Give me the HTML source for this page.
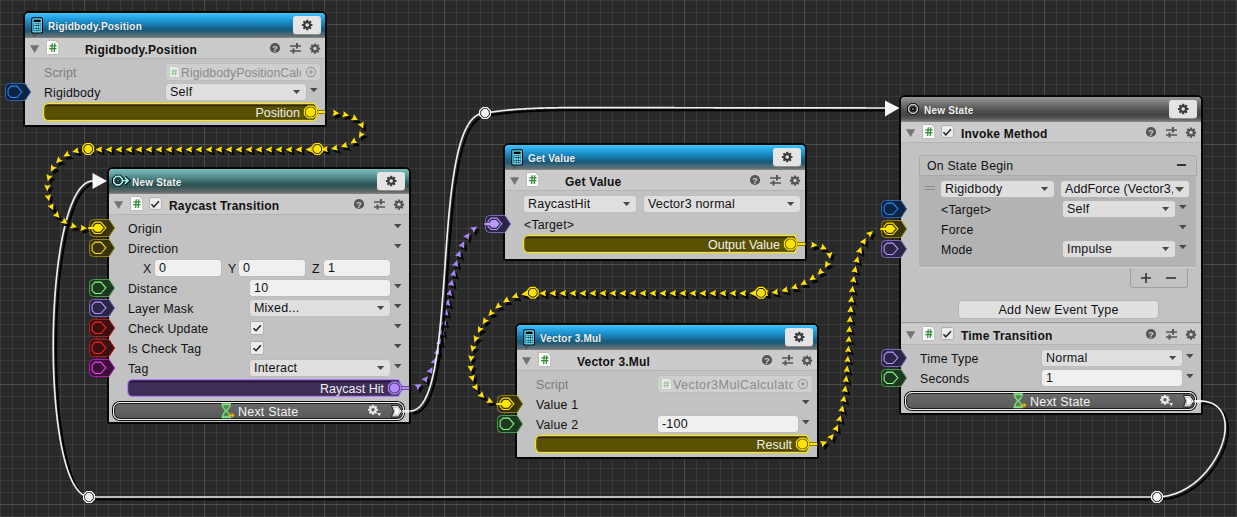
<!DOCTYPE html><html><head><meta charset="utf-8"><style>
html,body{margin:0;padding:0;width:1237px;height:517px;overflow:hidden;background:#292929;font-family:"Liberation Sans", sans-serif;}
.a{position:absolute;}
.t{position:absolute;white-space:nowrap;font-size:12.5px;letter-spacing:0.2px;color:#101010;line-height:14px;}
.b{font-weight:bold;}
</style></head><body>
<svg class="a" style="left:0;top:0" width="1237" height="517"><rect x="0" y="0" width="1" height="517" fill="#fff" fill-opacity="0.08"/><rect x="12" y="0" width="1" height="517" fill="#fff" fill-opacity="0.08"/><rect x="24" y="0" width="1" height="517" fill="#fff" fill-opacity="0.08"/><rect x="36" y="0" width="1" height="517" fill="#fff" fill-opacity="0.08"/><rect x="48" y="0" width="1" height="517" fill="#fff" fill-opacity="0.08"/><rect x="60" y="0" width="1" height="517" fill="#fff" fill-opacity="0.08"/><rect x="72" y="0" width="1" height="517" fill="#fff" fill-opacity="0.08"/><rect x="84" y="0" width="1" height="517" fill="#fff" fill-opacity="0.16"/><rect x="96" y="0" width="1" height="517" fill="#fff" fill-opacity="0.08"/><rect x="108" y="0" width="1" height="517" fill="#fff" fill-opacity="0.08"/><rect x="120" y="0" width="1" height="517" fill="#fff" fill-opacity="0.08"/><rect x="132" y="0" width="1" height="517" fill="#fff" fill-opacity="0.08"/><rect x="144" y="0" width="1" height="517" fill="#fff" fill-opacity="0.08"/><rect x="156" y="0" width="1" height="517" fill="#fff" fill-opacity="0.08"/><rect x="168" y="0" width="1" height="517" fill="#fff" fill-opacity="0.08"/><rect x="180" y="0" width="1" height="517" fill="#fff" fill-opacity="0.08"/><rect x="192" y="0" width="1" height="517" fill="#fff" fill-opacity="0.08"/><rect x="204" y="0" width="1" height="517" fill="#fff" fill-opacity="0.16"/><rect x="216" y="0" width="1" height="517" fill="#fff" fill-opacity="0.08"/><rect x="228" y="0" width="1" height="517" fill="#fff" fill-opacity="0.08"/><rect x="240" y="0" width="1" height="517" fill="#fff" fill-opacity="0.08"/><rect x="252" y="0" width="1" height="517" fill="#fff" fill-opacity="0.08"/><rect x="264" y="0" width="1" height="517" fill="#fff" fill-opacity="0.08"/><rect x="276" y="0" width="1" height="517" fill="#fff" fill-opacity="0.08"/><rect x="288" y="0" width="1" height="517" fill="#fff" fill-opacity="0.08"/><rect x="300" y="0" width="1" height="517" fill="#fff" fill-opacity="0.08"/><rect x="312" y="0" width="1" height="517" fill="#fff" fill-opacity="0.08"/><rect x="324" y="0" width="1" height="517" fill="#fff" fill-opacity="0.16"/><rect x="336" y="0" width="1" height="517" fill="#fff" fill-opacity="0.08"/><rect x="348" y="0" width="1" height="517" fill="#fff" fill-opacity="0.08"/><rect x="360" y="0" width="1" height="517" fill="#fff" fill-opacity="0.08"/><rect x="372" y="0" width="1" height="517" fill="#fff" fill-opacity="0.08"/><rect x="384" y="0" width="1" height="517" fill="#fff" fill-opacity="0.08"/><rect x="396" y="0" width="1" height="517" fill="#fff" fill-opacity="0.08"/><rect x="408" y="0" width="1" height="517" fill="#fff" fill-opacity="0.08"/><rect x="420" y="0" width="1" height="517" fill="#fff" fill-opacity="0.08"/><rect x="432" y="0" width="1" height="517" fill="#fff" fill-opacity="0.08"/><rect x="444" y="0" width="1" height="517" fill="#fff" fill-opacity="0.16"/><rect x="456" y="0" width="1" height="517" fill="#fff" fill-opacity="0.08"/><rect x="468" y="0" width="1" height="517" fill="#fff" fill-opacity="0.08"/><rect x="480" y="0" width="1" height="517" fill="#fff" fill-opacity="0.08"/><rect x="492" y="0" width="1" height="517" fill="#fff" fill-opacity="0.08"/><rect x="504" y="0" width="1" height="517" fill="#fff" fill-opacity="0.08"/><rect x="516" y="0" width="1" height="517" fill="#fff" fill-opacity="0.08"/><rect x="528" y="0" width="1" height="517" fill="#fff" fill-opacity="0.08"/><rect x="540" y="0" width="1" height="517" fill="#fff" fill-opacity="0.08"/><rect x="552" y="0" width="1" height="517" fill="#fff" fill-opacity="0.08"/><rect x="564" y="0" width="1" height="517" fill="#fff" fill-opacity="0.16"/><rect x="576" y="0" width="1" height="517" fill="#fff" fill-opacity="0.08"/><rect x="588" y="0" width="1" height="517" fill="#fff" fill-opacity="0.08"/><rect x="600" y="0" width="1" height="517" fill="#fff" fill-opacity="0.08"/><rect x="612" y="0" width="1" height="517" fill="#fff" fill-opacity="0.08"/><rect x="624" y="0" width="1" height="517" fill="#fff" fill-opacity="0.08"/><rect x="636" y="0" width="1" height="517" fill="#fff" fill-opacity="0.08"/><rect x="648" y="0" width="1" height="517" fill="#fff" fill-opacity="0.08"/><rect x="660" y="0" width="1" height="517" fill="#fff" fill-opacity="0.08"/><rect x="672" y="0" width="1" height="517" fill="#fff" fill-opacity="0.08"/><rect x="684" y="0" width="1" height="517" fill="#fff" fill-opacity="0.16"/><rect x="696" y="0" width="1" height="517" fill="#fff" fill-opacity="0.08"/><rect x="708" y="0" width="1" height="517" fill="#fff" fill-opacity="0.08"/><rect x="720" y="0" width="1" height="517" fill="#fff" fill-opacity="0.08"/><rect x="732" y="0" width="1" height="517" fill="#fff" fill-opacity="0.08"/><rect x="744" y="0" width="1" height="517" fill="#fff" fill-opacity="0.08"/><rect x="756" y="0" width="1" height="517" fill="#fff" fill-opacity="0.08"/><rect x="768" y="0" width="1" height="517" fill="#fff" fill-opacity="0.08"/><rect x="780" y="0" width="1" height="517" fill="#fff" fill-opacity="0.08"/><rect x="792" y="0" width="1" height="517" fill="#fff" fill-opacity="0.08"/><rect x="804" y="0" width="1" height="517" fill="#fff" fill-opacity="0.16"/><rect x="816" y="0" width="1" height="517" fill="#fff" fill-opacity="0.08"/><rect x="828" y="0" width="1" height="517" fill="#fff" fill-opacity="0.08"/><rect x="840" y="0" width="1" height="517" fill="#fff" fill-opacity="0.08"/><rect x="852" y="0" width="1" height="517" fill="#fff" fill-opacity="0.08"/><rect x="864" y="0" width="1" height="517" fill="#fff" fill-opacity="0.08"/><rect x="876" y="0" width="1" height="517" fill="#fff" fill-opacity="0.08"/><rect x="888" y="0" width="1" height="517" fill="#fff" fill-opacity="0.08"/><rect x="900" y="0" width="1" height="517" fill="#fff" fill-opacity="0.08"/><rect x="912" y="0" width="1" height="517" fill="#fff" fill-opacity="0.08"/><rect x="924" y="0" width="1" height="517" fill="#fff" fill-opacity="0.16"/><rect x="936" y="0" width="1" height="517" fill="#fff" fill-opacity="0.08"/><rect x="948" y="0" width="1" height="517" fill="#fff" fill-opacity="0.08"/><rect x="960" y="0" width="1" height="517" fill="#fff" fill-opacity="0.08"/><rect x="972" y="0" width="1" height="517" fill="#fff" fill-opacity="0.08"/><rect x="984" y="0" width="1" height="517" fill="#fff" fill-opacity="0.08"/><rect x="996" y="0" width="1" height="517" fill="#fff" fill-opacity="0.08"/><rect x="1008" y="0" width="1" height="517" fill="#fff" fill-opacity="0.08"/><rect x="1020" y="0" width="1" height="517" fill="#fff" fill-opacity="0.08"/><rect x="1032" y="0" width="1" height="517" fill="#fff" fill-opacity="0.08"/><rect x="1044" y="0" width="1" height="517" fill="#fff" fill-opacity="0.16"/><rect x="1056" y="0" width="1" height="517" fill="#fff" fill-opacity="0.08"/><rect x="1068" y="0" width="1" height="517" fill="#fff" fill-opacity="0.08"/><rect x="1080" y="0" width="1" height="517" fill="#fff" fill-opacity="0.08"/><rect x="1092" y="0" width="1" height="517" fill="#fff" fill-opacity="0.08"/><rect x="1104" y="0" width="1" height="517" fill="#fff" fill-opacity="0.08"/><rect x="1116" y="0" width="1" height="517" fill="#fff" fill-opacity="0.08"/><rect x="1128" y="0" width="1" height="517" fill="#fff" fill-opacity="0.08"/><rect x="1140" y="0" width="1" height="517" fill="#fff" fill-opacity="0.08"/><rect x="1152" y="0" width="1" height="517" fill="#fff" fill-opacity="0.08"/><rect x="1164" y="0" width="1" height="517" fill="#fff" fill-opacity="0.16"/><rect x="1176" y="0" width="1" height="517" fill="#fff" fill-opacity="0.08"/><rect x="1188" y="0" width="1" height="517" fill="#fff" fill-opacity="0.08"/><rect x="1200" y="0" width="1" height="517" fill="#fff" fill-opacity="0.08"/><rect x="1212" y="0" width="1" height="517" fill="#fff" fill-opacity="0.08"/><rect x="1224" y="0" width="1" height="517" fill="#fff" fill-opacity="0.08"/><rect x="1236" y="0" width="1" height="517" fill="#fff" fill-opacity="0.08"/><rect x="0" y="0" width="1237" height="1" fill="#fff" fill-opacity="0.08"/><rect x="0" y="12" width="1237" height="1" fill="#fff" fill-opacity="0.08"/><rect x="0" y="24" width="1237" height="1" fill="#fff" fill-opacity="0.16"/><rect x="0" y="36" width="1237" height="1" fill="#fff" fill-opacity="0.08"/><rect x="0" y="48" width="1237" height="1" fill="#fff" fill-opacity="0.08"/><rect x="0" y="60" width="1237" height="1" fill="#fff" fill-opacity="0.08"/><rect x="0" y="72" width="1237" height="1" fill="#fff" fill-opacity="0.08"/><rect x="0" y="84" width="1237" height="1" fill="#fff" fill-opacity="0.08"/><rect x="0" y="96" width="1237" height="1" fill="#fff" fill-opacity="0.08"/><rect x="0" y="108" width="1237" height="1" fill="#fff" fill-opacity="0.08"/><rect x="0" y="120" width="1237" height="1" fill="#fff" fill-opacity="0.08"/><rect x="0" y="132" width="1237" height="1" fill="#fff" fill-opacity="0.08"/><rect x="0" y="144" width="1237" height="1" fill="#fff" fill-opacity="0.16"/><rect x="0" y="156" width="1237" height="1" fill="#fff" fill-opacity="0.08"/><rect x="0" y="168" width="1237" height="1" fill="#fff" fill-opacity="0.08"/><rect x="0" y="180" width="1237" height="1" fill="#fff" fill-opacity="0.08"/><rect x="0" y="192" width="1237" height="1" fill="#fff" fill-opacity="0.08"/><rect x="0" y="204" width="1237" height="1" fill="#fff" fill-opacity="0.08"/><rect x="0" y="216" width="1237" height="1" fill="#fff" fill-opacity="0.08"/><rect x="0" y="228" width="1237" height="1" fill="#fff" fill-opacity="0.08"/><rect x="0" y="240" width="1237" height="1" fill="#fff" fill-opacity="0.08"/><rect x="0" y="252" width="1237" height="1" fill="#fff" fill-opacity="0.08"/><rect x="0" y="264" width="1237" height="1" fill="#fff" fill-opacity="0.16"/><rect x="0" y="276" width="1237" height="1" fill="#fff" fill-opacity="0.08"/><rect x="0" y="288" width="1237" height="1" fill="#fff" fill-opacity="0.08"/><rect x="0" y="300" width="1237" height="1" fill="#fff" fill-opacity="0.08"/><rect x="0" y="312" width="1237" height="1" fill="#fff" fill-opacity="0.08"/><rect x="0" y="324" width="1237" height="1" fill="#fff" fill-opacity="0.08"/><rect x="0" y="336" width="1237" height="1" fill="#fff" fill-opacity="0.08"/><rect x="0" y="348" width="1237" height="1" fill="#fff" fill-opacity="0.08"/><rect x="0" y="360" width="1237" height="1" fill="#fff" fill-opacity="0.08"/><rect x="0" y="372" width="1237" height="1" fill="#fff" fill-opacity="0.08"/><rect x="0" y="384" width="1237" height="1" fill="#fff" fill-opacity="0.16"/><rect x="0" y="396" width="1237" height="1" fill="#fff" fill-opacity="0.08"/><rect x="0" y="408" width="1237" height="1" fill="#fff" fill-opacity="0.08"/><rect x="0" y="420" width="1237" height="1" fill="#fff" fill-opacity="0.08"/><rect x="0" y="432" width="1237" height="1" fill="#fff" fill-opacity="0.08"/><rect x="0" y="444" width="1237" height="1" fill="#fff" fill-opacity="0.08"/><rect x="0" y="456" width="1237" height="1" fill="#fff" fill-opacity="0.08"/><rect x="0" y="468" width="1237" height="1" fill="#fff" fill-opacity="0.08"/><rect x="0" y="480" width="1237" height="1" fill="#fff" fill-opacity="0.08"/><rect x="0" y="492" width="1237" height="1" fill="#fff" fill-opacity="0.08"/><rect x="0" y="504" width="1237" height="1" fill="#fff" fill-opacity="0.16"/><rect x="0" y="516" width="1237" height="1" fill="#fff" fill-opacity="0.08"/></svg>
<div class="a" style="left:23px;top:11px;width:304px;height:116px;background:#050505;border-radius:6px 6px 2px 2px"></div>
<div class="a" style="left:25px;top:13px;width:300px;height:112px;background:#c2c2c2;border-radius:4px 4px 0 0;overflow:hidden"><div class="a" style="left:0;top:0;width:300px;height:25px;background:linear-gradient(to bottom,#42c4f8 0px,#30b0ee 3px,#1c92cf 8px,#177aab 12px,#155e80 16px,#1f5a78 18px,#486a7a 21px,#5c6c74 23px,#8a8a8a 25px)"></div></div>
<div class="a" style="left:293px;top:16px;width:28px;height:18px;background:#e4e4e4;border-radius:3px;box-shadow:0 1px 0 #9a8a80"></div>
<svg style="position:absolute;left:293px;top:16px;overflow:visible" width="28" height="18" viewBox="0 0 28 18" ><g transform="translate(14.2,9)"><circle r="3.82" fill="#3a3a3a"/><rect x="-1.11" y="-5.30" width="2.23" height="2.48" rx="0.67" fill="#3a3a3a" transform="rotate(0)"/><rect x="-1.11" y="-5.30" width="2.23" height="2.48" rx="0.67" fill="#3a3a3a" transform="rotate(45)"/><rect x="-1.11" y="-5.30" width="2.23" height="2.48" rx="0.67" fill="#3a3a3a" transform="rotate(90)"/><rect x="-1.11" y="-5.30" width="2.23" height="2.48" rx="0.67" fill="#3a3a3a" transform="rotate(135)"/><rect x="-1.11" y="-5.30" width="2.23" height="2.48" rx="0.67" fill="#3a3a3a" transform="rotate(180)"/><rect x="-1.11" y="-5.30" width="2.23" height="2.48" rx="0.67" fill="#3a3a3a" transform="rotate(225)"/><rect x="-1.11" y="-5.30" width="2.23" height="2.48" rx="0.67" fill="#3a3a3a" transform="rotate(270)"/><rect x="-1.11" y="-5.30" width="2.23" height="2.48" rx="0.67" fill="#3a3a3a" transform="rotate(315)"/><circle r="1.80" fill="#e4e4e4"/></g></svg>
<div class="t b" style="left:48px;top:20px;font-size:10px;color:#f4f4f4;text-shadow:0 0 1px rgba(0,0,0,.5)">Rigidbody.Position</div>
<svg style="position:absolute;left:31px;top:16.5px;overflow:visible" width="13" height="22" viewBox="0 0 13 22" ><rect x="0.2" y="0.2" width="11.8" height="16.4" rx="1.8" fill="#000"/><rect x="1.3" y="1.3" width="9.6" height="14.2" rx="1" fill="#6ae4ff"/><rect x="2.6" y="2.6" width="7" height="2.4" fill="#000"/><rect x="2.6" y="5.9" width="7" height="8.2" fill="#000"/><rect x="3.00" y="6.30" width="1.95" height="2.1" fill="#6ae4ff"/><rect x="5.30" y="6.30" width="1.95" height="2.1" fill="#6ae4ff"/><rect x="7.60" y="6.30" width="1.95" height="2.1" fill="#6ae4ff"/><rect x="3.00" y="8.90" width="1.95" height="2.1" fill="#6ae4ff"/><rect x="5.30" y="8.90" width="1.95" height="2.1" fill="#6ae4ff"/><rect x="7.60" y="8.90" width="1.95" height="2.1" fill="#6ae4ff"/><rect x="3.00" y="11.50" width="1.95" height="2.1" fill="#6ae4ff"/><rect x="5.30" y="11.50" width="1.95" height="2.1" fill="#6ae4ff"/><rect x="7.60" y="11.50" width="1.95" height="2.1" fill="#6ae4ff"/><path d="M0.5,17 H6.5 L3.5,20.5Z" fill="#555" opacity="0.85"/></svg>
<div class="a" style="left:25px;top:38px;width:300px;height:20px;background:#cbcbcb;border-bottom:1px solid #b4b4b4"></div>
<svg style="position:absolute;left:30px;top:45px;overflow:visible" width="10" height="9" viewBox="0 0 10 9" ><path d="M0,0.3 L9.2,0.3 L4.6,8Z" fill="#737373"/></svg>
<svg style="position:absolute;left:45.5px;top:40.4px;overflow:visible" width="14" height="16" viewBox="0 0 14 16" ><path d="M1.5,0.5 H9.3 L12.8,4 V13.6 Q12.8,14.6 11.8,14.6 H1.5 Q0.5,14.6 0.5,13.6 V1.5 Q0.5,0.5 1.5,0.5Z" fill="#fdfdfd" stroke="#b4b4b4" stroke-width="0.9"/><path d="M6.3,3.2 L5.7,12 M8.8,3.2 L8.2,12 M3.4,5.8 H10.6 M3.2,8.6 H10.4" stroke="#2f8a2f" stroke-width="1.25" fill="none"/></svg>
<div class="t b" style="left:85px;top:43px;font-size:12px;color:#111">Rigidbody.Position</div>
<svg style="position:absolute;left:269px;top:42px;overflow:visible" width="12" height="12" viewBox="0 0 12 12" ><circle cx="6" cy="6" r="5.1" fill="#555"/><text x="6" y="9.8" font-size="9.5" font-weight="bold" text-anchor="middle" fill="#cbcbcb" font-family="Liberation Sans">?</text></svg>
<svg style="position:absolute;left:289px;top:41.5px;overflow:visible" width="13" height="12" viewBox="0 0 13 12" ><path d="M1,4 H12 M1,9 H12" stroke="#555" stroke-width="1.6"/><path d="M8,1 V6.5 M4.5,6.5 V11.5" stroke="#555" stroke-width="2"/></svg>
<svg style="position:absolute;left:308px;top:40px;overflow:visible" width="14" height="14" viewBox="0 0 14 14" ><g transform="translate(7,8.6)"><circle r="3.74" fill="#555"/><rect x="-1.09" y="-5.20" width="2.18" height="2.46" rx="0.66" fill="#555" transform="rotate(0)"/><rect x="-1.09" y="-5.20" width="2.18" height="2.46" rx="0.66" fill="#555" transform="rotate(45)"/><rect x="-1.09" y="-5.20" width="2.18" height="2.46" rx="0.66" fill="#555" transform="rotate(90)"/><rect x="-1.09" y="-5.20" width="2.18" height="2.46" rx="0.66" fill="#555" transform="rotate(135)"/><rect x="-1.09" y="-5.20" width="2.18" height="2.46" rx="0.66" fill="#555" transform="rotate(180)"/><rect x="-1.09" y="-5.20" width="2.18" height="2.46" rx="0.66" fill="#555" transform="rotate(225)"/><rect x="-1.09" y="-5.20" width="2.18" height="2.46" rx="0.66" fill="#555" transform="rotate(270)"/><rect x="-1.09" y="-5.20" width="2.18" height="2.46" rx="0.66" fill="#555" transform="rotate(315)"/><circle r="1.77" fill="#cbcbcb"/></g></svg>
<div class="t" style="left:44px;top:65.5px;font-size:12.3px;color:#7a7a7a;">Script</div>
<div class="a" style="left:166px;top:64px;width:154px;height:16px;background:#cfcfcf;border-radius:3px;box-shadow:0 0 0 0.5px #b8b8b8"></div>
<svg style="position:absolute;left:169px;top:66px;overflow:visible" width="11" height="12" viewBox="0 0 11 12" ><path d="M1,0.5 H7.5 L10.5,3.5 V11 Q10.5,11.5 10,11.5 H1 Q0.5,11.5 0.5,11 V1 Q0.5,0.5 1,0.5Z" fill="#ececec" stroke="#c4c4c4" stroke-width="0.8"/><path d="M4.3,3 L3.7,9.5 M7,3 L6.4,9.5 M2.4,5 H8.4 M2.2,7.5 H8.2" stroke="#8cbf8c" stroke-width="0.9"/></svg>
<div class="t" style="left:181px;top:66px;width:120px;overflow:hidden;font-size:12.3px;letter-spacing:0.05px;color:#8a8a8a">RigidbodyPositionCalculator</div>
<svg style="position:absolute;left:305px;top:66px;overflow:visible" width="12" height="12" viewBox="0 0 12 12" ><circle cx="6" cy="6" r="4.6" fill="none" stroke="#9a9a9a" stroke-width="1.1"/><circle cx="6" cy="6" r="1.8" fill="#9a9a9a"/></svg>
<svg style="position:absolute;left:5px;top:83px;overflow:visible" width="26" height="18" viewBox="0 0 26 18" ><path d="M4.5,0.5 H20 L25.6,9 L20,17.5 H4.5 Q0.5,17.5 0.5,13.5 V4.5 Q0.5,0.5 4.5,0.5Z" fill="#0d2440" stroke="#2d62a6" stroke-width="1"/><path d="M6.1,3.1 L11.8,3.1 L16.9,8.8 L11.8,14.5 L6.1,14.5 L3.1,11.6 L3.1,6.1Z" fill="none" stroke="#1e8cff" stroke-width="1.05"/></svg>
<div class="t" style="left:44px;top:85.5px;font-size:12.3px;color:#111;">Rigidbody</div>
<div class="a" style="left:166px;top:84px;width:140px;height:16px;background:#dfdfdf;border-radius:3px;box-shadow:0 0 0 0.5px #b8b8b8"></div>
<div class="t" style="left:170px;top:85px;font-size:12.5px;letter-spacing:0.2px;color:#111">Self</div>
<svg style="position:absolute;left:293.3px;top:90px;overflow:visible" width="8" height="5" viewBox="0 0 8 5" ><path d="M0,0 H7.2 L3.6,3.9Z" fill="#4a4a44"/></svg>
<svg style="position:absolute;left:310.1px;top:87.9px;overflow:visible" width="9" height="6" viewBox="0 0 9 6" ><path d="M0,0 H7.6 L3.8,4.2Z" fill="#4a4a44"/></svg>
<svg style="position:absolute;left:43px;top:103px;overflow:visible" width="283" height="18" viewBox="0 0 283 18" ><defs><linearGradient id="gyellow112" x1="0" y1="0" x2="0" y2="1"><stop offset="0.06" stop-color="#2e2a00"/><stop offset="0.12" stop-color="#2e2a00"/><stop offset="0.2" stop-color="#5a5100"/><stop offset="0.86" stop-color="#5a5100"/><stop offset="0.94" stop-color="#2e2a00" stop-opacity="0.9"/></linearGradient></defs><path d="M6,0.6 H271.5 L276.3,9 L271.5,17.4 H6 Q0.6,17.4 0.6,12 V6 Q0.6,0.6 6,0.6Z" fill="url(#gyellow112)" stroke="#ffe800" stroke-width="1.2"/><rect x="274" y="7.4" width="8.5" height="3.2" fill="#ffe400" stroke="#111" stroke-width="0.5"/><polygon points="273.60,11.45 270.03,14.91 264.97,14.91 261.40,11.45 261.40,6.55 264.97,3.09 270.03,3.09 273.60,6.55" fill="#5a5100" stroke="#ffe400" stroke-width="1.1"/><polygon points="272.12,10.84 269.41,13.43 265.59,13.43 262.88,10.84 262.88,7.16 265.59,4.57 269.41,4.57 272.12,7.16" fill="#ffe400"/></svg>
<div class="t" style="left:43px;top:106px;width:257px;text-align:right;font-size:12.5px;letter-spacing:0px;color:#f0f0f0">Position</div>
<div class="a" style="left:107px;top:167px;width:304px;height:257px;background:#050505;border-radius:6px 6px 2px 2px"></div>
<div class="a" style="left:109px;top:169px;width:300px;height:253px;background:#c2c2c2;border-radius:4px 4px 0 0;overflow:hidden"><div class="a" style="left:0;top:0;width:300px;height:25px;background:linear-gradient(to bottom,#7bbcbb 0px,#6aa8a8 4px,#4f8585 9px,#345e5e 14px,#2e5252 17px,#4a6060 20px,#626a6a 23px,#8a8a8a 25px)"></div></div>
<div class="a" style="left:377px;top:172px;width:28px;height:18px;background:#e4e4e4;border-radius:3px;box-shadow:0 1px 0 #9a8a80"></div>
<svg style="position:absolute;left:377px;top:172px;overflow:visible" width="28" height="18" viewBox="0 0 28 18" ><g transform="translate(14.2,9)"><circle r="3.82" fill="#3a3a3a"/><rect x="-1.11" y="-5.30" width="2.23" height="2.48" rx="0.67" fill="#3a3a3a" transform="rotate(0)"/><rect x="-1.11" y="-5.30" width="2.23" height="2.48" rx="0.67" fill="#3a3a3a" transform="rotate(45)"/><rect x="-1.11" y="-5.30" width="2.23" height="2.48" rx="0.67" fill="#3a3a3a" transform="rotate(90)"/><rect x="-1.11" y="-5.30" width="2.23" height="2.48" rx="0.67" fill="#3a3a3a" transform="rotate(135)"/><rect x="-1.11" y="-5.30" width="2.23" height="2.48" rx="0.67" fill="#3a3a3a" transform="rotate(180)"/><rect x="-1.11" y="-5.30" width="2.23" height="2.48" rx="0.67" fill="#3a3a3a" transform="rotate(225)"/><rect x="-1.11" y="-5.30" width="2.23" height="2.48" rx="0.67" fill="#3a3a3a" transform="rotate(270)"/><rect x="-1.11" y="-5.30" width="2.23" height="2.48" rx="0.67" fill="#3a3a3a" transform="rotate(315)"/><circle r="1.80" fill="#e4e4e4"/></g></svg>
<div class="t b" style="left:132px;top:176px;font-size:10px;color:#f4f4f4;text-shadow:0 0 1px rgba(0,0,0,.5)">New State</div>
<svg style="position:absolute;left:112px;top:174px;overflow:visible" width="24" height="15" viewBox="0 0 24 15" ><polygon points="10.25,8.36 7.76,10.85 4.24,10.85 1.75,8.36 1.75,4.84 4.24,2.35 7.76,2.35 10.25,4.84" fill="none" stroke="#000" stroke-width="3.4"/><path d="M10,6.6 H15 M12.8,3.3 L16.3,6.6 L12.8,9.9" stroke="#000" stroke-width="3.6" fill="none" stroke-linejoin="miter"/><polygon points="10.25,8.36 7.76,10.85 4.24,10.85 1.75,8.36 1.75,4.84 4.24,2.35 7.76,2.35 10.25,4.84" fill="none" stroke="#a0f0f0" stroke-width="1.6"/><circle cx="6" cy="6.6" r="1.6" fill="#4a8888" stroke="#000" stroke-width="1"/><path d="M10,6.6 H15.5 M12.8,3.3 L16.3,6.6 L12.8,9.9" stroke="#a0f0f0" stroke-width="1.6" fill="none"/></svg>
<div class="a" style="left:109px;top:194px;width:300px;height:20px;background:#cbcbcb;border-bottom:1px solid #b4b4b4"></div>
<svg style="position:absolute;left:114px;top:201px;overflow:visible" width="10" height="9" viewBox="0 0 10 9" ><path d="M0,0.3 L9.2,0.3 L4.6,8Z" fill="#737373"/></svg>
<svg style="position:absolute;left:129.5px;top:196.4px;overflow:visible" width="14" height="16" viewBox="0 0 14 16" ><path d="M1.5,0.5 H9.3 L12.8,4 V13.6 Q12.8,14.6 11.8,14.6 H1.5 Q0.5,14.6 0.5,13.6 V1.5 Q0.5,0.5 1.5,0.5Z" fill="#fdfdfd" stroke="#b4b4b4" stroke-width="0.9"/><path d="M6.3,3.2 L5.7,12 M8.8,3.2 L8.2,12 M3.4,5.8 H10.6 M3.2,8.6 H10.4" stroke="#2f8a2f" stroke-width="1.25" fill="none"/></svg>
<div class="a" style="left:148.5px;top:196.5px;width:11px;height:11.5px;background:#ececec;border:1px solid #b0b0b0;border-radius:2px"></div>
<svg style="position:absolute;left:149px;top:196.5px;overflow:visible" width="12" height="13" viewBox="0 0 12 13" ><path d="M2.4,7.2 L4.8,9.8 L10,4.2" stroke="#2a2a2a" stroke-width="1.5" fill="none"/></svg>
<div class="t b" style="left:169px;top:199px;font-size:12px;color:#111">Raycast Transition</div>
<svg style="position:absolute;left:353px;top:198px;overflow:visible" width="12" height="12" viewBox="0 0 12 12" ><circle cx="6" cy="6" r="5.1" fill="#555"/><text x="6" y="9.8" font-size="9.5" font-weight="bold" text-anchor="middle" fill="#cbcbcb" font-family="Liberation Sans">?</text></svg>
<svg style="position:absolute;left:373px;top:197.5px;overflow:visible" width="13" height="12" viewBox="0 0 13 12" ><path d="M1,4 H12 M1,9 H12" stroke="#555" stroke-width="1.6"/><path d="M8,1 V6.5 M4.5,6.5 V11.5" stroke="#555" stroke-width="2"/></svg>
<svg style="position:absolute;left:392px;top:196px;overflow:visible" width="14" height="14" viewBox="0 0 14 14" ><g transform="translate(7,8.6)"><circle r="3.74" fill="#555"/><rect x="-1.09" y="-5.20" width="2.18" height="2.46" rx="0.66" fill="#555" transform="rotate(0)"/><rect x="-1.09" y="-5.20" width="2.18" height="2.46" rx="0.66" fill="#555" transform="rotate(45)"/><rect x="-1.09" y="-5.20" width="2.18" height="2.46" rx="0.66" fill="#555" transform="rotate(90)"/><rect x="-1.09" y="-5.20" width="2.18" height="2.46" rx="0.66" fill="#555" transform="rotate(135)"/><rect x="-1.09" y="-5.20" width="2.18" height="2.46" rx="0.66" fill="#555" transform="rotate(180)"/><rect x="-1.09" y="-5.20" width="2.18" height="2.46" rx="0.66" fill="#555" transform="rotate(225)"/><rect x="-1.09" y="-5.20" width="2.18" height="2.46" rx="0.66" fill="#555" transform="rotate(270)"/><rect x="-1.09" y="-5.20" width="2.18" height="2.46" rx="0.66" fill="#555" transform="rotate(315)"/><circle r="1.77" fill="#cbcbcb"/></g></svg>
<svg style="position:absolute;left:89px;top:219px;overflow:visible" width="26" height="18" viewBox="0 0 26 18" ><path d="M4.5,0.5 H20 L25.6,9 L20,17.5 H4.5 Q0.5,17.5 0.5,13.5 V4.5 Q0.5,0.5 4.5,0.5Z" fill="#38330c" stroke="#8e7e14" stroke-width="1"/><rect x="-1" y="7.6" width="7" height="2.8" fill="#ffe400" stroke="#111" stroke-width="0.5"/><path d="M6.1,3.1 L11.8,3.1 L16.9,8.8 L11.8,14.5 L6.1,14.5 L3.1,11.6 L3.1,6.1Z" fill="none" stroke="#ffe400" stroke-width="1.05"/><path d="M6.9,4.9 L11.1,4.9 L14.7,8.8 L11.1,12.7 L6.9,12.7 L4.9,10.8 L4.9,6.9Z" fill="#ffe400"/></svg>
<div class="t" style="left:128px;top:221.5px;font-size:12.3px;color:#111;">Origin</div>
<svg style="position:absolute;left:394.1px;top:223.9px;overflow:visible" width="9" height="6" viewBox="0 0 9 6" ><path d="M0,0 H7.6 L3.8,4.2Z" fill="#4a4a44"/></svg>
<svg style="position:absolute;left:89px;top:239px;overflow:visible" width="26" height="18" viewBox="0 0 26 18" ><path d="M4.5,0.5 H20 L25.6,9 L20,17.5 H4.5 Q0.5,17.5 0.5,13.5 V4.5 Q0.5,0.5 4.5,0.5Z" fill="#38330c" stroke="#8e7e14" stroke-width="1"/><path d="M6.1,3.1 L11.8,3.1 L16.9,8.8 L11.8,14.5 L6.1,14.5 L3.1,11.6 L3.1,6.1Z" fill="none" stroke="#ffe400" stroke-width="1.05"/></svg>
<div class="t" style="left:128px;top:241.5px;font-size:12.3px;color:#111;">Direction</div>
<svg style="position:absolute;left:394.1px;top:243.9px;overflow:visible" width="9" height="6" viewBox="0 0 9 6" ><path d="M0,0 H7.6 L3.8,4.2Z" fill="#4a4a44"/></svg>
<div class="t" style="left:143px;top:261.5px;font-size:12.3px;color:#111;">X</div>
<div class="a" style="left:155px;top:260px;width:66px;height:16px;background:#f0f0f0;border-radius:3px;box-shadow:0 0 0 0.5px #b8b8b8"></div>
<div class="t" style="left:159px;top:261px;font-size:12.5px;letter-spacing:0.2px;color:#111">0</div>
<div class="t" style="left:228px;top:261.5px;font-size:12.3px;color:#111;">Y</div>
<div class="a" style="left:239px;top:260px;width:66px;height:16px;background:#f0f0f0;border-radius:3px;box-shadow:0 0 0 0.5px #b8b8b8"></div>
<div class="t" style="left:243px;top:261px;font-size:12.5px;letter-spacing:0.2px;color:#111">0</div>
<div class="t" style="left:312px;top:261.5px;font-size:12.3px;color:#111;">Z</div>
<div class="a" style="left:324px;top:260px;width:66px;height:16px;background:#f0f0f0;border-radius:3px;box-shadow:0 0 0 0.5px #b8b8b8"></div>
<div class="t" style="left:328px;top:261px;font-size:12.5px;letter-spacing:0.2px;color:#111">1</div>
<svg style="position:absolute;left:89px;top:279px;overflow:visible" width="26" height="18" viewBox="0 0 26 18" ><path d="M4.5,0.5 H20 L25.6,9 L20,17.5 H4.5 Q0.5,17.5 0.5,13.5 V4.5 Q0.5,0.5 4.5,0.5Z" fill="#1d3a1e" stroke="#4a984c" stroke-width="1"/><path d="M6.1,3.1 L11.8,3.1 L16.9,8.8 L11.8,14.5 L6.1,14.5 L3.1,11.6 L3.1,6.1Z" fill="none" stroke="#86ff86" stroke-width="1.05"/></svg>
<div class="t" style="left:128px;top:281.5px;font-size:12.3px;color:#111;">Distance</div>
<div class="a" style="left:250px;top:280px;width:140px;height:16px;background:#f0f0f0;border-radius:3px;box-shadow:0 0 0 0.5px #b8b8b8"></div>
<div class="t" style="left:254px;top:281px;font-size:12.5px;letter-spacing:0.2px;color:#111">10</div>
<svg style="position:absolute;left:394.1px;top:283.9px;overflow:visible" width="9" height="6" viewBox="0 0 9 6" ><path d="M0,0 H7.6 L3.8,4.2Z" fill="#4a4a44"/></svg>
<svg style="position:absolute;left:89px;top:299px;overflow:visible" width="26" height="18" viewBox="0 0 26 18" ><path d="M4.5,0.5 H20 L25.6,9 L20,17.5 H4.5 Q0.5,17.5 0.5,13.5 V4.5 Q0.5,0.5 4.5,0.5Z" fill="#2c2646" stroke="#7a68b6" stroke-width="1"/><path d="M6.1,3.1 L11.8,3.1 L16.9,8.8 L11.8,14.5 L6.1,14.5 L3.1,11.6 L3.1,6.1Z" fill="none" stroke="#b898ff" stroke-width="1.05"/></svg>
<div class="t" style="left:128px;top:301.5px;font-size:12.3px;color:#111;">Layer Mask</div>
<div class="a" style="left:250px;top:300px;width:140px;height:16px;background:#dfdfdf;border-radius:3px;box-shadow:0 0 0 0.5px #b8b8b8"></div>
<div class="t" style="left:254px;top:301px;font-size:12.5px;letter-spacing:0.2px;color:#111">Mixed...</div>
<svg style="position:absolute;left:377.3px;top:306px;overflow:visible" width="8" height="5" viewBox="0 0 8 5" ><path d="M0,0 H7.2 L3.6,3.9Z" fill="#4a4a44"/></svg>
<svg style="position:absolute;left:394.1px;top:303.9px;overflow:visible" width="9" height="6" viewBox="0 0 9 6" ><path d="M0,0 H7.6 L3.8,4.2Z" fill="#4a4a44"/></svg>
<svg style="position:absolute;left:89px;top:319px;overflow:visible" width="26" height="18" viewBox="0 0 26 18" ><path d="M4.5,0.5 H20 L25.6,9 L20,17.5 H4.5 Q0.5,17.5 0.5,13.5 V4.5 Q0.5,0.5 4.5,0.5Z" fill="#3c1010" stroke="#b0181a" stroke-width="1"/><path d="M6.1,3.1 L11.8,3.1 L16.9,8.8 L11.8,14.5 L6.1,14.5 L3.1,11.6 L3.1,6.1Z" fill="none" stroke="#ff2424" stroke-width="1.05"/></svg>
<div class="t" style="left:128px;top:321.5px;font-size:12.3px;color:#111;">Check Update</div>
<svg style="position:absolute;left:394.1px;top:323.9px;overflow:visible" width="9" height="6" viewBox="0 0 9 6" ><path d="M0,0 H7.6 L3.8,4.2Z" fill="#4a4a44"/></svg>
<div class="a" style="left:250px;top:321px;width:12px;height:12px;background:#ececec;border:1px solid #b0b0b0;border-radius:2px"></div>
<svg style="position:absolute;left:251px;top:322px;overflow:visible" width="12" height="12" viewBox="0 0 12 12" ><path d="M2.5,6.2 L5,8.7 L9.8,3.2" stroke="#222" stroke-width="1.6" fill="none"/></svg>
<svg style="position:absolute;left:89px;top:339px;overflow:visible" width="26" height="18" viewBox="0 0 26 18" ><path d="M4.5,0.5 H20 L25.6,9 L20,17.5 H4.5 Q0.5,17.5 0.5,13.5 V4.5 Q0.5,0.5 4.5,0.5Z" fill="#3c1010" stroke="#b0181a" stroke-width="1"/><path d="M6.1,3.1 L11.8,3.1 L16.9,8.8 L11.8,14.5 L6.1,14.5 L3.1,11.6 L3.1,6.1Z" fill="none" stroke="#ff2424" stroke-width="1.05"/></svg>
<div class="t" style="left:128px;top:341.5px;font-size:12.3px;color:#111;">Is Check Tag</div>
<svg style="position:absolute;left:394.1px;top:343.9px;overflow:visible" width="9" height="6" viewBox="0 0 9 6" ><path d="M0,0 H7.6 L3.8,4.2Z" fill="#4a4a44"/></svg>
<div class="a" style="left:250px;top:341px;width:12px;height:12px;background:#ececec;border:1px solid #b0b0b0;border-radius:2px"></div>
<svg style="position:absolute;left:251px;top:342px;overflow:visible" width="12" height="12" viewBox="0 0 12 12" ><path d="M2.5,6.2 L5,8.7 L9.8,3.2" stroke="#222" stroke-width="1.6" fill="none"/></svg>
<svg style="position:absolute;left:89px;top:359px;overflow:visible" width="26" height="18" viewBox="0 0 26 18" ><path d="M4.5,0.5 H20 L25.6,9 L20,17.5 H4.5 Q0.5,17.5 0.5,13.5 V4.5 Q0.5,0.5 4.5,0.5Z" fill="#3a1038" stroke="#b01cb0" stroke-width="1"/><path d="M6.1,3.1 L11.8,3.1 L16.9,8.8 L11.8,14.5 L6.1,14.5 L3.1,11.6 L3.1,6.1Z" fill="none" stroke="#ff3cff" stroke-width="1.05"/></svg>
<div class="t" style="left:128px;top:361.5px;font-size:12.3px;color:#111;">Tag</div>
<div class="a" style="left:250px;top:360px;width:140px;height:16px;background:#dfdfdf;border-radius:3px;box-shadow:0 0 0 0.5px #b8b8b8"></div>
<div class="t" style="left:254px;top:361px;font-size:12.5px;letter-spacing:0.2px;color:#111">Interact</div>
<svg style="position:absolute;left:377.3px;top:366px;overflow:visible" width="8" height="5" viewBox="0 0 8 5" ><path d="M0,0 H7.2 L3.6,3.9Z" fill="#4a4a44"/></svg>
<svg style="position:absolute;left:394.1px;top:363.9px;overflow:visible" width="9" height="6" viewBox="0 0 9 6" ><path d="M0,0 H7.6 L3.8,4.2Z" fill="#4a4a44"/></svg>
<svg style="position:absolute;left:127px;top:379px;overflow:visible" width="283" height="18" viewBox="0 0 283 18" ><defs><linearGradient id="gpurple388" x1="0" y1="0" x2="0" y2="1"><stop offset="0.06" stop-color="#211a2e"/><stop offset="0.12" stop-color="#211a2e"/><stop offset="0.2" stop-color="#3f2d5a"/><stop offset="0.86" stop-color="#3f2d5a"/><stop offset="0.94" stop-color="#211a2e" stop-opacity="0.9"/></linearGradient></defs><path d="M6,0.6 H271.5 L276.3,9 L271.5,17.4 H6 Q0.6,17.4 0.6,12 V6 Q0.6,0.6 6,0.6Z" fill="url(#gpurple388)" stroke="#b080ff" stroke-width="1.2"/><rect x="274" y="7.4" width="8.5" height="3.2" fill="#b488ff" stroke="#111" stroke-width="0.5"/><polygon points="273.60,11.45 270.03,14.91 264.97,14.91 261.40,11.45 261.40,6.55 264.97,3.09 270.03,3.09 273.60,6.55" fill="#3f2d5a" stroke="#b488ff" stroke-width="1.1"/><polygon points="272.12,10.84 269.41,13.43 265.59,13.43 262.88,10.84 262.88,7.16 265.59,4.57 269.41,4.57 272.12,7.16" fill="#b488ff"/></svg>
<div class="t" style="left:127px;top:382px;width:257px;text-align:right;font-size:12.5px;letter-spacing:0px;color:#f0f0f0">Raycast Hit</div>
<div class="a" style="left:113px;top:402px;width:289px;height:16px;border-radius:7px;background:linear-gradient(#6a6a6a,#575757);border:1px solid #f4f4f4;box-shadow:0 0 0 1px #0a0a0a, inset 0 0 0 1px #1a1a1a"></div>
<div class="t" style="left:238px;top:405px;font-size:12.5px;color:#f4f4f4">Next State</div>
<svg style="position:absolute;left:220px;top:403px;overflow:visible" width="16" height="16" viewBox="0 0 16 16" ><path d="M1.5,1 H11 M1.5,14.5 H11" stroke="#80dc80" stroke-width="1.3"/><path d="M2.5,1.5 Q2.5,5 6.2,7.7 Q10,5 10,1.5Z" fill="#4f8a4f" stroke="#80dc80" stroke-width="1.3"/><path d="M2.5,14 Q2.5,10.5 6.2,7.7 Q10,10.5 10,14Z" fill="#4f8a4f" stroke="#80dc80" stroke-width="1.3"/><path d="M8.5,11.6 H11.5 V9.6 L14.6,12.3 L11.5,15 V13 H8.5Z" fill="#f0b400"/></svg>
<svg style="position:absolute;left:367px;top:404px;overflow:visible" width="16" height="14" viewBox="0 0 16 14" ><g transform="translate(6,5.8)"><circle r="3.60" fill="#e8e8e8"/><rect x="-1.05" y="-5.00" width="2.10" height="2.40" rx="0.63" fill="#e8e8e8" transform="rotate(0)"/><rect x="-1.05" y="-5.00" width="2.10" height="2.40" rx="0.63" fill="#e8e8e8" transform="rotate(45)"/><rect x="-1.05" y="-5.00" width="2.10" height="2.40" rx="0.63" fill="#e8e8e8" transform="rotate(90)"/><rect x="-1.05" y="-5.00" width="2.10" height="2.40" rx="0.63" fill="#e8e8e8" transform="rotate(135)"/><rect x="-1.05" y="-5.00" width="2.10" height="2.40" rx="0.63" fill="#e8e8e8" transform="rotate(180)"/><rect x="-1.05" y="-5.00" width="2.10" height="2.40" rx="0.63" fill="#e8e8e8" transform="rotate(225)"/><rect x="-1.05" y="-5.00" width="2.10" height="2.40" rx="0.63" fill="#e8e8e8" transform="rotate(270)"/><rect x="-1.05" y="-5.00" width="2.10" height="2.40" rx="0.63" fill="#e8e8e8" transform="rotate(315)"/><circle r="1.70" fill="#5c5c5c"/></g><path d="M10.3,9 H14 L12.15,12.3Z" fill="#e8e8e8"/></svg>
<svg style="position:absolute;left:391px;top:405px;overflow:visible" width="20" height="13" viewBox="0 0 20 13" ><rect x="10" y="5" width="8.5" height="2.6" fill="#f4f4f4"/><path d="M0.5,0.5 H7 L11.2,6.2 L7,11.9 H0.5 L2.6,6.2Z" fill="#f4f4f4" stroke="#111" stroke-width="0.9"/><path d="M2.6,2.2 H6.2 L9,6.2 L6.2,10.2 H2.6 L3.9,6.2Z" fill="#fff" stroke="#888" stroke-width="0.6"/></svg>
<div class="a" style="left:503px;top:143px;width:304px;height:118px;background:#050505;border-radius:6px 6px 2px 2px"></div>
<div class="a" style="left:505px;top:145px;width:300px;height:114px;background:#c2c2c2;border-radius:4px 4px 0 0;overflow:hidden"><div class="a" style="left:0;top:0;width:300px;height:25px;background:linear-gradient(to bottom,#42c4f8 0px,#30b0ee 3px,#1c92cf 8px,#177aab 12px,#155e80 16px,#1f5a78 18px,#486a7a 21px,#5c6c74 23px,#8a8a8a 25px)"></div></div>
<div class="a" style="left:773px;top:148px;width:28px;height:18px;background:#e4e4e4;border-radius:3px;box-shadow:0 1px 0 #9a8a80"></div>
<svg style="position:absolute;left:773px;top:148px;overflow:visible" width="28" height="18" viewBox="0 0 28 18" ><g transform="translate(14.2,9)"><circle r="3.82" fill="#3a3a3a"/><rect x="-1.11" y="-5.30" width="2.23" height="2.48" rx="0.67" fill="#3a3a3a" transform="rotate(0)"/><rect x="-1.11" y="-5.30" width="2.23" height="2.48" rx="0.67" fill="#3a3a3a" transform="rotate(45)"/><rect x="-1.11" y="-5.30" width="2.23" height="2.48" rx="0.67" fill="#3a3a3a" transform="rotate(90)"/><rect x="-1.11" y="-5.30" width="2.23" height="2.48" rx="0.67" fill="#3a3a3a" transform="rotate(135)"/><rect x="-1.11" y="-5.30" width="2.23" height="2.48" rx="0.67" fill="#3a3a3a" transform="rotate(180)"/><rect x="-1.11" y="-5.30" width="2.23" height="2.48" rx="0.67" fill="#3a3a3a" transform="rotate(225)"/><rect x="-1.11" y="-5.30" width="2.23" height="2.48" rx="0.67" fill="#3a3a3a" transform="rotate(270)"/><rect x="-1.11" y="-5.30" width="2.23" height="2.48" rx="0.67" fill="#3a3a3a" transform="rotate(315)"/><circle r="1.80" fill="#e4e4e4"/></g></svg>
<div class="t b" style="left:528px;top:152px;font-size:10px;color:#f4f4f4;text-shadow:0 0 1px rgba(0,0,0,.5)">Get Value</div>
<svg style="position:absolute;left:511px;top:148.5px;overflow:visible" width="13" height="22" viewBox="0 0 13 22" ><rect x="0.2" y="0.2" width="11.8" height="16.4" rx="1.8" fill="#000"/><rect x="1.3" y="1.3" width="9.6" height="14.2" rx="1" fill="#6ae4ff"/><rect x="2.6" y="2.6" width="7" height="2.4" fill="#000"/><rect x="2.6" y="5.9" width="7" height="8.2" fill="#000"/><rect x="3.00" y="6.30" width="1.95" height="2.1" fill="#6ae4ff"/><rect x="5.30" y="6.30" width="1.95" height="2.1" fill="#6ae4ff"/><rect x="7.60" y="6.30" width="1.95" height="2.1" fill="#6ae4ff"/><rect x="3.00" y="8.90" width="1.95" height="2.1" fill="#6ae4ff"/><rect x="5.30" y="8.90" width="1.95" height="2.1" fill="#6ae4ff"/><rect x="7.60" y="8.90" width="1.95" height="2.1" fill="#6ae4ff"/><rect x="3.00" y="11.50" width="1.95" height="2.1" fill="#6ae4ff"/><rect x="5.30" y="11.50" width="1.95" height="2.1" fill="#6ae4ff"/><rect x="7.60" y="11.50" width="1.95" height="2.1" fill="#6ae4ff"/><path d="M0.5,17 H6.5 L3.5,20.5Z" fill="#555" opacity="0.85"/></svg>
<div class="a" style="left:505px;top:170px;width:300px;height:20px;background:#cbcbcb;border-bottom:1px solid #b4b4b4"></div>
<svg style="position:absolute;left:510px;top:177px;overflow:visible" width="10" height="9" viewBox="0 0 10 9" ><path d="M0,0.3 L9.2,0.3 L4.6,8Z" fill="#737373"/></svg>
<svg style="position:absolute;left:525.5px;top:172.4px;overflow:visible" width="14" height="16" viewBox="0 0 14 16" ><path d="M1.5,0.5 H9.3 L12.8,4 V13.6 Q12.8,14.6 11.8,14.6 H1.5 Q0.5,14.6 0.5,13.6 V1.5 Q0.5,0.5 1.5,0.5Z" fill="#fdfdfd" stroke="#b4b4b4" stroke-width="0.9"/><path d="M6.3,3.2 L5.7,12 M8.8,3.2 L8.2,12 M3.4,5.8 H10.6 M3.2,8.6 H10.4" stroke="#2f8a2f" stroke-width="1.25" fill="none"/></svg>
<div class="t b" style="left:565px;top:175px;font-size:12px;color:#111">Get Value</div>
<svg style="position:absolute;left:749px;top:174px;overflow:visible" width="12" height="12" viewBox="0 0 12 12" ><circle cx="6" cy="6" r="5.1" fill="#555"/><text x="6" y="9.8" font-size="9.5" font-weight="bold" text-anchor="middle" fill="#cbcbcb" font-family="Liberation Sans">?</text></svg>
<svg style="position:absolute;left:769px;top:173.5px;overflow:visible" width="13" height="12" viewBox="0 0 13 12" ><path d="M1,4 H12 M1,9 H12" stroke="#555" stroke-width="1.6"/><path d="M8,1 V6.5 M4.5,6.5 V11.5" stroke="#555" stroke-width="2"/></svg>
<svg style="position:absolute;left:788px;top:172px;overflow:visible" width="14" height="14" viewBox="0 0 14 14" ><g transform="translate(7,8.6)"><circle r="3.74" fill="#555"/><rect x="-1.09" y="-5.20" width="2.18" height="2.46" rx="0.66" fill="#555" transform="rotate(0)"/><rect x="-1.09" y="-5.20" width="2.18" height="2.46" rx="0.66" fill="#555" transform="rotate(45)"/><rect x="-1.09" y="-5.20" width="2.18" height="2.46" rx="0.66" fill="#555" transform="rotate(90)"/><rect x="-1.09" y="-5.20" width="2.18" height="2.46" rx="0.66" fill="#555" transform="rotate(135)"/><rect x="-1.09" y="-5.20" width="2.18" height="2.46" rx="0.66" fill="#555" transform="rotate(180)"/><rect x="-1.09" y="-5.20" width="2.18" height="2.46" rx="0.66" fill="#555" transform="rotate(225)"/><rect x="-1.09" y="-5.20" width="2.18" height="2.46" rx="0.66" fill="#555" transform="rotate(270)"/><rect x="-1.09" y="-5.20" width="2.18" height="2.46" rx="0.66" fill="#555" transform="rotate(315)"/><circle r="1.77" fill="#cbcbcb"/></g></svg>
<div class="a" style="left:524px;top:196px;width:112px;height:16px;background:#dfdfdf;border-radius:3px;box-shadow:0 0 0 0.5px #b8b8b8"></div>
<div class="t" style="left:528px;top:197px;font-size:12.5px;letter-spacing:0.2px;color:#111">RaycastHit</div>
<svg style="position:absolute;left:623.3px;top:202px;overflow:visible" width="8" height="5" viewBox="0 0 8 5" ><path d="M0,0 H7.2 L3.6,3.9Z" fill="#4a4a44"/></svg>
<div class="a" style="left:644px;top:196px;width:156px;height:16px;background:#dfdfdf;border-radius:3px;box-shadow:0 0 0 0.5px #b8b8b8"></div>
<div class="t" style="left:648px;top:197px;font-size:12.5px;letter-spacing:0.2px;color:#111">Vector3 normal</div>
<svg style="position:absolute;left:787.3px;top:202px;overflow:visible" width="8" height="5" viewBox="0 0 8 5" ><path d="M0,0 H7.2 L3.6,3.9Z" fill="#4a4a44"/></svg>
<svg style="position:absolute;left:485px;top:215px;overflow:visible" width="26" height="18" viewBox="0 0 26 18" ><path d="M4.5,0.5 H20 L25.6,9 L20,17.5 H4.5 Q0.5,17.5 0.5,13.5 V4.5 Q0.5,0.5 4.5,0.5Z" fill="#2c2646" stroke="#7a68b6" stroke-width="1"/><rect x="-1" y="7.6" width="7" height="2.8" fill="#b898ff" stroke="#111" stroke-width="0.5"/><path d="M6.1,3.1 L11.8,3.1 L16.9,8.8 L11.8,14.5 L6.1,14.5 L3.1,11.6 L3.1,6.1Z" fill="none" stroke="#b898ff" stroke-width="1.05"/><path d="M6.9,4.9 L11.1,4.9 L14.7,8.8 L11.1,12.7 L6.9,12.7 L4.9,10.8 L4.9,6.9Z" fill="#b898ff"/></svg>
<div class="t" style="left:524px;top:217.5px;font-size:12.3px;color:#111;">&lt;Target&gt;</div>
<svg style="position:absolute;left:523px;top:235px;overflow:visible" width="283" height="18" viewBox="0 0 283 18" ><defs><linearGradient id="gyellow244" x1="0" y1="0" x2="0" y2="1"><stop offset="0.06" stop-color="#2e2a00"/><stop offset="0.12" stop-color="#2e2a00"/><stop offset="0.2" stop-color="#5a5100"/><stop offset="0.86" stop-color="#5a5100"/><stop offset="0.94" stop-color="#2e2a00" stop-opacity="0.9"/></linearGradient></defs><path d="M6,0.6 H271.5 L276.3,9 L271.5,17.4 H6 Q0.6,17.4 0.6,12 V6 Q0.6,0.6 6,0.6Z" fill="url(#gyellow244)" stroke="#ffe800" stroke-width="1.2"/><rect x="274" y="7.4" width="8.5" height="3.2" fill="#ffe400" stroke="#111" stroke-width="0.5"/><polygon points="273.60,11.45 270.03,14.91 264.97,14.91 261.40,11.45 261.40,6.55 264.97,3.09 270.03,3.09 273.60,6.55" fill="#5a5100" stroke="#ffe400" stroke-width="1.1"/><polygon points="272.12,10.84 269.41,13.43 265.59,13.43 262.88,10.84 262.88,7.16 265.59,4.57 269.41,4.57 272.12,7.16" fill="#ffe400"/></svg>
<div class="t" style="left:523px;top:238px;width:257px;text-align:right;font-size:12.5px;letter-spacing:0px;color:#f0f0f0">Output Value</div>
<div class="a" style="left:515px;top:323px;width:304px;height:136px;background:#050505;border-radius:6px 6px 2px 2px"></div>
<div class="a" style="left:517px;top:325px;width:300px;height:132px;background:#c2c2c2;border-radius:4px 4px 0 0;overflow:hidden"><div class="a" style="left:0;top:0;width:300px;height:25px;background:linear-gradient(to bottom,#42c4f8 0px,#30b0ee 3px,#1c92cf 8px,#177aab 12px,#155e80 16px,#1f5a78 18px,#486a7a 21px,#5c6c74 23px,#8a8a8a 25px)"></div></div>
<div class="a" style="left:785px;top:328px;width:28px;height:18px;background:#e4e4e4;border-radius:3px;box-shadow:0 1px 0 #9a8a80"></div>
<svg style="position:absolute;left:785px;top:328px;overflow:visible" width="28" height="18" viewBox="0 0 28 18" ><g transform="translate(14.2,9)"><circle r="3.82" fill="#3a3a3a"/><rect x="-1.11" y="-5.30" width="2.23" height="2.48" rx="0.67" fill="#3a3a3a" transform="rotate(0)"/><rect x="-1.11" y="-5.30" width="2.23" height="2.48" rx="0.67" fill="#3a3a3a" transform="rotate(45)"/><rect x="-1.11" y="-5.30" width="2.23" height="2.48" rx="0.67" fill="#3a3a3a" transform="rotate(90)"/><rect x="-1.11" y="-5.30" width="2.23" height="2.48" rx="0.67" fill="#3a3a3a" transform="rotate(135)"/><rect x="-1.11" y="-5.30" width="2.23" height="2.48" rx="0.67" fill="#3a3a3a" transform="rotate(180)"/><rect x="-1.11" y="-5.30" width="2.23" height="2.48" rx="0.67" fill="#3a3a3a" transform="rotate(225)"/><rect x="-1.11" y="-5.30" width="2.23" height="2.48" rx="0.67" fill="#3a3a3a" transform="rotate(270)"/><rect x="-1.11" y="-5.30" width="2.23" height="2.48" rx="0.67" fill="#3a3a3a" transform="rotate(315)"/><circle r="1.80" fill="#e4e4e4"/></g></svg>
<div class="t b" style="left:540px;top:332px;font-size:10px;color:#f4f4f4;text-shadow:0 0 1px rgba(0,0,0,.5)">Vector 3.Mul</div>
<svg style="position:absolute;left:523px;top:328.5px;overflow:visible" width="13" height="22" viewBox="0 0 13 22" ><rect x="0.2" y="0.2" width="11.8" height="16.4" rx="1.8" fill="#000"/><rect x="1.3" y="1.3" width="9.6" height="14.2" rx="1" fill="#6ae4ff"/><rect x="2.6" y="2.6" width="7" height="2.4" fill="#000"/><rect x="2.6" y="5.9" width="7" height="8.2" fill="#000"/><rect x="3.00" y="6.30" width="1.95" height="2.1" fill="#6ae4ff"/><rect x="5.30" y="6.30" width="1.95" height="2.1" fill="#6ae4ff"/><rect x="7.60" y="6.30" width="1.95" height="2.1" fill="#6ae4ff"/><rect x="3.00" y="8.90" width="1.95" height="2.1" fill="#6ae4ff"/><rect x="5.30" y="8.90" width="1.95" height="2.1" fill="#6ae4ff"/><rect x="7.60" y="8.90" width="1.95" height="2.1" fill="#6ae4ff"/><rect x="3.00" y="11.50" width="1.95" height="2.1" fill="#6ae4ff"/><rect x="5.30" y="11.50" width="1.95" height="2.1" fill="#6ae4ff"/><rect x="7.60" y="11.50" width="1.95" height="2.1" fill="#6ae4ff"/><path d="M0.5,17 H6.5 L3.5,20.5Z" fill="#555" opacity="0.85"/></svg>
<div class="a" style="left:517px;top:350px;width:300px;height:20px;background:#cbcbcb;border-bottom:1px solid #b4b4b4"></div>
<svg style="position:absolute;left:522px;top:357px;overflow:visible" width="10" height="9" viewBox="0 0 10 9" ><path d="M0,0.3 L9.2,0.3 L4.6,8Z" fill="#737373"/></svg>
<svg style="position:absolute;left:537.5px;top:352.4px;overflow:visible" width="14" height="16" viewBox="0 0 14 16" ><path d="M1.5,0.5 H9.3 L12.8,4 V13.6 Q12.8,14.6 11.8,14.6 H1.5 Q0.5,14.6 0.5,13.6 V1.5 Q0.5,0.5 1.5,0.5Z" fill="#fdfdfd" stroke="#b4b4b4" stroke-width="0.9"/><path d="M6.3,3.2 L5.7,12 M8.8,3.2 L8.2,12 M3.4,5.8 H10.6 M3.2,8.6 H10.4" stroke="#2f8a2f" stroke-width="1.25" fill="none"/></svg>
<div class="t b" style="left:577px;top:355px;font-size:12px;color:#111">Vector 3.Mul</div>
<svg style="position:absolute;left:761px;top:354px;overflow:visible" width="12" height="12" viewBox="0 0 12 12" ><circle cx="6" cy="6" r="5.1" fill="#555"/><text x="6" y="9.8" font-size="9.5" font-weight="bold" text-anchor="middle" fill="#cbcbcb" font-family="Liberation Sans">?</text></svg>
<svg style="position:absolute;left:781px;top:353.5px;overflow:visible" width="13" height="12" viewBox="0 0 13 12" ><path d="M1,4 H12 M1,9 H12" stroke="#555" stroke-width="1.6"/><path d="M8,1 V6.5 M4.5,6.5 V11.5" stroke="#555" stroke-width="2"/></svg>
<svg style="position:absolute;left:800px;top:352px;overflow:visible" width="14" height="14" viewBox="0 0 14 14" ><g transform="translate(7,8.6)"><circle r="3.74" fill="#555"/><rect x="-1.09" y="-5.20" width="2.18" height="2.46" rx="0.66" fill="#555" transform="rotate(0)"/><rect x="-1.09" y="-5.20" width="2.18" height="2.46" rx="0.66" fill="#555" transform="rotate(45)"/><rect x="-1.09" y="-5.20" width="2.18" height="2.46" rx="0.66" fill="#555" transform="rotate(90)"/><rect x="-1.09" y="-5.20" width="2.18" height="2.46" rx="0.66" fill="#555" transform="rotate(135)"/><rect x="-1.09" y="-5.20" width="2.18" height="2.46" rx="0.66" fill="#555" transform="rotate(180)"/><rect x="-1.09" y="-5.20" width="2.18" height="2.46" rx="0.66" fill="#555" transform="rotate(225)"/><rect x="-1.09" y="-5.20" width="2.18" height="2.46" rx="0.66" fill="#555" transform="rotate(270)"/><rect x="-1.09" y="-5.20" width="2.18" height="2.46" rx="0.66" fill="#555" transform="rotate(315)"/><circle r="1.77" fill="#cbcbcb"/></g></svg>
<div class="t" style="left:536px;top:377.5px;font-size:12.3px;color:#7a7a7a;">Script</div>
<div class="a" style="left:658px;top:376px;width:154px;height:16px;background:#cfcfcf;border-radius:3px;box-shadow:0 0 0 0.5px #b8b8b8"></div>
<svg style="position:absolute;left:661px;top:378px;overflow:visible" width="11" height="12" viewBox="0 0 11 12" ><path d="M1,0.5 H7.5 L10.5,3.5 V11 Q10.5,11.5 10,11.5 H1 Q0.5,11.5 0.5,11 V1 Q0.5,0.5 1,0.5Z" fill="#ececec" stroke="#c4c4c4" stroke-width="0.8"/><path d="M4.3,3 L3.7,9.5 M7,3 L6.4,9.5 M2.4,5 H8.4 M2.2,7.5 H8.2" stroke="#8cbf8c" stroke-width="0.9"/></svg>
<div class="t" style="left:673px;top:378px;width:120px;overflow:hidden;font-size:12.6px;letter-spacing:0.4px;color:#8a8a8a">Vector3MulCalculator</div>
<svg style="position:absolute;left:797px;top:378px;overflow:visible" width="12" height="12" viewBox="0 0 12 12" ><circle cx="6" cy="6" r="4.6" fill="none" stroke="#9a9a9a" stroke-width="1.1"/><circle cx="6" cy="6" r="1.8" fill="#9a9a9a"/></svg>
<svg style="position:absolute;left:497px;top:395px;overflow:visible" width="26" height="18" viewBox="0 0 26 18" ><path d="M4.5,0.5 H20 L25.6,9 L20,17.5 H4.5 Q0.5,17.5 0.5,13.5 V4.5 Q0.5,0.5 4.5,0.5Z" fill="#38330c" stroke="#8e7e14" stroke-width="1"/><rect x="-1" y="7.6" width="7" height="2.8" fill="#ffe400" stroke="#111" stroke-width="0.5"/><path d="M6.1,3.1 L11.8,3.1 L16.9,8.8 L11.8,14.5 L6.1,14.5 L3.1,11.6 L3.1,6.1Z" fill="none" stroke="#ffe400" stroke-width="1.05"/><path d="M6.9,4.9 L11.1,4.9 L14.7,8.8 L11.1,12.7 L6.9,12.7 L4.9,10.8 L4.9,6.9Z" fill="#ffe400"/></svg>
<div class="t" style="left:536px;top:397.5px;font-size:12.3px;color:#111;">Value 1</div>
<svg style="position:absolute;left:802.1px;top:399.9px;overflow:visible" width="9" height="6" viewBox="0 0 9 6" ><path d="M0,0 H7.6 L3.8,4.2Z" fill="#4a4a44"/></svg>
<svg style="position:absolute;left:497px;top:415px;overflow:visible" width="26" height="18" viewBox="0 0 26 18" ><path d="M4.5,0.5 H20 L25.6,9 L20,17.5 H4.5 Q0.5,17.5 0.5,13.5 V4.5 Q0.5,0.5 4.5,0.5Z" fill="#1d3a1e" stroke="#4a984c" stroke-width="1"/><path d="M6.1,3.1 L11.8,3.1 L16.9,8.8 L11.8,14.5 L6.1,14.5 L3.1,11.6 L3.1,6.1Z" fill="none" stroke="#86ff86" stroke-width="1.05"/></svg>
<div class="t" style="left:536px;top:417.5px;font-size:12.3px;color:#111;">Value 2</div>
<div class="a" style="left:658px;top:416px;width:140px;height:16px;background:#f0f0f0;border-radius:3px;box-shadow:0 0 0 0.5px #b8b8b8"></div>
<div class="t" style="left:662px;top:417px;font-size:12.5px;letter-spacing:0.2px;color:#111">-100</div>
<svg style="position:absolute;left:802.1px;top:419.9px;overflow:visible" width="9" height="6" viewBox="0 0 9 6" ><path d="M0,0 H7.6 L3.8,4.2Z" fill="#4a4a44"/></svg>
<svg style="position:absolute;left:535px;top:435px;overflow:visible" width="283" height="18" viewBox="0 0 283 18" ><defs><linearGradient id="gyellow444" x1="0" y1="0" x2="0" y2="1"><stop offset="0.06" stop-color="#2e2a00"/><stop offset="0.12" stop-color="#2e2a00"/><stop offset="0.2" stop-color="#5a5100"/><stop offset="0.86" stop-color="#5a5100"/><stop offset="0.94" stop-color="#2e2a00" stop-opacity="0.9"/></linearGradient></defs><path d="M6,0.6 H271.5 L276.3,9 L271.5,17.4 H6 Q0.6,17.4 0.6,12 V6 Q0.6,0.6 6,0.6Z" fill="url(#gyellow444)" stroke="#ffe800" stroke-width="1.2"/><rect x="274" y="7.4" width="8.5" height="3.2" fill="#ffe400" stroke="#111" stroke-width="0.5"/><polygon points="273.60,11.45 270.03,14.91 264.97,14.91 261.40,11.45 261.40,6.55 264.97,3.09 270.03,3.09 273.60,6.55" fill="#5a5100" stroke="#ffe400" stroke-width="1.1"/><polygon points="272.12,10.84 269.41,13.43 265.59,13.43 262.88,10.84 262.88,7.16 265.59,4.57 269.41,4.57 272.12,7.16" fill="#ffe400"/></svg>
<div class="t" style="left:535px;top:438px;width:257px;text-align:right;font-size:12.5px;letter-spacing:0px;color:#f0f0f0">Result</div>
<div class="a" style="left:899px;top:95px;width:304px;height:320px;background:#050505;border-radius:6px 6px 2px 2px"></div>
<div class="a" style="left:901px;top:97px;width:300px;height:316px;background:#c2c2c2;border-radius:4px 4px 0 0;overflow:hidden"><div class="a" style="left:0;top:0;width:300px;height:25px;background:linear-gradient(to bottom,#959595 0px,#888888 3px,#6c6c6c 8px,#4e4e4e 14px,#444444 18px,#545454 21px,#6a6a6a 23px,#8a8a8a 25px)"></div></div>
<div class="a" style="left:1169px;top:100px;width:28px;height:18px;background:#e4e4e4;border-radius:3px;box-shadow:0 1px 0 #9a8a80"></div>
<svg style="position:absolute;left:1169px;top:100px;overflow:visible" width="28" height="18" viewBox="0 0 28 18" ><g transform="translate(14.2,9)"><circle r="3.82" fill="#3a3a3a"/><rect x="-1.11" y="-5.30" width="2.23" height="2.48" rx="0.67" fill="#3a3a3a" transform="rotate(0)"/><rect x="-1.11" y="-5.30" width="2.23" height="2.48" rx="0.67" fill="#3a3a3a" transform="rotate(45)"/><rect x="-1.11" y="-5.30" width="2.23" height="2.48" rx="0.67" fill="#3a3a3a" transform="rotate(90)"/><rect x="-1.11" y="-5.30" width="2.23" height="2.48" rx="0.67" fill="#3a3a3a" transform="rotate(135)"/><rect x="-1.11" y="-5.30" width="2.23" height="2.48" rx="0.67" fill="#3a3a3a" transform="rotate(180)"/><rect x="-1.11" y="-5.30" width="2.23" height="2.48" rx="0.67" fill="#3a3a3a" transform="rotate(225)"/><rect x="-1.11" y="-5.30" width="2.23" height="2.48" rx="0.67" fill="#3a3a3a" transform="rotate(270)"/><rect x="-1.11" y="-5.30" width="2.23" height="2.48" rx="0.67" fill="#3a3a3a" transform="rotate(315)"/><circle r="1.80" fill="#e4e4e4"/></g></svg>
<div class="t b" style="left:924px;top:104px;font-size:10px;color:#f4f4f4;text-shadow:0 0 1px rgba(0,0,0,.5)">New State</div>
<svg style="position:absolute;left:907px;top:103px;overflow:visible" width="14" height="14" viewBox="0 0 14 14" ><polygon points="10.25,7.76 7.76,10.25 4.24,10.25 1.75,7.76 1.75,4.24 4.24,1.75 7.76,1.75 10.25,4.24" fill="none" stroke="#000" stroke-width="3.2"/><polygon points="10.25,7.76 7.76,10.25 4.24,10.25 1.75,7.76 1.75,4.24 4.24,1.75 7.76,1.75 10.25,4.24" fill="none" stroke="#c8c8c8" stroke-width="1.5"/><circle cx="6" cy="6" r="1.7" fill="#6a6a6a" stroke="#000" stroke-width="1.1"/></svg>
<div class="a" style="left:901px;top:122px;width:300px;height:20px;background:#cbcbcb;border-bottom:1px solid #b4b4b4"></div>
<svg style="position:absolute;left:906px;top:129px;overflow:visible" width="10" height="9" viewBox="0 0 10 9" ><path d="M0,0.3 L9.2,0.3 L4.6,8Z" fill="#737373"/></svg>
<svg style="position:absolute;left:921.5px;top:124.4px;overflow:visible" width="14" height="16" viewBox="0 0 14 16" ><path d="M1.5,0.5 H9.3 L12.8,4 V13.6 Q12.8,14.6 11.8,14.6 H1.5 Q0.5,14.6 0.5,13.6 V1.5 Q0.5,0.5 1.5,0.5Z" fill="#fdfdfd" stroke="#b4b4b4" stroke-width="0.9"/><path d="M6.3,3.2 L5.7,12 M8.8,3.2 L8.2,12 M3.4,5.8 H10.6 M3.2,8.6 H10.4" stroke="#2f8a2f" stroke-width="1.25" fill="none"/></svg>
<div class="a" style="left:940.5px;top:124.5px;width:11px;height:11.5px;background:#ececec;border:1px solid #b0b0b0;border-radius:2px"></div>
<svg style="position:absolute;left:941px;top:124.5px;overflow:visible" width="12" height="13" viewBox="0 0 12 13" ><path d="M2.4,7.2 L4.8,9.8 L10,4.2" stroke="#2a2a2a" stroke-width="1.5" fill="none"/></svg>
<div class="t b" style="left:961px;top:127px;font-size:12px;color:#111">Invoke Method</div>
<svg style="position:absolute;left:1145px;top:126px;overflow:visible" width="12" height="12" viewBox="0 0 12 12" ><circle cx="6" cy="6" r="5.1" fill="#555"/><text x="6" y="9.8" font-size="9.5" font-weight="bold" text-anchor="middle" fill="#cbcbcb" font-family="Liberation Sans">?</text></svg>
<svg style="position:absolute;left:1165px;top:125.5px;overflow:visible" width="13" height="12" viewBox="0 0 13 12" ><path d="M1,4 H12 M1,9 H12" stroke="#555" stroke-width="1.6"/><path d="M8,1 V6.5 M4.5,6.5 V11.5" stroke="#555" stroke-width="2"/></svg>
<svg style="position:absolute;left:1184px;top:124px;overflow:visible" width="14" height="14" viewBox="0 0 14 14" ><g transform="translate(7,8.6)"><circle r="3.74" fill="#555"/><rect x="-1.09" y="-5.20" width="2.18" height="2.46" rx="0.66" fill="#555" transform="rotate(0)"/><rect x="-1.09" y="-5.20" width="2.18" height="2.46" rx="0.66" fill="#555" transform="rotate(45)"/><rect x="-1.09" y="-5.20" width="2.18" height="2.46" rx="0.66" fill="#555" transform="rotate(90)"/><rect x="-1.09" y="-5.20" width="2.18" height="2.46" rx="0.66" fill="#555" transform="rotate(135)"/><rect x="-1.09" y="-5.20" width="2.18" height="2.46" rx="0.66" fill="#555" transform="rotate(180)"/><rect x="-1.09" y="-5.20" width="2.18" height="2.46" rx="0.66" fill="#555" transform="rotate(225)"/><rect x="-1.09" y="-5.20" width="2.18" height="2.46" rx="0.66" fill="#555" transform="rotate(270)"/><rect x="-1.09" y="-5.20" width="2.18" height="2.46" rx="0.66" fill="#555" transform="rotate(315)"/><circle r="1.77" fill="#cbcbcb"/></g></svg>
<div class="a" style="left:919px;top:155px;width:276px;height:19px;background:#bebebe;border:1px solid #a8a8a8;border-radius:3px 3px 0 0"></div>
<div class="t" style="left:927px;top:158.5px;font-size:12.3px;color:#111;">On State Begin</div>
<div class="a" style="left:1177px;top:164px;width:9px;height:2px;background:#333"></div>
<div class="a" style="left:919px;top:176px;width:277px;height:91px;background:#b3b3b3;border-bottom:1px solid #d0d0d0"></div>
<div class="a" style="left:925px;top:186px;width:10px;height:1px;background:#8a8a8a"></div>
<div class="a" style="left:925px;top:189px;width:10px;height:1px;background:#8a8a8a"></div>
<div class="a" style="left:941px;top:181px;width:113px;height:16px;background:#dedede;border-radius:3px;box-shadow:0 0 0 0.5px #b8b8b8"></div>
<div class="t" style="left:945px;top:182px;font-size:12.5px;letter-spacing:0.2px;color:#111">Rigidbody</div>
<svg style="position:absolute;left:1041.3px;top:187px;overflow:visible" width="8" height="5" viewBox="0 0 8 5" ><path d="M0,0 H7.2 L3.6,3.9Z" fill="#4a4a44"/></svg>
<div class="a" style="left:1061px;top:181px;width:128px;height:16px;background:#dedede;border-radius:3px;box-shadow:0 0 0 0.5px #b8b8b8"></div>
<div class="t" style="left:1065px;top:182px;width:109px;overflow:hidden;font-size:12.5px;letter-spacing:0.1px;color:#111">AddForce (Vector3, ForceMode)</div>
<div class="a" style="left:1173px;top:182px;width:16px;height:14px;background:#dedede"></div>
<svg style="position:absolute;left:1175px;top:187px;overflow:visible" width="9" height="5" viewBox="0 0 9 5" ><path d="M0,0 H9 L4.5,5Z" fill="#4a4a4a"/></svg>
<svg style="position:absolute;left:881px;top:200px;overflow:visible" width="26" height="18" viewBox="0 0 26 18" ><path d="M4.5,0.5 H20 L25.6,9 L20,17.5 H4.5 Q0.5,17.5 0.5,13.5 V4.5 Q0.5,0.5 4.5,0.5Z" fill="#0d2440" stroke="#2d62a6" stroke-width="1"/><path d="M6.1,3.1 L11.8,3.1 L16.9,8.8 L11.8,14.5 L6.1,14.5 L3.1,11.6 L3.1,6.1Z" fill="none" stroke="#1e8cff" stroke-width="1.05"/></svg>
<div class="t" style="left:941px;top:202.5px;font-size:12.3px;color:#111;">&lt;Target&gt;</div>
<div class="a" style="left:1063px;top:201px;width:112px;height:16px;background:#dedede;border-radius:3px;box-shadow:0 0 0 0.5px #b8b8b8"></div>
<div class="t" style="left:1067px;top:202px;font-size:12.5px;letter-spacing:0.2px;color:#111">Self</div>
<svg style="position:absolute;left:1162.3px;top:207px;overflow:visible" width="8" height="5" viewBox="0 0 8 5" ><path d="M0,0 H7.2 L3.6,3.9Z" fill="#4a4a44"/></svg>
<svg style="position:absolute;left:1179.1px;top:204.9px;overflow:visible" width="9" height="6" viewBox="0 0 9 6" ><path d="M0,0 H7.6 L3.8,4.2Z" fill="#4a4a44"/></svg>
<svg style="position:absolute;left:881px;top:220px;overflow:visible" width="26" height="18" viewBox="0 0 26 18" ><path d="M4.5,0.5 H20 L25.6,9 L20,17.5 H4.5 Q0.5,17.5 0.5,13.5 V4.5 Q0.5,0.5 4.5,0.5Z" fill="#38330c" stroke="#8e7e14" stroke-width="1"/><rect x="-1" y="7.6" width="7" height="2.8" fill="#ffe400" stroke="#111" stroke-width="0.5"/><path d="M6.1,3.1 L11.8,3.1 L16.9,8.8 L11.8,14.5 L6.1,14.5 L3.1,11.6 L3.1,6.1Z" fill="none" stroke="#ffe400" stroke-width="1.05"/><path d="M6.9,4.9 L11.1,4.9 L14.7,8.8 L11.1,12.7 L6.9,12.7 L4.9,10.8 L4.9,6.9Z" fill="#ffe400"/></svg>
<div class="t" style="left:941px;top:222.5px;font-size:12.3px;color:#111;">Force</div>
<svg style="position:absolute;left:1179.1px;top:224.9px;overflow:visible" width="9" height="6" viewBox="0 0 9 6" ><path d="M0,0 H7.6 L3.8,4.2Z" fill="#4a4a44"/></svg>
<svg style="position:absolute;left:881px;top:240px;overflow:visible" width="26" height="18" viewBox="0 0 26 18" ><path d="M4.5,0.5 H20 L25.6,9 L20,17.5 H4.5 Q0.5,17.5 0.5,13.5 V4.5 Q0.5,0.5 4.5,0.5Z" fill="#2c2646" stroke="#7a68b6" stroke-width="1"/><path d="M6.1,3.1 L11.8,3.1 L16.9,8.8 L11.8,14.5 L6.1,14.5 L3.1,11.6 L3.1,6.1Z" fill="none" stroke="#b898ff" stroke-width="1.05"/></svg>
<div class="t" style="left:941px;top:242.5px;font-size:12.3px;color:#111;">Mode</div>
<div class="a" style="left:1063px;top:241px;width:112px;height:16px;background:#dedede;border-radius:3px;box-shadow:0 0 0 0.5px #b8b8b8"></div>
<div class="t" style="left:1067px;top:242px;font-size:12.5px;letter-spacing:0.2px;color:#111">Impulse</div>
<svg style="position:absolute;left:1162.3px;top:247px;overflow:visible" width="8" height="5" viewBox="0 0 8 5" ><path d="M0,0 H7.2 L3.6,3.9Z" fill="#4a4a44"/></svg>
<svg style="position:absolute;left:1179.1px;top:244.9px;overflow:visible" width="9" height="6" viewBox="0 0 9 6" ><path d="M0,0 H7.6 L3.8,4.2Z" fill="#4a4a44"/></svg>
<div class="a" style="left:1130px;top:268px;width:56px;height:19px;border:1px solid #a0a0a0;border-top:none;border-radius:0 0 3px 3px"></div>
<svg style="position:absolute;left:1140px;top:272px;overflow:visible" width="12" height="12" viewBox="0 0 12 12" ><path d="M1,6 H11 M6,1 V11" stroke="#333" stroke-width="1.6"/></svg>
<svg style="position:absolute;left:1165px;top:272px;overflow:visible" width="12" height="12" viewBox="0 0 12 12" ><path d="M1,6 H11" stroke="#333" stroke-width="1.6"/></svg>
<div class="a" style="left:959px;top:301px;width:199px;height:17px;background:#e0e0e0;border-radius:3px;box-shadow:0 0 0 0.5px #aaa"></div>
<div class="t" style="left:959px;top:303px;width:199px;text-align:center;font-size:12.5px;letter-spacing:0.2px;color:#111">Add New Event Type</div>
<div class="a" style="left:901px;top:324px;width:300px;height:20px;background:#cbcbcb;border-bottom:1px solid #b4b4b4"></div>
<div class="a" style="left:901px;top:322px;width:300px;height:1px;background:#999"></div>
<svg style="position:absolute;left:906px;top:331px;overflow:visible" width="10" height="9" viewBox="0 0 10 9" ><path d="M0,0.3 L9.2,0.3 L4.6,8Z" fill="#737373"/></svg>
<svg style="position:absolute;left:921.5px;top:326.4px;overflow:visible" width="14" height="16" viewBox="0 0 14 16" ><path d="M1.5,0.5 H9.3 L12.8,4 V13.6 Q12.8,14.6 11.8,14.6 H1.5 Q0.5,14.6 0.5,13.6 V1.5 Q0.5,0.5 1.5,0.5Z" fill="#fdfdfd" stroke="#b4b4b4" stroke-width="0.9"/><path d="M6.3,3.2 L5.7,12 M8.8,3.2 L8.2,12 M3.4,5.8 H10.6 M3.2,8.6 H10.4" stroke="#2f8a2f" stroke-width="1.25" fill="none"/></svg>
<div class="a" style="left:940.5px;top:326.5px;width:11px;height:11.5px;background:#ececec;border:1px solid #b0b0b0;border-radius:2px"></div>
<svg style="position:absolute;left:941px;top:326.5px;overflow:visible" width="12" height="13" viewBox="0 0 12 13" ><path d="M2.4,7.2 L4.8,9.8 L10,4.2" stroke="#2a2a2a" stroke-width="1.5" fill="none"/></svg>
<div class="t b" style="left:961px;top:329px;font-size:12px;color:#111">Time Transition</div>
<svg style="position:absolute;left:1145px;top:328px;overflow:visible" width="12" height="12" viewBox="0 0 12 12" ><circle cx="6" cy="6" r="5.1" fill="#555"/><text x="6" y="9.8" font-size="9.5" font-weight="bold" text-anchor="middle" fill="#cbcbcb" font-family="Liberation Sans">?</text></svg>
<svg style="position:absolute;left:1165px;top:327.5px;overflow:visible" width="13" height="12" viewBox="0 0 13 12" ><path d="M1,4 H12 M1,9 H12" stroke="#555" stroke-width="1.6"/><path d="M8,1 V6.5 M4.5,6.5 V11.5" stroke="#555" stroke-width="2"/></svg>
<svg style="position:absolute;left:1184px;top:326px;overflow:visible" width="14" height="14" viewBox="0 0 14 14" ><g transform="translate(7,8.6)"><circle r="3.74" fill="#555"/><rect x="-1.09" y="-5.20" width="2.18" height="2.46" rx="0.66" fill="#555" transform="rotate(0)"/><rect x="-1.09" y="-5.20" width="2.18" height="2.46" rx="0.66" fill="#555" transform="rotate(45)"/><rect x="-1.09" y="-5.20" width="2.18" height="2.46" rx="0.66" fill="#555" transform="rotate(90)"/><rect x="-1.09" y="-5.20" width="2.18" height="2.46" rx="0.66" fill="#555" transform="rotate(135)"/><rect x="-1.09" y="-5.20" width="2.18" height="2.46" rx="0.66" fill="#555" transform="rotate(180)"/><rect x="-1.09" y="-5.20" width="2.18" height="2.46" rx="0.66" fill="#555" transform="rotate(225)"/><rect x="-1.09" y="-5.20" width="2.18" height="2.46" rx="0.66" fill="#555" transform="rotate(270)"/><rect x="-1.09" y="-5.20" width="2.18" height="2.46" rx="0.66" fill="#555" transform="rotate(315)"/><circle r="1.77" fill="#cbcbcb"/></g></svg>
<svg style="position:absolute;left:881px;top:349px;overflow:visible" width="26" height="18" viewBox="0 0 26 18" ><path d="M4.5,0.5 H20 L25.6,9 L20,17.5 H4.5 Q0.5,17.5 0.5,13.5 V4.5 Q0.5,0.5 4.5,0.5Z" fill="#2c2646" stroke="#7a68b6" stroke-width="1"/><path d="M6.1,3.1 L11.8,3.1 L16.9,8.8 L11.8,14.5 L6.1,14.5 L3.1,11.6 L3.1,6.1Z" fill="none" stroke="#b898ff" stroke-width="1.05"/></svg>
<div class="t" style="left:920px;top:351.5px;font-size:12.3px;color:#111;">Time Type</div>
<div class="a" style="left:1042px;top:350px;width:140px;height:16px;background:#dfdfdf;border-radius:3px;box-shadow:0 0 0 0.5px #b8b8b8"></div>
<div class="t" style="left:1046px;top:351px;font-size:12.5px;letter-spacing:0.2px;color:#111">Normal</div>
<svg style="position:absolute;left:1169.3px;top:356px;overflow:visible" width="8" height="5" viewBox="0 0 8 5" ><path d="M0,0 H7.2 L3.6,3.9Z" fill="#4a4a44"/></svg>
<svg style="position:absolute;left:1186.1px;top:353.9px;overflow:visible" width="9" height="6" viewBox="0 0 9 6" ><path d="M0,0 H7.6 L3.8,4.2Z" fill="#4a4a44"/></svg>
<svg style="position:absolute;left:881px;top:369px;overflow:visible" width="26" height="18" viewBox="0 0 26 18" ><path d="M4.5,0.5 H20 L25.6,9 L20,17.5 H4.5 Q0.5,17.5 0.5,13.5 V4.5 Q0.5,0.5 4.5,0.5Z" fill="#1d3a1e" stroke="#4a984c" stroke-width="1"/><path d="M6.1,3.1 L11.8,3.1 L16.9,8.8 L11.8,14.5 L6.1,14.5 L3.1,11.6 L3.1,6.1Z" fill="none" stroke="#86ff86" stroke-width="1.05"/></svg>
<div class="t" style="left:920px;top:371.5px;font-size:12.3px;color:#111;">Seconds</div>
<div class="a" style="left:1042px;top:370px;width:140px;height:16px;background:#f0f0f0;border-radius:3px;box-shadow:0 0 0 0.5px #b8b8b8"></div>
<div class="t" style="left:1046px;top:371px;font-size:12.5px;letter-spacing:0.2px;color:#111">1</div>
<svg style="position:absolute;left:1186.1px;top:373.9px;overflow:visible" width="9" height="6" viewBox="0 0 9 6" ><path d="M0,0 H7.6 L3.8,4.2Z" fill="#4a4a44"/></svg>
<div class="a" style="left:905px;top:392px;width:289px;height:16px;border-radius:7px;background:linear-gradient(#6a6a6a,#575757);border:1px solid #f4f4f4;box-shadow:0 0 0 1px #0a0a0a, inset 0 0 0 1px #1a1a1a"></div>
<div class="t" style="left:1030px;top:395px;font-size:12.5px;color:#f4f4f4">Next State</div>
<svg style="position:absolute;left:1012px;top:393px;overflow:visible" width="16" height="16" viewBox="0 0 16 16" ><path d="M1.5,1 H11 M1.5,14.5 H11" stroke="#80dc80" stroke-width="1.3"/><path d="M2.5,1.5 Q2.5,5 6.2,7.7 Q10,5 10,1.5Z" fill="#4f8a4f" stroke="#80dc80" stroke-width="1.3"/><path d="M2.5,14 Q2.5,10.5 6.2,7.7 Q10,10.5 10,14Z" fill="#4f8a4f" stroke="#80dc80" stroke-width="1.3"/><path d="M8.5,11.6 H11.5 V9.6 L14.6,12.3 L11.5,15 V13 H8.5Z" fill="#f0b400"/></svg>
<svg style="position:absolute;left:1159px;top:394px;overflow:visible" width="16" height="14" viewBox="0 0 16 14" ><g transform="translate(6,5.8)"><circle r="3.60" fill="#e8e8e8"/><rect x="-1.05" y="-5.00" width="2.10" height="2.40" rx="0.63" fill="#e8e8e8" transform="rotate(0)"/><rect x="-1.05" y="-5.00" width="2.10" height="2.40" rx="0.63" fill="#e8e8e8" transform="rotate(45)"/><rect x="-1.05" y="-5.00" width="2.10" height="2.40" rx="0.63" fill="#e8e8e8" transform="rotate(90)"/><rect x="-1.05" y="-5.00" width="2.10" height="2.40" rx="0.63" fill="#e8e8e8" transform="rotate(135)"/><rect x="-1.05" y="-5.00" width="2.10" height="2.40" rx="0.63" fill="#e8e8e8" transform="rotate(180)"/><rect x="-1.05" y="-5.00" width="2.10" height="2.40" rx="0.63" fill="#e8e8e8" transform="rotate(225)"/><rect x="-1.05" y="-5.00" width="2.10" height="2.40" rx="0.63" fill="#e8e8e8" transform="rotate(270)"/><rect x="-1.05" y="-5.00" width="2.10" height="2.40" rx="0.63" fill="#e8e8e8" transform="rotate(315)"/><circle r="1.70" fill="#5c5c5c"/></g><path d="M10.3,9 H14 L12.15,12.3Z" fill="#e8e8e8"/></svg>
<svg style="position:absolute;left:1183px;top:395px;overflow:visible" width="20" height="13" viewBox="0 0 20 13" ><rect x="10" y="5" width="8.5" height="2.6" fill="#f4f4f4"/><path d="M0.5,0.5 H7 L11.2,6.2 L7,11.9 H0.5 L2.6,6.2Z" fill="#f4f4f4" stroke="#111" stroke-width="0.9"/><path d="M2.6,2.2 H6.2 L9,6.2 L6.2,10.2 H2.6 L3.9,6.2Z" fill="#fff" stroke="#888" stroke-width="0.6"/></svg>
<svg class="a" style="left:0;top:0" width="1237" height="517"><path d="M3.7,0 L-3.0,-3.2 L-2.0,0 L-3.0,3.2Z" transform="translate(420.81,388.65) rotate(-31.7) scale(1.1)" fill="#000" opacity="0.9"/><path d="M3.7,0 L-3.0,-3.2 L-2.0,0 L-3.0,3.2Z" transform="translate(428.01,381.80) rotate(-53.2) scale(1.1)" fill="#000" opacity="0.9"/><path d="M3.7,0 L-3.0,-3.2 L-2.0,0 L-3.0,3.2Z" transform="translate(433.09,373.20) rotate(-64.4) scale(1.1)" fill="#000" opacity="0.9"/><path d="M3.7,0 L-3.0,-3.2 L-2.0,0 L-3.0,3.2Z" transform="translate(436.86,363.95) rotate(-70.5) scale(1.1)" fill="#000" opacity="0.9"/><path d="M3.7,0 L-3.0,-3.2 L-2.0,0 L-3.0,3.2Z" transform="translate(439.86,354.41) rotate(-74.4) scale(1.1)" fill="#000" opacity="0.9"/><path d="M3.7,0 L-3.0,-3.2 L-2.0,0 L-3.0,3.2Z" transform="translate(442.35,344.73) rotate(-76.6) scale(1.1)" fill="#000" opacity="0.9"/><path d="M3.7,0 L-3.0,-3.2 L-2.0,0 L-3.0,3.2Z" transform="translate(444.52,334.97) rotate(-78.1) scale(1.1)" fill="#000" opacity="0.9"/><path d="M3.7,0 L-3.0,-3.2 L-2.0,0 L-3.0,3.2Z" transform="translate(446.49,325.16) rotate(-79.1) scale(1.1)" fill="#000" opacity="0.9"/><path d="M3.7,0 L-3.0,-3.2 L-2.0,0 L-3.0,3.2Z" transform="translate(448.34,315.33) rotate(-79.5) scale(1.1)" fill="#000" opacity="0.9"/><path d="M3.7,0 L-3.0,-3.2 L-2.0,0 L-3.0,3.2Z" transform="translate(450.14,305.50) rotate(-79.6) scale(1.1)" fill="#000" opacity="0.9"/><path d="M3.7,0 L-3.0,-3.2 L-2.0,0 L-3.0,3.2Z" transform="translate(451.98,295.67) rotate(-79.2) scale(1.1)" fill="#000" opacity="0.9"/><path d="M3.7,0 L-3.0,-3.2 L-2.0,0 L-3.0,3.2Z" transform="translate(453.92,285.86) rotate(-78.3) scale(1.1)" fill="#000" opacity="0.9"/><path d="M3.7,0 L-3.0,-3.2 L-2.0,0 L-3.0,3.2Z" transform="translate(456.05,276.09) rotate(-76.9) scale(1.1)" fill="#000" opacity="0.9"/><path d="M3.7,0 L-3.0,-3.2 L-2.0,0 L-3.0,3.2Z" transform="translate(458.47,266.39) rotate(-74.8) scale(1.1)" fill="#000" opacity="0.9"/><path d="M3.7,0 L-3.0,-3.2 L-2.0,0 L-3.0,3.2Z" transform="translate(461.36,256.81) rotate(-71.4) scale(1.1)" fill="#000" opacity="0.9"/><path d="M3.7,0 L-3.0,-3.2 L-2.0,0 L-3.0,3.2Z" transform="translate(464.97,247.49) rotate(-65.7) scale(1.1)" fill="#000" opacity="0.9"/><path d="M3.7,0 L-3.0,-3.2 L-2.0,0 L-3.0,3.2Z" transform="translate(469.77,238.73) rotate(-56.0) scale(1.1)" fill="#000" opacity="0.9"/><path d="M3.7,0 L-3.0,-3.2 L-2.0,0 L-3.0,3.2Z" transform="translate(476.53,231.43) rotate(-36.3) scale(1.1)" fill="#000" opacity="0.9"/><path d="M3.7,0 L-3.0,-3.2 L-2.0,0 L-3.0,3.2Z" transform="translate(418.41,385.85) rotate(-31.7)" fill="#a884ff"/><path d="M3.7,0 L-3.0,-3.2 L-2.0,0 L-3.0,3.2Z" transform="translate(425.61,379.00) rotate(-53.2)" fill="#a884ff"/><path d="M3.7,0 L-3.0,-3.2 L-2.0,0 L-3.0,3.2Z" transform="translate(430.69,370.40) rotate(-64.4)" fill="#a884ff"/><path d="M3.7,0 L-3.0,-3.2 L-2.0,0 L-3.0,3.2Z" transform="translate(434.46,361.15) rotate(-70.5)" fill="#a884ff"/><path d="M3.7,0 L-3.0,-3.2 L-2.0,0 L-3.0,3.2Z" transform="translate(437.46,351.61) rotate(-74.4)" fill="#a884ff"/><path d="M3.7,0 L-3.0,-3.2 L-2.0,0 L-3.0,3.2Z" transform="translate(439.95,341.93) rotate(-76.6)" fill="#a884ff"/><path d="M3.7,0 L-3.0,-3.2 L-2.0,0 L-3.0,3.2Z" transform="translate(442.12,332.17) rotate(-78.1)" fill="#a884ff"/><path d="M3.7,0 L-3.0,-3.2 L-2.0,0 L-3.0,3.2Z" transform="translate(444.09,322.36) rotate(-79.1)" fill="#a884ff"/><path d="M3.7,0 L-3.0,-3.2 L-2.0,0 L-3.0,3.2Z" transform="translate(445.94,312.53) rotate(-79.5)" fill="#a884ff"/><path d="M3.7,0 L-3.0,-3.2 L-2.0,0 L-3.0,3.2Z" transform="translate(447.74,302.70) rotate(-79.6)" fill="#a884ff"/><path d="M3.7,0 L-3.0,-3.2 L-2.0,0 L-3.0,3.2Z" transform="translate(449.58,292.87) rotate(-79.2)" fill="#a884ff"/><path d="M3.7,0 L-3.0,-3.2 L-2.0,0 L-3.0,3.2Z" transform="translate(451.52,283.06) rotate(-78.3)" fill="#a884ff"/><path d="M3.7,0 L-3.0,-3.2 L-2.0,0 L-3.0,3.2Z" transform="translate(453.65,273.29) rotate(-76.9)" fill="#a884ff"/><path d="M3.7,0 L-3.0,-3.2 L-2.0,0 L-3.0,3.2Z" transform="translate(456.07,263.59) rotate(-74.8)" fill="#a884ff"/><path d="M3.7,0 L-3.0,-3.2 L-2.0,0 L-3.0,3.2Z" transform="translate(458.96,254.01) rotate(-71.4)" fill="#a884ff"/><path d="M3.7,0 L-3.0,-3.2 L-2.0,0 L-3.0,3.2Z" transform="translate(462.57,244.69) rotate(-65.7)" fill="#a884ff"/><path d="M3.7,0 L-3.0,-3.2 L-2.0,0 L-3.0,3.2Z" transform="translate(467.37,235.93) rotate(-56.0)" fill="#a884ff"/><path d="M3.7,0 L-3.0,-3.2 L-2.0,0 L-3.0,3.2Z" transform="translate(474.13,228.63) rotate(-36.3)" fill="#a884ff"/><path d="M3.7,0 L-3.0,-3.2 L-2.0,0 L-3.0,3.2Z" transform="translate(816.38,247.85) rotate(7.6) scale(1.1)" fill="#000" opacity="0.9"/><path d="M3.7,0 L-3.0,-3.2 L-2.0,0 L-3.0,3.2Z" transform="translate(825.96,250.55) rotate(26.8) scale(1.1)" fill="#000" opacity="0.9"/><path d="M3.7,0 L-3.0,-3.2 L-2.0,0 L-3.0,3.2Z" transform="translate(831.94,258.04) rotate(82.9) scale(1.1)" fill="#000" opacity="0.9"/><path d="M3.7,0 L-3.0,-3.2 L-2.0,0 L-3.0,3.2Z" transform="translate(829.19,267.44) rotate(122.5) scale(1.1)" fill="#000" opacity="0.9"/><path d="M3.7,0 L-3.0,-3.2 L-2.0,0 L-3.0,3.2Z" transform="translate(822.64,274.96) rotate(137.6) scale(1.1)" fill="#000" opacity="0.9"/><path d="M3.7,0 L-3.0,-3.2 L-2.0,0 L-3.0,3.2Z" transform="translate(814.71,281.04) rotate(146.8) scale(1.1)" fill="#000" opacity="0.9"/><path d="M3.7,0 L-3.0,-3.2 L-2.0,0 L-3.0,3.2Z" transform="translate(806.04,286.01) rotate(153.5) scale(1.1)" fill="#000" opacity="0.9"/><path d="M3.7,0 L-3.0,-3.2 L-2.0,0 L-3.0,3.2Z" transform="translate(796.86,289.98) rotate(159.6) scale(1.1)" fill="#000" opacity="0.9"/><path d="M3.7,0 L-3.0,-3.2 L-2.0,0 L-3.0,3.2Z" transform="translate(787.33,292.98) rotate(165.4) scale(1.1)" fill="#000" opacity="0.9"/><path d="M3.7,0 L-3.0,-3.2 L-2.0,0 L-3.0,3.2Z" transform="translate(777.54,295.01) rotate(171.3) scale(1.1)" fill="#000" opacity="0.9"/><path d="M3.7,0 L-3.0,-3.2 L-2.0,0 L-3.0,3.2Z" transform="translate(767.60,296.00) rotate(177.3) scale(1.1)" fill="#000" opacity="0.9"/><path d="M3.7,0 L-3.0,-3.2 L-2.0,0 L-3.0,3.2Z" transform="translate(755.50,296.10) rotate(-180.0) scale(1.1)" fill="#000" opacity="0.9"/><path d="M3.7,0 L-3.0,-3.2 L-2.0,0 L-3.0,3.2Z" transform="translate(745.50,296.09) rotate(-180.0) scale(1.1)" fill="#000" opacity="0.9"/><path d="M3.7,0 L-3.0,-3.2 L-2.0,0 L-3.0,3.2Z" transform="translate(735.50,296.09) rotate(-180.0) scale(1.1)" fill="#000" opacity="0.9"/><path d="M3.7,0 L-3.0,-3.2 L-2.0,0 L-3.0,3.2Z" transform="translate(725.50,296.08) rotate(-180.0) scale(1.1)" fill="#000" opacity="0.9"/><path d="M3.7,0 L-3.0,-3.2 L-2.0,0 L-3.0,3.2Z" transform="translate(715.50,296.08) rotate(-180.0) scale(1.1)" fill="#000" opacity="0.9"/><path d="M3.7,0 L-3.0,-3.2 L-2.0,0 L-3.0,3.2Z" transform="translate(705.50,296.07) rotate(-180.0) scale(1.1)" fill="#000" opacity="0.9"/><path d="M3.7,0 L-3.0,-3.2 L-2.0,0 L-3.0,3.2Z" transform="translate(695.50,296.07) rotate(-180.0) scale(1.1)" fill="#000" opacity="0.9"/><path d="M3.7,0 L-3.0,-3.2 L-2.0,0 L-3.0,3.2Z" transform="translate(685.50,296.07) rotate(-180.0) scale(1.1)" fill="#000" opacity="0.9"/><path d="M3.7,0 L-3.0,-3.2 L-2.0,0 L-3.0,3.2Z" transform="translate(675.50,296.06) rotate(-180.0) scale(1.1)" fill="#000" opacity="0.9"/><path d="M3.7,0 L-3.0,-3.2 L-2.0,0 L-3.0,3.2Z" transform="translate(665.50,296.06) rotate(-180.0) scale(1.1)" fill="#000" opacity="0.9"/><path d="M3.7,0 L-3.0,-3.2 L-2.0,0 L-3.0,3.2Z" transform="translate(655.50,296.05) rotate(-180.0) scale(1.1)" fill="#000" opacity="0.9"/><path d="M3.7,0 L-3.0,-3.2 L-2.0,0 L-3.0,3.2Z" transform="translate(645.50,296.05) rotate(-180.0) scale(1.1)" fill="#000" opacity="0.9"/><path d="M3.7,0 L-3.0,-3.2 L-2.0,0 L-3.0,3.2Z" transform="translate(635.50,296.04) rotate(-180.0) scale(1.1)" fill="#000" opacity="0.9"/><path d="M3.7,0 L-3.0,-3.2 L-2.0,0 L-3.0,3.2Z" transform="translate(625.50,296.04) rotate(-180.0) scale(1.1)" fill="#000" opacity="0.9"/><path d="M3.7,0 L-3.0,-3.2 L-2.0,0 L-3.0,3.2Z" transform="translate(615.50,296.04) rotate(-180.0) scale(1.1)" fill="#000" opacity="0.9"/><path d="M3.7,0 L-3.0,-3.2 L-2.0,0 L-3.0,3.2Z" transform="translate(605.50,296.03) rotate(-180.0) scale(1.1)" fill="#000" opacity="0.9"/><path d="M3.7,0 L-3.0,-3.2 L-2.0,0 L-3.0,3.2Z" transform="translate(595.50,296.03) rotate(-180.0) scale(1.1)" fill="#000" opacity="0.9"/><path d="M3.7,0 L-3.0,-3.2 L-2.0,0 L-3.0,3.2Z" transform="translate(585.50,296.02) rotate(-180.0) scale(1.1)" fill="#000" opacity="0.9"/><path d="M3.7,0 L-3.0,-3.2 L-2.0,0 L-3.0,3.2Z" transform="translate(575.50,296.02) rotate(-180.0) scale(1.1)" fill="#000" opacity="0.9"/><path d="M3.7,0 L-3.0,-3.2 L-2.0,0 L-3.0,3.2Z" transform="translate(565.50,296.01) rotate(-180.0) scale(1.1)" fill="#000" opacity="0.9"/><path d="M3.7,0 L-3.0,-3.2 L-2.0,0 L-3.0,3.2Z" transform="translate(555.50,296.01) rotate(-180.0) scale(1.1)" fill="#000" opacity="0.9"/><path d="M3.7,0 L-3.0,-3.2 L-2.0,0 L-3.0,3.2Z" transform="translate(545.50,296.00) rotate(-180.0) scale(1.1)" fill="#000" opacity="0.9"/><path d="M3.7,0 L-3.0,-3.2 L-2.0,0 L-3.0,3.2Z" transform="translate(535.50,296.00) rotate(-180.0) scale(1.1)" fill="#000" opacity="0.9"/><path d="M3.7,0 L-3.0,-3.2 L-2.0,0 L-3.0,3.2Z" transform="translate(527.23,296.61) rotate(171.1) scale(1.1)" fill="#000" opacity="0.9"/><path d="M3.7,0 L-3.0,-3.2 L-2.0,0 L-3.0,3.2Z" transform="translate(517.56,299.08) rotate(160.2) scale(1.1)" fill="#000" opacity="0.9"/><path d="M3.7,0 L-3.0,-3.2 L-2.0,0 L-3.0,3.2Z" transform="translate(508.53,303.34) rotate(149.6) scale(1.1)" fill="#000" opacity="0.9"/><path d="M3.7,0 L-3.0,-3.2 L-2.0,0 L-3.0,3.2Z" transform="translate(500.37,309.11) rotate(140.1) scale(1.1)" fill="#000" opacity="0.9"/><path d="M3.7,0 L-3.0,-3.2 L-2.0,0 L-3.0,3.2Z" transform="translate(493.21,316.08) rotate(131.6) scale(1.1)" fill="#000" opacity="0.9"/><path d="M3.7,0 L-3.0,-3.2 L-2.0,0 L-3.0,3.2Z" transform="translate(487.09,323.98) rotate(124.2) scale(1.1)" fill="#000" opacity="0.9"/><path d="M3.7,0 L-3.0,-3.2 L-2.0,0 L-3.0,3.2Z" transform="translate(482.02,332.59) rotate(117.0) scale(1.1)" fill="#000" opacity="0.9"/><path d="M3.7,0 L-3.0,-3.2 L-2.0,0 L-3.0,3.2Z" transform="translate(478.02,341.75) rotate(110.1) scale(1.1)" fill="#000" opacity="0.9"/><path d="M3.7,0 L-3.0,-3.2 L-2.0,0 L-3.0,3.2Z" transform="translate(475.13,351.31) rotate(103.2) scale(1.1)" fill="#000" opacity="0.9"/><path d="M3.7,0 L-3.0,-3.2 L-2.0,0 L-3.0,3.2Z" transform="translate(473.46,361.17) rotate(95.9) scale(1.1)" fill="#000" opacity="0.9"/><path d="M3.7,0 L-3.0,-3.2 L-2.0,0 L-3.0,3.2Z" transform="translate(473.21,371.15) rotate(87.0) scale(1.1)" fill="#000" opacity="0.9"/><path d="M3.7,0 L-3.0,-3.2 L-2.0,0 L-3.0,3.2Z" transform="translate(474.66,381.03) rotate(76.0) scale(1.1)" fill="#000" opacity="0.9"/><path d="M3.7,0 L-3.0,-3.2 L-2.0,0 L-3.0,3.2Z" transform="translate(478.23,390.35) rotate(61.5) scale(1.1)" fill="#000" opacity="0.9"/><path d="M3.7,0 L-3.0,-3.2 L-2.0,0 L-3.0,3.2Z" transform="translate(484.23,398.29) rotate(43.5) scale(1.1)" fill="#000" opacity="0.9"/><path d="M3.7,0 L-3.0,-3.2 L-2.0,0 L-3.0,3.2Z" transform="translate(492.46,403.89) rotate(24.6) scale(1.1)" fill="#000" opacity="0.9"/><path d="M3.7,0 L-3.0,-3.2 L-2.0,0 L-3.0,3.2Z" transform="translate(813.98,245.05) rotate(7.6)" fill="#ffe200"/><path d="M3.7,0 L-3.0,-3.2 L-2.0,0 L-3.0,3.2Z" transform="translate(823.56,247.75) rotate(26.8)" fill="#ffe200"/><path d="M3.7,0 L-3.0,-3.2 L-2.0,0 L-3.0,3.2Z" transform="translate(829.54,255.24) rotate(82.9)" fill="#ffe200"/><path d="M3.7,0 L-3.0,-3.2 L-2.0,0 L-3.0,3.2Z" transform="translate(826.79,264.64) rotate(122.5)" fill="#ffe200"/><path d="M3.7,0 L-3.0,-3.2 L-2.0,0 L-3.0,3.2Z" transform="translate(820.24,272.16) rotate(137.6)" fill="#ffe200"/><path d="M3.7,0 L-3.0,-3.2 L-2.0,0 L-3.0,3.2Z" transform="translate(812.31,278.24) rotate(146.8)" fill="#ffe200"/><path d="M3.7,0 L-3.0,-3.2 L-2.0,0 L-3.0,3.2Z" transform="translate(803.64,283.21) rotate(153.5)" fill="#ffe200"/><path d="M3.7,0 L-3.0,-3.2 L-2.0,0 L-3.0,3.2Z" transform="translate(794.46,287.18) rotate(159.6)" fill="#ffe200"/><path d="M3.7,0 L-3.0,-3.2 L-2.0,0 L-3.0,3.2Z" transform="translate(784.93,290.18) rotate(165.4)" fill="#ffe200"/><path d="M3.7,0 L-3.0,-3.2 L-2.0,0 L-3.0,3.2Z" transform="translate(775.14,292.21) rotate(171.3)" fill="#ffe200"/><path d="M3.7,0 L-3.0,-3.2 L-2.0,0 L-3.0,3.2Z" transform="translate(765.20,293.20) rotate(177.3)" fill="#ffe200"/><path d="M3.7,0 L-3.0,-3.2 L-2.0,0 L-3.0,3.2Z" transform="translate(753.10,293.30) rotate(-180.0)" fill="#ffe200"/><path d="M3.7,0 L-3.0,-3.2 L-2.0,0 L-3.0,3.2Z" transform="translate(743.10,293.29) rotate(-180.0)" fill="#ffe200"/><path d="M3.7,0 L-3.0,-3.2 L-2.0,0 L-3.0,3.2Z" transform="translate(733.10,293.29) rotate(-180.0)" fill="#ffe200"/><path d="M3.7,0 L-3.0,-3.2 L-2.0,0 L-3.0,3.2Z" transform="translate(723.10,293.28) rotate(-180.0)" fill="#ffe200"/><path d="M3.7,0 L-3.0,-3.2 L-2.0,0 L-3.0,3.2Z" transform="translate(713.10,293.28) rotate(-180.0)" fill="#ffe200"/><path d="M3.7,0 L-3.0,-3.2 L-2.0,0 L-3.0,3.2Z" transform="translate(703.10,293.27) rotate(-180.0)" fill="#ffe200"/><path d="M3.7,0 L-3.0,-3.2 L-2.0,0 L-3.0,3.2Z" transform="translate(693.10,293.27) rotate(-180.0)" fill="#ffe200"/><path d="M3.7,0 L-3.0,-3.2 L-2.0,0 L-3.0,3.2Z" transform="translate(683.10,293.27) rotate(-180.0)" fill="#ffe200"/><path d="M3.7,0 L-3.0,-3.2 L-2.0,0 L-3.0,3.2Z" transform="translate(673.10,293.26) rotate(-180.0)" fill="#ffe200"/><path d="M3.7,0 L-3.0,-3.2 L-2.0,0 L-3.0,3.2Z" transform="translate(663.10,293.26) rotate(-180.0)" fill="#ffe200"/><path d="M3.7,0 L-3.0,-3.2 L-2.0,0 L-3.0,3.2Z" transform="translate(653.10,293.25) rotate(-180.0)" fill="#ffe200"/><path d="M3.7,0 L-3.0,-3.2 L-2.0,0 L-3.0,3.2Z" transform="translate(643.10,293.25) rotate(-180.0)" fill="#ffe200"/><path d="M3.7,0 L-3.0,-3.2 L-2.0,0 L-3.0,3.2Z" transform="translate(633.10,293.24) rotate(-180.0)" fill="#ffe200"/><path d="M3.7,0 L-3.0,-3.2 L-2.0,0 L-3.0,3.2Z" transform="translate(623.10,293.24) rotate(-180.0)" fill="#ffe200"/><path d="M3.7,0 L-3.0,-3.2 L-2.0,0 L-3.0,3.2Z" transform="translate(613.10,293.24) rotate(-180.0)" fill="#ffe200"/><path d="M3.7,0 L-3.0,-3.2 L-2.0,0 L-3.0,3.2Z" transform="translate(603.10,293.23) rotate(-180.0)" fill="#ffe200"/><path d="M3.7,0 L-3.0,-3.2 L-2.0,0 L-3.0,3.2Z" transform="translate(593.10,293.23) rotate(-180.0)" fill="#ffe200"/><path d="M3.7,0 L-3.0,-3.2 L-2.0,0 L-3.0,3.2Z" transform="translate(583.10,293.22) rotate(-180.0)" fill="#ffe200"/><path d="M3.7,0 L-3.0,-3.2 L-2.0,0 L-3.0,3.2Z" transform="translate(573.10,293.22) rotate(-180.0)" fill="#ffe200"/><path d="M3.7,0 L-3.0,-3.2 L-2.0,0 L-3.0,3.2Z" transform="translate(563.10,293.21) rotate(-180.0)" fill="#ffe200"/><path d="M3.7,0 L-3.0,-3.2 L-2.0,0 L-3.0,3.2Z" transform="translate(553.10,293.21) rotate(-180.0)" fill="#ffe200"/><path d="M3.7,0 L-3.0,-3.2 L-2.0,0 L-3.0,3.2Z" transform="translate(543.10,293.20) rotate(-180.0)" fill="#ffe200"/><path d="M3.7,0 L-3.0,-3.2 L-2.0,0 L-3.0,3.2Z" transform="translate(533.10,293.20) rotate(-180.0)" fill="#ffe200"/><path d="M3.7,0 L-3.0,-3.2 L-2.0,0 L-3.0,3.2Z" transform="translate(524.83,293.81) rotate(171.1)" fill="#ffe200"/><path d="M3.7,0 L-3.0,-3.2 L-2.0,0 L-3.0,3.2Z" transform="translate(515.16,296.28) rotate(160.2)" fill="#ffe200"/><path d="M3.7,0 L-3.0,-3.2 L-2.0,0 L-3.0,3.2Z" transform="translate(506.13,300.54) rotate(149.6)" fill="#ffe200"/><path d="M3.7,0 L-3.0,-3.2 L-2.0,0 L-3.0,3.2Z" transform="translate(497.97,306.31) rotate(140.1)" fill="#ffe200"/><path d="M3.7,0 L-3.0,-3.2 L-2.0,0 L-3.0,3.2Z" transform="translate(490.81,313.28) rotate(131.6)" fill="#ffe200"/><path d="M3.7,0 L-3.0,-3.2 L-2.0,0 L-3.0,3.2Z" transform="translate(484.69,321.18) rotate(124.2)" fill="#ffe200"/><path d="M3.7,0 L-3.0,-3.2 L-2.0,0 L-3.0,3.2Z" transform="translate(479.62,329.79) rotate(117.0)" fill="#ffe200"/><path d="M3.7,0 L-3.0,-3.2 L-2.0,0 L-3.0,3.2Z" transform="translate(475.62,338.95) rotate(110.1)" fill="#ffe200"/><path d="M3.7,0 L-3.0,-3.2 L-2.0,0 L-3.0,3.2Z" transform="translate(472.73,348.51) rotate(103.2)" fill="#ffe200"/><path d="M3.7,0 L-3.0,-3.2 L-2.0,0 L-3.0,3.2Z" transform="translate(471.06,358.37) rotate(95.9)" fill="#ffe200"/><path d="M3.7,0 L-3.0,-3.2 L-2.0,0 L-3.0,3.2Z" transform="translate(470.81,368.35) rotate(87.0)" fill="#ffe200"/><path d="M3.7,0 L-3.0,-3.2 L-2.0,0 L-3.0,3.2Z" transform="translate(472.26,378.23) rotate(76.0)" fill="#ffe200"/><path d="M3.7,0 L-3.0,-3.2 L-2.0,0 L-3.0,3.2Z" transform="translate(475.83,387.55) rotate(61.5)" fill="#ffe200"/><path d="M3.7,0 L-3.0,-3.2 L-2.0,0 L-3.0,3.2Z" transform="translate(481.83,395.49) rotate(43.5)" fill="#ffe200"/><path d="M3.7,0 L-3.0,-3.2 L-2.0,0 L-3.0,3.2Z" transform="translate(490.06,401.09) rotate(24.6)" fill="#ffe200"/><path d="M3.7,0 L-3.0,-3.2 L-2.0,0 L-3.0,3.2Z" transform="translate(826.20,445.89) rotate(-23.4) scale(1.1)" fill="#000" opacity="0.9"/><path d="M3.7,0 L-3.0,-3.2 L-2.0,0 L-3.0,3.2Z" transform="translate(833.84,439.59) rotate(-52.3) scale(1.1)" fill="#000" opacity="0.9"/><path d="M3.7,0 L-3.0,-3.2 L-2.0,0 L-3.0,3.2Z" transform="translate(838.78,430.93) rotate(-66.5) scale(1.1)" fill="#000" opacity="0.9"/><path d="M3.7,0 L-3.0,-3.2 L-2.0,0 L-3.0,3.2Z" transform="translate(842.08,421.50) rotate(-74.1) scale(1.1)" fill="#000" opacity="0.9"/><path d="M3.7,0 L-3.0,-3.2 L-2.0,0 L-3.0,3.2Z" transform="translate(844.43,411.78) rotate(-78.5) scale(1.1)" fill="#000" opacity="0.9"/><path d="M3.7,0 L-3.0,-3.2 L-2.0,0 L-3.0,3.2Z" transform="translate(846.17,401.93) rotate(-81.3) scale(1.1)" fill="#000" opacity="0.9"/><path d="M3.7,0 L-3.0,-3.2 L-2.0,0 L-3.0,3.2Z" transform="translate(847.49,392.02) rotate(-83.3) scale(1.1)" fill="#000" opacity="0.9"/><path d="M3.7,0 L-3.0,-3.2 L-2.0,0 L-3.0,3.2Z" transform="translate(848.54,382.08) rotate(-84.7) scale(1.1)" fill="#000" opacity="0.9"/><path d="M3.7,0 L-3.0,-3.2 L-2.0,0 L-3.0,3.2Z" transform="translate(849.38,372.11) rotate(-85.6) scale(1.1)" fill="#000" opacity="0.9"/><path d="M3.7,0 L-3.0,-3.2 L-2.0,0 L-3.0,3.2Z" transform="translate(850.08,362.14) rotate(-86.3) scale(1.1)" fill="#000" opacity="0.9"/><path d="M3.7,0 L-3.0,-3.2 L-2.0,0 L-3.0,3.2Z" transform="translate(850.70,352.16) rotate(-86.6) scale(1.1)" fill="#000" opacity="0.9"/><path d="M3.7,0 L-3.0,-3.2 L-2.0,0 L-3.0,3.2Z" transform="translate(851.27,342.17) rotate(-86.8) scale(1.1)" fill="#000" opacity="0.9"/><path d="M3.7,0 L-3.0,-3.2 L-2.0,0 L-3.0,3.2Z" transform="translate(851.83,332.19) rotate(-86.7) scale(1.1)" fill="#000" opacity="0.9"/><path d="M3.7,0 L-3.0,-3.2 L-2.0,0 L-3.0,3.2Z" transform="translate(852.42,322.21) rotate(-86.5) scale(1.1)" fill="#000" opacity="0.9"/><path d="M3.7,0 L-3.0,-3.2 L-2.0,0 L-3.0,3.2Z" transform="translate(853.07,312.23) rotate(-86.0) scale(1.1)" fill="#000" opacity="0.9"/><path d="M3.7,0 L-3.0,-3.2 L-2.0,0 L-3.0,3.2Z" transform="translate(853.84,302.26) rotate(-85.2) scale(1.1)" fill="#000" opacity="0.9"/><path d="M3.7,0 L-3.0,-3.2 L-2.0,0 L-3.0,3.2Z" transform="translate(854.78,292.30) rotate(-84.0) scale(1.1)" fill="#000" opacity="0.9"/><path d="M3.7,0 L-3.0,-3.2 L-2.0,0 L-3.0,3.2Z" transform="translate(855.96,282.37) rotate(-82.4) scale(1.1)" fill="#000" opacity="0.9"/><path d="M3.7,0 L-3.0,-3.2 L-2.0,0 L-3.0,3.2Z" transform="translate(857.48,272.49) rotate(-80.0) scale(1.1)" fill="#000" opacity="0.9"/><path d="M3.7,0 L-3.0,-3.2 L-2.0,0 L-3.0,3.2Z" transform="translate(859.51,262.70) rotate(-76.4) scale(1.1)" fill="#000" opacity="0.9"/><path d="M3.7,0 L-3.0,-3.2 L-2.0,0 L-3.0,3.2Z" transform="translate(862.30,253.10) rotate(-70.5) scale(1.1)" fill="#000" opacity="0.9"/><path d="M3.7,0 L-3.0,-3.2 L-2.0,0 L-3.0,3.2Z" transform="translate(866.35,243.97) rotate(-60.4) scale(1.1)" fill="#000" opacity="0.9"/><path d="M3.7,0 L-3.0,-3.2 L-2.0,0 L-3.0,3.2Z" transform="translate(872.58,236.22) rotate(-40.0) scale(1.1)" fill="#000" opacity="0.9"/><path d="M3.7,0 L-3.0,-3.2 L-2.0,0 L-3.0,3.2Z" transform="translate(823.80,443.09) rotate(-23.4)" fill="#ffe200"/><path d="M3.7,0 L-3.0,-3.2 L-2.0,0 L-3.0,3.2Z" transform="translate(831.44,436.79) rotate(-52.3)" fill="#ffe200"/><path d="M3.7,0 L-3.0,-3.2 L-2.0,0 L-3.0,3.2Z" transform="translate(836.38,428.13) rotate(-66.5)" fill="#ffe200"/><path d="M3.7,0 L-3.0,-3.2 L-2.0,0 L-3.0,3.2Z" transform="translate(839.68,418.70) rotate(-74.1)" fill="#ffe200"/><path d="M3.7,0 L-3.0,-3.2 L-2.0,0 L-3.0,3.2Z" transform="translate(842.03,408.98) rotate(-78.5)" fill="#ffe200"/><path d="M3.7,0 L-3.0,-3.2 L-2.0,0 L-3.0,3.2Z" transform="translate(843.77,399.13) rotate(-81.3)" fill="#ffe200"/><path d="M3.7,0 L-3.0,-3.2 L-2.0,0 L-3.0,3.2Z" transform="translate(845.09,389.22) rotate(-83.3)" fill="#ffe200"/><path d="M3.7,0 L-3.0,-3.2 L-2.0,0 L-3.0,3.2Z" transform="translate(846.14,379.28) rotate(-84.7)" fill="#ffe200"/><path d="M3.7,0 L-3.0,-3.2 L-2.0,0 L-3.0,3.2Z" transform="translate(846.98,369.31) rotate(-85.6)" fill="#ffe200"/><path d="M3.7,0 L-3.0,-3.2 L-2.0,0 L-3.0,3.2Z" transform="translate(847.68,359.34) rotate(-86.3)" fill="#ffe200"/><path d="M3.7,0 L-3.0,-3.2 L-2.0,0 L-3.0,3.2Z" transform="translate(848.30,349.36) rotate(-86.6)" fill="#ffe200"/><path d="M3.7,0 L-3.0,-3.2 L-2.0,0 L-3.0,3.2Z" transform="translate(848.87,339.37) rotate(-86.8)" fill="#ffe200"/><path d="M3.7,0 L-3.0,-3.2 L-2.0,0 L-3.0,3.2Z" transform="translate(849.43,329.39) rotate(-86.7)" fill="#ffe200"/><path d="M3.7,0 L-3.0,-3.2 L-2.0,0 L-3.0,3.2Z" transform="translate(850.02,319.41) rotate(-86.5)" fill="#ffe200"/><path d="M3.7,0 L-3.0,-3.2 L-2.0,0 L-3.0,3.2Z" transform="translate(850.67,309.43) rotate(-86.0)" fill="#ffe200"/><path d="M3.7,0 L-3.0,-3.2 L-2.0,0 L-3.0,3.2Z" transform="translate(851.44,299.46) rotate(-85.2)" fill="#ffe200"/><path d="M3.7,0 L-3.0,-3.2 L-2.0,0 L-3.0,3.2Z" transform="translate(852.38,289.50) rotate(-84.0)" fill="#ffe200"/><path d="M3.7,0 L-3.0,-3.2 L-2.0,0 L-3.0,3.2Z" transform="translate(853.56,279.57) rotate(-82.4)" fill="#ffe200"/><path d="M3.7,0 L-3.0,-3.2 L-2.0,0 L-3.0,3.2Z" transform="translate(855.08,269.69) rotate(-80.0)" fill="#ffe200"/><path d="M3.7,0 L-3.0,-3.2 L-2.0,0 L-3.0,3.2Z" transform="translate(857.11,259.90) rotate(-76.4)" fill="#ffe200"/><path d="M3.7,0 L-3.0,-3.2 L-2.0,0 L-3.0,3.2Z" transform="translate(859.90,250.30) rotate(-70.5)" fill="#ffe200"/><path d="M3.7,0 L-3.0,-3.2 L-2.0,0 L-3.0,3.2Z" transform="translate(863.95,241.17) rotate(-60.4)" fill="#ffe200"/><path d="M3.7,0 L-3.0,-3.2 L-2.0,0 L-3.0,3.2Z" transform="translate(870.18,233.42) rotate(-40.0)" fill="#ffe200"/><path d="M410.00,411.00 L410.38,410.99 L410.76,410.98 L411.13,410.95 L411.50,410.91 L411.87,410.86 L412.24,410.80 L412.60,410.73 L412.96,410.65 L413.32,410.55 L413.67,410.45 L414.02,410.34 L414.37,410.21 L414.71,410.08 L415.05,409.93 L415.39,409.77 L415.73,409.61 L416.06,409.43 L416.39,409.24 L416.72,409.05 L417.04,408.84 L417.36,408.62 L417.68,408.39 L418.00,408.16 L418.31,407.91 L418.62,407.65 L418.93,407.39 L419.23,407.11 L419.53,406.82 L419.83,406.53 L420.13,406.22 L420.42,405.91 L420.72,405.58 L421.01,405.25 L421.29,404.91 L421.57,404.55 L421.86,404.19 L422.13,403.82 L422.41,403.44 L422.68,403.05 L422.95,402.66 L423.22,402.25 L423.49,401.83 L423.75,401.41 L424.01,400.98 L424.27,400.53 L424.53,400.08 L424.78,399.62 L425.03,399.16 L425.28,398.68 L425.53,398.20 L425.77,397.70 L426.01,397.20 L426.25,396.69 L426.49,396.17 L426.73,395.65 L426.96,395.11 L427.19,394.57 L427.42,394.02 L427.64,393.46 L427.87,392.90 L428.09,392.32 L428.31,391.74 L428.53,391.15 L428.74,390.55 L428.95,389.95 L429.17,389.34 L429.38,388.72 L429.58,388.09 L429.79,387.46 L429.99,386.82 L430.19,386.17 L430.39,385.51 L430.59,384.85 L430.78,384.18 L430.98,383.50 L431.17,382.81 L431.36,382.12 L431.54,381.42 L431.73,380.72 L431.91,380.01 L432.09,379.29 L432.27,378.56 L432.45,377.83 L432.63,377.09 L432.80,376.35 L432.98,375.60 L433.15,374.84 L433.32,374.08 L433.48,373.31 L433.65,372.53 L433.81,371.75 L433.98,370.96 L434.14,370.16 L434.30,369.36 L434.45,368.56 L434.61,367.74 L434.76,366.93 L434.92,366.10 L435.07,365.27 L435.22,364.44 L435.37,363.60 L435.51,362.75 L435.66,361.90 L435.80,361.04 L435.95,360.18 L436.09,359.31 L436.23,358.44 L436.36,357.56 L436.50,356.67 L436.64,355.79 L436.77,354.89 L436.90,353.99 L437.03,353.09 L437.16,352.18 L437.29,351.27 L437.42,350.35 L437.55,349.43 L437.67,348.50 L437.80,347.57 L437.92,346.63 L438.04,345.69 L438.16,344.75 L438.28,343.80 L438.40,342.84 L438.51,341.88 L438.63,340.92 L438.74,339.95 L438.86,338.98 L438.97,338.01 L439.08,337.03 L439.19,336.05 L439.30,335.06 L439.41,334.07 L439.52,333.08 L439.62,332.08 L439.73,331.08 L439.83,330.07 L439.94,329.07 L440.04,328.05 L440.14,327.04 L440.24,326.02 L440.34,325.00 L440.44,323.97 L440.54,322.94 L440.64,321.91 L440.73,320.88 L440.83,319.84 L440.92,318.80 L441.02,317.76 L441.11,316.71 L441.21,315.66 L441.30,314.61 L441.39,313.56 L441.48,312.50 L441.57,311.44 L441.66,310.38 L441.75,309.31 L441.84,308.25 L441.93,307.18 L442.02,306.10 L442.10,305.03 L442.19,303.95 L442.28,302.88 L442.36,301.80 L442.45,300.71 L442.53,299.63 L442.61,298.54 L442.70,297.45 L442.78,296.37 L442.86,295.27 L442.95,294.18 L443.03,293.09 L443.11,291.99 L443.19,290.89 L443.27,289.79 L443.35,288.69 L443.44,287.59 L443.52,286.49 L443.60,285.38 L443.68,284.28 L443.76,283.17 L443.83,282.06 L443.91,280.95 L443.99,279.84 L444.07,278.73 L444.15,277.62 L444.23,276.51 L444.31,275.39 L444.39,274.28 L444.47,273.17 L444.54,272.05 L444.62,270.94 L444.70,269.82 L444.78,268.70 L444.86,267.59 L444.94,266.47 L445.01,265.35 L445.09,264.23 L445.17,263.12 L445.25,262.00 L445.33,260.88 L445.41,259.77 L445.49,258.65 L445.57,257.53 L445.65,256.41 L445.73,255.30 L445.80,254.18 L445.88,253.06 L445.97,251.95 L446.05,250.83 L446.13,249.72 L446.21,248.61 L446.29,247.49 L446.37,246.38 L446.45,245.27 L446.54,244.16 L446.62,243.05 L446.70,241.94 L446.79,240.83 L446.87,239.72 L446.95,238.62 L447.04,237.51 L447.12,236.41 L447.21,235.31 L447.30,234.21 L447.38,233.11 L447.47,232.01 L447.56,230.91 L447.65,229.82 L447.74,228.73 L447.83,227.63 L447.92,226.55 L448.01,225.46 L448.10,224.37 L448.19,223.29 L448.28,222.20 L448.38,221.12 L448.47,220.05 L448.57,218.97 L448.66,217.90 L448.76,216.82 L448.86,215.75 L448.96,214.69 L449.06,213.62 L449.16,212.56 L449.26,211.50 L449.36,210.44 L449.46,209.39 L449.56,208.34 L449.67,207.29 L449.77,206.24 L449.88,205.20 L449.99,204.16 L450.09,203.12 L450.20,202.09 L450.31,201.06 L450.42,200.03 L450.54,199.00 L450.65,197.98 L450.76,196.96 L450.88,195.95 L451.00,194.93 L451.11,193.93 L451.23,192.92 L451.35,191.92 L451.47,190.92 L451.60,189.93 L451.72,188.94 L451.84,187.95 L451.97,186.97 L452.10,185.99 L452.23,185.02 L452.36,184.05 L452.49,183.08 L452.62,182.12 L452.75,181.16 L452.89,180.20 L453.02,179.25 L453.16,178.31 L453.30,177.37 L453.44,176.43 L453.58,175.50 L453.73,174.57 L453.87,173.65 L454.02,172.73 L454.17,171.82 L454.32,170.91 L454.47,170.01 L454.62,169.11 L454.78,168.21 L454.93,167.33 L455.09,166.44 L455.25,165.56 L455.41,164.69 L455.57,163.82 L455.73,162.96 L455.90,162.10 L456.07,161.25 L456.24,160.40 L456.41,159.56 L456.58,158.73 L456.75,157.90 L456.93,157.07 L457.11,156.26 L457.29,155.44 L457.47,154.64 L457.65,153.84 L457.84,153.04 L458.02,152.25 L458.21,151.47 L458.40,150.69 L458.60,149.92 L458.79,149.16 L458.99,148.40 L459.19,147.65 L459.39,146.91 L459.59,146.17 L459.79,145.44 L460.00,144.71 L460.21,143.99 L460.42,143.28 L460.63,142.58 L460.85,141.88 L461.06,141.19 L461.28,140.50 L461.50,139.82 L461.73,139.15 L461.95,138.49 L462.18,137.83 L462.41,137.18 L462.64,136.54 L462.88,135.91 L463.11,135.28 L463.35,134.66 L463.60,134.05 L463.84,133.45 L464.09,132.85 L464.33,132.26 L464.58,131.68 L464.84,131.10 L465.09,130.54 L465.35,129.98 L465.61,129.43 L465.87,128.89 L466.14,128.35 L466.41,127.83 L466.68,127.31 L466.95,126.80 L467.23,126.30 L467.50,125.80 L467.78,125.32 L468.07,124.84 L468.35,124.38 L468.64,123.92 L468.93,123.47 L469.23,123.02 L469.52,122.59 L469.82,122.17 L470.12,121.75 L470.43,121.34 L470.73,120.95 L471.04,120.56 L471.35,120.18 L471.67,119.81 L471.99,119.45 L472.31,119.09 L472.63,118.75 L472.96,118.42 L473.29,118.09 L473.62,117.78 L473.96,117.47 L474.29,117.18 L474.63,116.89 L474.98,116.61 L475.32,116.35 L475.67,116.09 L476.03,115.84 L476.38,115.61 L476.74,115.38 L477.10,115.16 L477.47,114.95 L477.84,114.76 L478.21,114.57 L478.58,114.39 L478.96,114.23 L479.34,114.07 L479.72,113.92 L480.11,113.79 L480.50,113.66 L480.89,113.55 L481.29,113.45 L481.69,113.35 L482.09,113.27 L482.50,113.20 L482.90,113.14 L483.32,113.09 L483.73,113.05 L484.15,113.02 L484.57,113.01 L485.00,113.00" fill="none" stroke="#000" stroke-width="2.1" transform="translate(2.8,2.5)" opacity="0.95"/><path d="M410.00,411.00 L410.38,410.99 L410.76,410.98 L411.13,410.95 L411.50,410.91 L411.87,410.86 L412.24,410.80 L412.60,410.73 L412.96,410.65 L413.32,410.55 L413.67,410.45 L414.02,410.34 L414.37,410.21 L414.71,410.08 L415.05,409.93 L415.39,409.77 L415.73,409.61 L416.06,409.43 L416.39,409.24 L416.72,409.05 L417.04,408.84 L417.36,408.62 L417.68,408.39 L418.00,408.16 L418.31,407.91 L418.62,407.65 L418.93,407.39 L419.23,407.11 L419.53,406.82 L419.83,406.53 L420.13,406.22 L420.42,405.91 L420.72,405.58 L421.01,405.25 L421.29,404.91 L421.57,404.55 L421.86,404.19 L422.13,403.82 L422.41,403.44 L422.68,403.05 L422.95,402.66 L423.22,402.25 L423.49,401.83 L423.75,401.41 L424.01,400.98 L424.27,400.53 L424.53,400.08 L424.78,399.62 L425.03,399.16 L425.28,398.68 L425.53,398.20 L425.77,397.70 L426.01,397.20 L426.25,396.69 L426.49,396.17 L426.73,395.65 L426.96,395.11 L427.19,394.57 L427.42,394.02 L427.64,393.46 L427.87,392.90 L428.09,392.32 L428.31,391.74 L428.53,391.15 L428.74,390.55 L428.95,389.95 L429.17,389.34 L429.38,388.72 L429.58,388.09 L429.79,387.46 L429.99,386.82 L430.19,386.17 L430.39,385.51 L430.59,384.85 L430.78,384.18 L430.98,383.50 L431.17,382.81 L431.36,382.12 L431.54,381.42 L431.73,380.72 L431.91,380.01 L432.09,379.29 L432.27,378.56 L432.45,377.83 L432.63,377.09 L432.80,376.35 L432.98,375.60 L433.15,374.84 L433.32,374.08 L433.48,373.31 L433.65,372.53 L433.81,371.75 L433.98,370.96 L434.14,370.16 L434.30,369.36 L434.45,368.56 L434.61,367.74 L434.76,366.93 L434.92,366.10 L435.07,365.27 L435.22,364.44 L435.37,363.60 L435.51,362.75 L435.66,361.90 L435.80,361.04 L435.95,360.18 L436.09,359.31 L436.23,358.44 L436.36,357.56 L436.50,356.67 L436.64,355.79 L436.77,354.89 L436.90,353.99 L437.03,353.09 L437.16,352.18 L437.29,351.27 L437.42,350.35 L437.55,349.43 L437.67,348.50 L437.80,347.57 L437.92,346.63 L438.04,345.69 L438.16,344.75 L438.28,343.80 L438.40,342.84 L438.51,341.88 L438.63,340.92 L438.74,339.95 L438.86,338.98 L438.97,338.01 L439.08,337.03 L439.19,336.05 L439.30,335.06 L439.41,334.07 L439.52,333.08 L439.62,332.08 L439.73,331.08 L439.83,330.07 L439.94,329.07 L440.04,328.05 L440.14,327.04 L440.24,326.02 L440.34,325.00 L440.44,323.97 L440.54,322.94 L440.64,321.91 L440.73,320.88 L440.83,319.84 L440.92,318.80 L441.02,317.76 L441.11,316.71 L441.21,315.66 L441.30,314.61 L441.39,313.56 L441.48,312.50 L441.57,311.44 L441.66,310.38 L441.75,309.31 L441.84,308.25 L441.93,307.18 L442.02,306.10 L442.10,305.03 L442.19,303.95 L442.28,302.88 L442.36,301.80 L442.45,300.71 L442.53,299.63 L442.61,298.54 L442.70,297.45 L442.78,296.37 L442.86,295.27 L442.95,294.18 L443.03,293.09 L443.11,291.99 L443.19,290.89 L443.27,289.79 L443.35,288.69 L443.44,287.59 L443.52,286.49 L443.60,285.38 L443.68,284.28 L443.76,283.17 L443.83,282.06 L443.91,280.95 L443.99,279.84 L444.07,278.73 L444.15,277.62 L444.23,276.51 L444.31,275.39 L444.39,274.28 L444.47,273.17 L444.54,272.05 L444.62,270.94 L444.70,269.82 L444.78,268.70 L444.86,267.59 L444.94,266.47 L445.01,265.35 L445.09,264.23 L445.17,263.12 L445.25,262.00 L445.33,260.88 L445.41,259.77 L445.49,258.65 L445.57,257.53 L445.65,256.41 L445.73,255.30 L445.80,254.18 L445.88,253.06 L445.97,251.95 L446.05,250.83 L446.13,249.72 L446.21,248.61 L446.29,247.49 L446.37,246.38 L446.45,245.27 L446.54,244.16 L446.62,243.05 L446.70,241.94 L446.79,240.83 L446.87,239.72 L446.95,238.62 L447.04,237.51 L447.12,236.41 L447.21,235.31 L447.30,234.21 L447.38,233.11 L447.47,232.01 L447.56,230.91 L447.65,229.82 L447.74,228.73 L447.83,227.63 L447.92,226.55 L448.01,225.46 L448.10,224.37 L448.19,223.29 L448.28,222.20 L448.38,221.12 L448.47,220.05 L448.57,218.97 L448.66,217.90 L448.76,216.82 L448.86,215.75 L448.96,214.69 L449.06,213.62 L449.16,212.56 L449.26,211.50 L449.36,210.44 L449.46,209.39 L449.56,208.34 L449.67,207.29 L449.77,206.24 L449.88,205.20 L449.99,204.16 L450.09,203.12 L450.20,202.09 L450.31,201.06 L450.42,200.03 L450.54,199.00 L450.65,197.98 L450.76,196.96 L450.88,195.95 L451.00,194.93 L451.11,193.93 L451.23,192.92 L451.35,191.92 L451.47,190.92 L451.60,189.93 L451.72,188.94 L451.84,187.95 L451.97,186.97 L452.10,185.99 L452.23,185.02 L452.36,184.05 L452.49,183.08 L452.62,182.12 L452.75,181.16 L452.89,180.20 L453.02,179.25 L453.16,178.31 L453.30,177.37 L453.44,176.43 L453.58,175.50 L453.73,174.57 L453.87,173.65 L454.02,172.73 L454.17,171.82 L454.32,170.91 L454.47,170.01 L454.62,169.11 L454.78,168.21 L454.93,167.33 L455.09,166.44 L455.25,165.56 L455.41,164.69 L455.57,163.82 L455.73,162.96 L455.90,162.10 L456.07,161.25 L456.24,160.40 L456.41,159.56 L456.58,158.73 L456.75,157.90 L456.93,157.07 L457.11,156.26 L457.29,155.44 L457.47,154.64 L457.65,153.84 L457.84,153.04 L458.02,152.25 L458.21,151.47 L458.40,150.69 L458.60,149.92 L458.79,149.16 L458.99,148.40 L459.19,147.65 L459.39,146.91 L459.59,146.17 L459.79,145.44 L460.00,144.71 L460.21,143.99 L460.42,143.28 L460.63,142.58 L460.85,141.88 L461.06,141.19 L461.28,140.50 L461.50,139.82 L461.73,139.15 L461.95,138.49 L462.18,137.83 L462.41,137.18 L462.64,136.54 L462.88,135.91 L463.11,135.28 L463.35,134.66 L463.60,134.05 L463.84,133.45 L464.09,132.85 L464.33,132.26 L464.58,131.68 L464.84,131.10 L465.09,130.54 L465.35,129.98 L465.61,129.43 L465.87,128.89 L466.14,128.35 L466.41,127.83 L466.68,127.31 L466.95,126.80 L467.23,126.30 L467.50,125.80 L467.78,125.32 L468.07,124.84 L468.35,124.38 L468.64,123.92 L468.93,123.47 L469.23,123.02 L469.52,122.59 L469.82,122.17 L470.12,121.75 L470.43,121.34 L470.73,120.95 L471.04,120.56 L471.35,120.18 L471.67,119.81 L471.99,119.45 L472.31,119.09 L472.63,118.75 L472.96,118.42 L473.29,118.09 L473.62,117.78 L473.96,117.47 L474.29,117.18 L474.63,116.89 L474.98,116.61 L475.32,116.35 L475.67,116.09 L476.03,115.84 L476.38,115.61 L476.74,115.38 L477.10,115.16 L477.47,114.95 L477.84,114.76 L478.21,114.57 L478.58,114.39 L478.96,114.23 L479.34,114.07 L479.72,113.92 L480.11,113.79 L480.50,113.66 L480.89,113.55 L481.29,113.45 L481.69,113.35 L482.09,113.27 L482.50,113.20 L482.90,113.14 L483.32,113.09 L483.73,113.05 L484.15,113.02 L484.57,113.01 L485.00,113.00" fill="none" stroke="#eeeeee" stroke-width="1.7"/><path d="M485.00,113.00 L486.00,112.85 L487.00,112.70 L488.00,112.55 L489.01,112.41 L490.02,112.26 L491.04,112.12 L492.06,111.98 L493.08,111.84 L494.12,111.70 L495.16,111.56 L496.22,111.42 L497.28,111.29 L498.36,111.15 L499.44,111.02 L500.55,110.89 L501.66,110.76 L502.80,110.64 L503.94,110.51 L505.11,110.39 L506.30,110.27 L507.50,110.15 L508.73,110.03 L509.97,109.92 L511.24,109.80 L512.53,109.69 L513.85,109.58 L515.19,109.48 L516.56,109.37 L517.95,109.27 L519.38,109.17 L520.83,109.08 L522.31,108.99 L523.82,108.89 L525.37,108.81 L526.95,108.72 L528.56,108.64 L530.21,108.56 L531.89,108.48 L533.61,108.40 L535.37,108.33 L537.17,108.26 L539.00,108.20 L540.88,108.14 L542.80,108.08 L544.77,108.02 L546.77,107.97 L548.82,107.92 L550.92,107.87 L553.06,107.83 L555.25,107.79 L557.49,107.76 L559.78,107.72 L562.12,107.70 L564.52,107.67 L566.96,107.65 L569.46,107.63 L572.01,107.62 L574.62,107.61 L577.28,107.60 L580.00,107.60 L580.00,107.60 L580.01,107.60 L580.02,107.60 L580.05,107.60 L580.09,107.60 L580.14,107.60 L580.20,107.60 L580.28,107.60 L580.36,107.60 L580.46,107.60 L580.56,107.60 L580.68,107.60 L580.81,107.60 L580.95,107.60 L581.09,107.60 L581.25,107.60 L581.42,107.60 L581.61,107.60 L581.80,107.60 L582.00,107.60 L582.21,107.60 L582.43,107.60 L582.67,107.60 L582.91,107.60 L583.16,107.60 L583.43,107.60 L583.70,107.60 L583.98,107.61 L584.27,107.61 L584.58,107.61 L584.89,107.61 L585.21,107.61 L585.54,107.61 L585.89,107.61 L586.24,107.61 L586.60,107.61 L586.97,107.61 L587.35,107.61 L587.73,107.61 L588.13,107.61 L588.54,107.61 L588.96,107.61 L589.38,107.61 L589.82,107.61 L590.26,107.61 L590.71,107.61 L591.17,107.61 L591.64,107.62 L592.12,107.62 L592.61,107.62 L593.11,107.62 L593.61,107.62 L594.12,107.62 L594.64,107.62 L595.18,107.62 L595.71,107.62 L596.26,107.62 L596.82,107.62 L597.38,107.62 L597.95,107.62 L598.53,107.62 L599.12,107.63 L599.71,107.63 L600.31,107.63 L600.93,107.63 L601.54,107.63 L602.17,107.63 L602.80,107.63 L603.45,107.63 L604.10,107.63 L604.75,107.63 L605.42,107.63 L606.09,107.63 L606.77,107.64 L607.45,107.64 L608.15,107.64 L608.85,107.64 L609.56,107.64 L610.27,107.64 L610.99,107.64 L611.72,107.64 L612.46,107.64 L613.20,107.64 L613.95,107.64 L614.70,107.65 L615.46,107.65 L616.23,107.65 L617.01,107.65 L617.79,107.65 L618.58,107.65 L619.37,107.65 L620.17,107.65 L620.98,107.65 L621.79,107.65 L622.61,107.66 L623.44,107.66 L624.27,107.66 L625.11,107.66 L625.95,107.66 L626.80,107.66 L627.66,107.66 L628.52,107.66 L629.38,107.66 L630.26,107.67 L631.13,107.67 L632.02,107.67 L632.90,107.67 L633.80,107.67 L634.70,107.67 L635.60,107.67 L636.51,107.67 L637.43,107.68 L638.35,107.68 L639.27,107.68 L640.20,107.68 L641.13,107.68 L642.07,107.68 L643.02,107.68 L643.97,107.68 L644.92,107.69 L645.88,107.69 L646.84,107.69 L647.81,107.69 L648.78,107.69 L649.76,107.69 L650.74,107.69 L651.72,107.69 L652.71,107.70 L653.71,107.70 L654.71,107.70 L655.71,107.70 L656.71,107.70 L657.72,107.70 L658.74,107.70 L659.75,107.70 L660.77,107.71 L661.80,107.71 L662.83,107.71 L663.86,107.71 L664.89,107.71 L665.93,107.71 L666.98,107.71 L668.02,107.72 L669.07,107.72 L670.12,107.72 L671.18,107.72 L672.24,107.72 L673.30,107.72 L674.37,107.72 L675.43,107.73 L676.50,107.73 L677.58,107.73 L678.65,107.73 L679.73,107.73 L680.82,107.73 L681.90,107.73 L682.99,107.74 L684.08,107.74 L685.17,107.74 L686.26,107.74 L687.36,107.74 L688.46,107.74 L689.56,107.74 L690.66,107.75 L691.77,107.75 L692.88,107.75 L693.99,107.75 L695.10,107.75 L696.21,107.75 L697.33,107.75 L698.44,107.76 L699.56,107.76 L700.68,107.76 L701.81,107.76 L702.93,107.76 L704.06,107.76 L705.18,107.76 L706.31,107.77 L707.44,107.77 L708.57,107.77 L709.70,107.77 L710.83,107.77 L711.97,107.77 L713.10,107.77 L714.24,107.78 L715.38,107.78 L716.51,107.78 L717.65,107.78 L718.79,107.78 L719.93,107.78 L721.07,107.79 L722.21,107.79 L723.35,107.79 L724.50,107.79 L725.64,107.79 L726.78,107.79 L727.93,107.79 L729.07,107.80 L730.21,107.80 L731.36,107.80 L732.50,107.80 L733.64,107.80 L734.79,107.80 L735.93,107.80 L737.07,107.81 L738.22,107.81 L739.36,107.81 L740.50,107.81 L741.65,107.81 L742.79,107.81 L743.93,107.81 L745.07,107.82 L746.21,107.82 L747.35,107.82 L748.49,107.82 L749.62,107.82 L750.76,107.82 L751.90,107.83 L753.03,107.83 L754.17,107.83 L755.30,107.83 L756.43,107.83 L757.56,107.83 L758.69,107.83 L759.82,107.84 L760.94,107.84 L762.07,107.84 L763.19,107.84 L764.32,107.84 L765.44,107.84 L766.56,107.84 L767.67,107.85 L768.79,107.85 L769.90,107.85 L771.01,107.85 L772.12,107.85 L773.23,107.85 L774.34,107.85 L775.44,107.86 L776.54,107.86 L777.64,107.86 L778.74,107.86 L779.83,107.86 L780.92,107.86 L782.01,107.86 L783.10,107.87 L784.18,107.87 L785.27,107.87 L786.35,107.87 L787.42,107.87 L788.50,107.87 L789.57,107.87 L790.63,107.88 L791.70,107.88 L792.76,107.88 L793.82,107.88 L794.88,107.88 L795.93,107.88 L796.98,107.88 L798.02,107.89 L799.07,107.89 L800.11,107.89 L801.14,107.89 L802.17,107.89 L803.20,107.89 L804.23,107.89 L805.25,107.90 L806.26,107.90 L807.28,107.90 L808.29,107.90 L809.29,107.90 L810.29,107.90 L811.29,107.90 L812.29,107.90 L813.28,107.91 L814.26,107.91 L815.24,107.91 L816.22,107.91 L817.19,107.91 L818.16,107.91 L819.12,107.91 L820.08,107.91 L821.03,107.92 L821.98,107.92 L822.93,107.92 L823.87,107.92 L824.80,107.92 L825.73,107.92 L826.65,107.92 L827.57,107.92 L828.49,107.93 L829.40,107.93 L830.30,107.93 L831.20,107.93 L832.10,107.93 L832.98,107.93 L833.87,107.93 L834.74,107.93 L835.62,107.94 L836.48,107.94 L837.34,107.94 L838.20,107.94 L839.05,107.94 L839.89,107.94 L840.73,107.94 L841.56,107.94 L842.39,107.94 L843.21,107.95 L844.02,107.95 L844.83,107.95 L845.63,107.95 L846.42,107.95 L847.21,107.95 L847.99,107.95 L848.77,107.95 L849.54,107.95 L850.30,107.95 L851.05,107.96 L851.80,107.96 L852.54,107.96 L853.28,107.96 L854.01,107.96 L854.73,107.96 L855.44,107.96 L856.15,107.96 L856.85,107.96 L857.55,107.96 L858.23,107.96 L858.91,107.97 L859.58,107.97 L860.25,107.97 L860.90,107.97 L861.55,107.97 L862.20,107.97 L862.83,107.97 L863.46,107.97 L864.07,107.97 L864.69,107.97 L865.29,107.97 L865.88,107.97 L866.47,107.98 L867.05,107.98 L867.62,107.98 L868.18,107.98 L868.74,107.98 L869.29,107.98 L869.82,107.98 L870.36,107.98 L870.88,107.98 L871.39,107.98 L871.89,107.98 L872.39,107.98 L872.88,107.98 L873.36,107.98 L873.83,107.99 L874.29,107.99 L874.74,107.99 L875.18,107.99 L875.62,107.99 L876.04,107.99 L876.46,107.99 L876.87,107.99 L877.27,107.99 L877.65,107.99 L878.03,107.99 L878.40,107.99 L878.76,107.99 L879.11,107.99 L879.46,107.99 L879.79,107.99 L880.11,107.99 L880.42,107.99 L880.73,107.99 L881.02,107.99 L881.30,108.00 L881.57,108.00 L881.84,108.00 L882.09,108.00 L882.33,108.00 L882.57,108.00 L882.79,108.00 L883.00,108.00 L883.20,108.00 L883.39,108.00 L883.58,108.00 L883.75,108.00 L883.91,108.00 L884.05,108.00 L884.19,108.00 L884.32,108.00 L884.44,108.00 L884.54,108.00 L884.64,108.00 L884.72,108.00 L884.80,108.00 L884.86,108.00 L884.91,108.00 L884.95,108.00 L884.98,108.00 L884.99,108.00 L885.00,108.00" fill="none" stroke="#000" stroke-width="2.1" transform="translate(2.8,2.5)" opacity="0.95"/><path d="M485.00,113.00 L486.00,112.85 L487.00,112.70 L488.00,112.55 L489.01,112.41 L490.02,112.26 L491.04,112.12 L492.06,111.98 L493.08,111.84 L494.12,111.70 L495.16,111.56 L496.22,111.42 L497.28,111.29 L498.36,111.15 L499.44,111.02 L500.55,110.89 L501.66,110.76 L502.80,110.64 L503.94,110.51 L505.11,110.39 L506.30,110.27 L507.50,110.15 L508.73,110.03 L509.97,109.92 L511.24,109.80 L512.53,109.69 L513.85,109.58 L515.19,109.48 L516.56,109.37 L517.95,109.27 L519.38,109.17 L520.83,109.08 L522.31,108.99 L523.82,108.89 L525.37,108.81 L526.95,108.72 L528.56,108.64 L530.21,108.56 L531.89,108.48 L533.61,108.40 L535.37,108.33 L537.17,108.26 L539.00,108.20 L540.88,108.14 L542.80,108.08 L544.77,108.02 L546.77,107.97 L548.82,107.92 L550.92,107.87 L553.06,107.83 L555.25,107.79 L557.49,107.76 L559.78,107.72 L562.12,107.70 L564.52,107.67 L566.96,107.65 L569.46,107.63 L572.01,107.62 L574.62,107.61 L577.28,107.60 L580.00,107.60 L580.00,107.60 L580.01,107.60 L580.02,107.60 L580.05,107.60 L580.09,107.60 L580.14,107.60 L580.20,107.60 L580.28,107.60 L580.36,107.60 L580.46,107.60 L580.56,107.60 L580.68,107.60 L580.81,107.60 L580.95,107.60 L581.09,107.60 L581.25,107.60 L581.42,107.60 L581.61,107.60 L581.80,107.60 L582.00,107.60 L582.21,107.60 L582.43,107.60 L582.67,107.60 L582.91,107.60 L583.16,107.60 L583.43,107.60 L583.70,107.60 L583.98,107.61 L584.27,107.61 L584.58,107.61 L584.89,107.61 L585.21,107.61 L585.54,107.61 L585.89,107.61 L586.24,107.61 L586.60,107.61 L586.97,107.61 L587.35,107.61 L587.73,107.61 L588.13,107.61 L588.54,107.61 L588.96,107.61 L589.38,107.61 L589.82,107.61 L590.26,107.61 L590.71,107.61 L591.17,107.61 L591.64,107.62 L592.12,107.62 L592.61,107.62 L593.11,107.62 L593.61,107.62 L594.12,107.62 L594.64,107.62 L595.18,107.62 L595.71,107.62 L596.26,107.62 L596.82,107.62 L597.38,107.62 L597.95,107.62 L598.53,107.62 L599.12,107.63 L599.71,107.63 L600.31,107.63 L600.93,107.63 L601.54,107.63 L602.17,107.63 L602.80,107.63 L603.45,107.63 L604.10,107.63 L604.75,107.63 L605.42,107.63 L606.09,107.63 L606.77,107.64 L607.45,107.64 L608.15,107.64 L608.85,107.64 L609.56,107.64 L610.27,107.64 L610.99,107.64 L611.72,107.64 L612.46,107.64 L613.20,107.64 L613.95,107.64 L614.70,107.65 L615.46,107.65 L616.23,107.65 L617.01,107.65 L617.79,107.65 L618.58,107.65 L619.37,107.65 L620.17,107.65 L620.98,107.65 L621.79,107.65 L622.61,107.66 L623.44,107.66 L624.27,107.66 L625.11,107.66 L625.95,107.66 L626.80,107.66 L627.66,107.66 L628.52,107.66 L629.38,107.66 L630.26,107.67 L631.13,107.67 L632.02,107.67 L632.90,107.67 L633.80,107.67 L634.70,107.67 L635.60,107.67 L636.51,107.67 L637.43,107.68 L638.35,107.68 L639.27,107.68 L640.20,107.68 L641.13,107.68 L642.07,107.68 L643.02,107.68 L643.97,107.68 L644.92,107.69 L645.88,107.69 L646.84,107.69 L647.81,107.69 L648.78,107.69 L649.76,107.69 L650.74,107.69 L651.72,107.69 L652.71,107.70 L653.71,107.70 L654.71,107.70 L655.71,107.70 L656.71,107.70 L657.72,107.70 L658.74,107.70 L659.75,107.70 L660.77,107.71 L661.80,107.71 L662.83,107.71 L663.86,107.71 L664.89,107.71 L665.93,107.71 L666.98,107.71 L668.02,107.72 L669.07,107.72 L670.12,107.72 L671.18,107.72 L672.24,107.72 L673.30,107.72 L674.37,107.72 L675.43,107.73 L676.50,107.73 L677.58,107.73 L678.65,107.73 L679.73,107.73 L680.82,107.73 L681.90,107.73 L682.99,107.74 L684.08,107.74 L685.17,107.74 L686.26,107.74 L687.36,107.74 L688.46,107.74 L689.56,107.74 L690.66,107.75 L691.77,107.75 L692.88,107.75 L693.99,107.75 L695.10,107.75 L696.21,107.75 L697.33,107.75 L698.44,107.76 L699.56,107.76 L700.68,107.76 L701.81,107.76 L702.93,107.76 L704.06,107.76 L705.18,107.76 L706.31,107.77 L707.44,107.77 L708.57,107.77 L709.70,107.77 L710.83,107.77 L711.97,107.77 L713.10,107.77 L714.24,107.78 L715.38,107.78 L716.51,107.78 L717.65,107.78 L718.79,107.78 L719.93,107.78 L721.07,107.79 L722.21,107.79 L723.35,107.79 L724.50,107.79 L725.64,107.79 L726.78,107.79 L727.93,107.79 L729.07,107.80 L730.21,107.80 L731.36,107.80 L732.50,107.80 L733.64,107.80 L734.79,107.80 L735.93,107.80 L737.07,107.81 L738.22,107.81 L739.36,107.81 L740.50,107.81 L741.65,107.81 L742.79,107.81 L743.93,107.81 L745.07,107.82 L746.21,107.82 L747.35,107.82 L748.49,107.82 L749.62,107.82 L750.76,107.82 L751.90,107.83 L753.03,107.83 L754.17,107.83 L755.30,107.83 L756.43,107.83 L757.56,107.83 L758.69,107.83 L759.82,107.84 L760.94,107.84 L762.07,107.84 L763.19,107.84 L764.32,107.84 L765.44,107.84 L766.56,107.84 L767.67,107.85 L768.79,107.85 L769.90,107.85 L771.01,107.85 L772.12,107.85 L773.23,107.85 L774.34,107.85 L775.44,107.86 L776.54,107.86 L777.64,107.86 L778.74,107.86 L779.83,107.86 L780.92,107.86 L782.01,107.86 L783.10,107.87 L784.18,107.87 L785.27,107.87 L786.35,107.87 L787.42,107.87 L788.50,107.87 L789.57,107.87 L790.63,107.88 L791.70,107.88 L792.76,107.88 L793.82,107.88 L794.88,107.88 L795.93,107.88 L796.98,107.88 L798.02,107.89 L799.07,107.89 L800.11,107.89 L801.14,107.89 L802.17,107.89 L803.20,107.89 L804.23,107.89 L805.25,107.90 L806.26,107.90 L807.28,107.90 L808.29,107.90 L809.29,107.90 L810.29,107.90 L811.29,107.90 L812.29,107.90 L813.28,107.91 L814.26,107.91 L815.24,107.91 L816.22,107.91 L817.19,107.91 L818.16,107.91 L819.12,107.91 L820.08,107.91 L821.03,107.92 L821.98,107.92 L822.93,107.92 L823.87,107.92 L824.80,107.92 L825.73,107.92 L826.65,107.92 L827.57,107.92 L828.49,107.93 L829.40,107.93 L830.30,107.93 L831.20,107.93 L832.10,107.93 L832.98,107.93 L833.87,107.93 L834.74,107.93 L835.62,107.94 L836.48,107.94 L837.34,107.94 L838.20,107.94 L839.05,107.94 L839.89,107.94 L840.73,107.94 L841.56,107.94 L842.39,107.94 L843.21,107.95 L844.02,107.95 L844.83,107.95 L845.63,107.95 L846.42,107.95 L847.21,107.95 L847.99,107.95 L848.77,107.95 L849.54,107.95 L850.30,107.95 L851.05,107.96 L851.80,107.96 L852.54,107.96 L853.28,107.96 L854.01,107.96 L854.73,107.96 L855.44,107.96 L856.15,107.96 L856.85,107.96 L857.55,107.96 L858.23,107.96 L858.91,107.97 L859.58,107.97 L860.25,107.97 L860.90,107.97 L861.55,107.97 L862.20,107.97 L862.83,107.97 L863.46,107.97 L864.07,107.97 L864.69,107.97 L865.29,107.97 L865.88,107.97 L866.47,107.98 L867.05,107.98 L867.62,107.98 L868.18,107.98 L868.74,107.98 L869.29,107.98 L869.82,107.98 L870.36,107.98 L870.88,107.98 L871.39,107.98 L871.89,107.98 L872.39,107.98 L872.88,107.98 L873.36,107.98 L873.83,107.99 L874.29,107.99 L874.74,107.99 L875.18,107.99 L875.62,107.99 L876.04,107.99 L876.46,107.99 L876.87,107.99 L877.27,107.99 L877.65,107.99 L878.03,107.99 L878.40,107.99 L878.76,107.99 L879.11,107.99 L879.46,107.99 L879.79,107.99 L880.11,107.99 L880.42,107.99 L880.73,107.99 L881.02,107.99 L881.30,108.00 L881.57,108.00 L881.84,108.00 L882.09,108.00 L882.33,108.00 L882.57,108.00 L882.79,108.00 L883.00,108.00 L883.20,108.00 L883.39,108.00 L883.58,108.00 L883.75,108.00 L883.91,108.00 L884.05,108.00 L884.19,108.00 L884.32,108.00 L884.44,108.00 L884.54,108.00 L884.64,108.00 L884.72,108.00 L884.80,108.00 L884.86,108.00 L884.91,108.00 L884.95,108.00 L884.98,108.00 L884.99,108.00 L885.00,108.00" fill="none" stroke="#eeeeee" stroke-width="1.7"/><path d="M1199.00,401.00 L1199.40,401.00 L1199.80,401.01 L1200.20,401.02 L1200.59,401.03 L1200.98,401.04 L1201.37,401.06 L1201.75,401.09 L1202.13,401.11 L1202.51,401.14 L1202.88,401.18 L1203.25,401.21 L1203.62,401.25 L1203.98,401.30 L1204.34,401.34 L1204.69,401.39 L1205.05,401.45 L1205.40,401.51 L1205.74,401.57 L1206.09,401.63 L1206.43,401.70 L1206.76,401.77 L1207.10,401.84 L1207.43,401.92 L1207.75,402.00 L1208.08,402.08 L1208.40,402.16 L1208.71,402.25 L1209.03,402.35 L1209.34,402.44 L1209.64,402.54 L1209.95,402.64 L1210.25,402.74 L1210.55,402.85 L1210.84,402.96 L1211.13,403.08 L1211.42,403.19 L1211.70,403.31 L1211.98,403.43 L1212.26,403.56 L1212.54,403.69 L1212.81,403.82 L1213.08,403.95 L1213.34,404.09 L1213.61,404.23 L1213.87,404.37 L1214.12,404.52 L1214.38,404.66 L1214.63,404.82 L1214.87,404.97 L1215.12,405.12 L1215.36,405.28 L1215.60,405.45 L1215.83,405.61 L1216.06,405.78 L1216.29,405.95 L1216.52,406.12 L1216.74,406.29 L1216.96,406.47 L1217.17,406.65 L1217.39,406.83 L1217.60,407.02 L1217.80,407.20 L1218.01,407.39 L1218.21,407.59 L1218.41,407.78 L1218.60,407.98 L1218.80,408.18 L1218.98,408.38 L1219.17,408.58 L1219.35,408.79 L1219.53,409.00 L1219.71,409.21 L1219.89,409.43 L1220.06,409.64 L1220.23,409.86 L1220.39,410.08 L1220.55,410.30 L1220.71,410.53 L1220.87,410.75 L1221.02,410.98 L1221.17,411.22 L1221.32,411.45 L1221.47,411.68 L1221.61,411.92 L1221.75,412.16 L1221.89,412.40 L1222.02,412.65 L1222.15,412.89 L1222.28,413.14 L1222.40,413.39 L1222.53,413.65 L1222.65,413.90 L1222.76,414.16 L1222.88,414.41 L1222.99,414.67 L1223.10,414.93 L1223.20,415.20 L1223.30,415.46 L1223.40,415.73 L1223.50,416.00 L1223.59,416.27 L1223.69,416.54 L1223.77,416.82 L1223.86,417.09 L1223.94,417.37 L1224.02,417.65 L1224.10,417.93 L1224.18,418.22 L1224.25,418.50 L1224.32,418.79 L1224.39,419.07 L1224.45,419.36 L1224.51,419.66 L1224.57,419.95 L1224.63,420.24 L1224.68,420.54 L1224.73,420.84 L1224.78,421.13 L1224.82,421.43 L1224.87,421.74 L1224.91,422.04 L1224.94,422.34 L1224.98,422.65 L1225.01,422.96 L1225.04,423.27 L1225.07,423.58 L1225.09,423.89 L1225.11,424.20 L1225.13,424.51 L1225.15,424.83 L1225.16,425.15 L1225.17,425.46 L1225.18,425.78 L1225.19,426.10 L1225.19,426.42 L1225.19,426.75 L1225.19,427.07 L1225.19,427.39 L1225.18,427.72 L1225.17,428.05 L1225.16,428.38 L1225.15,428.71 L1225.13,429.04 L1225.11,429.37 L1225.09,429.70 L1225.07,430.03 L1225.04,430.37 L1225.01,430.70 L1224.98,431.04 L1224.95,431.38 L1224.91,431.71 L1224.87,432.05 L1224.83,432.39 L1224.79,432.73 L1224.74,433.07 L1224.69,433.42 L1224.64,433.76 L1224.59,434.10 L1224.53,434.45 L1224.47,434.79 L1224.41,435.14 L1224.35,435.48 L1224.28,435.83 L1224.22,436.18 L1224.15,436.53 L1224.07,436.88 L1224.00,437.23 L1223.92,437.58 L1223.84,437.93 L1223.76,438.28 L1223.68,438.63 L1223.59,438.99 L1223.50,439.34 L1223.41,439.69 L1223.32,440.05 L1223.22,440.40 L1223.12,440.76 L1223.02,441.11 L1222.92,441.47 L1222.81,441.82 L1222.71,442.18 L1222.60,442.54 L1222.49,442.89 L1222.37,443.25 L1222.26,443.61 L1222.14,443.97 L1222.02,444.33 L1221.89,444.69 L1221.77,445.04 L1221.64,445.40 L1221.51,445.76 L1221.38,446.12 L1221.25,446.48 L1221.11,446.84 L1220.97,447.20 L1220.83,447.56 L1220.69,447.92 L1220.55,448.28 L1220.40,448.64 L1220.25,449.00 L1220.10,449.36 L1219.95,449.72 L1219.79,450.08 L1219.63,450.44 L1219.47,450.80 L1219.31,451.16 L1219.15,451.52 L1218.98,451.88 L1218.81,452.24 L1218.64,452.60 L1218.47,452.96 L1218.30,453.31 L1218.12,453.67 L1217.94,454.03 L1217.76,454.39 L1217.58,454.75 L1217.40,455.11 L1217.21,455.46 L1217.02,455.82 L1216.83,456.18 L1216.64,456.53 L1216.44,456.89 L1216.25,457.24 L1216.05,457.60 L1215.85,457.95 L1215.65,458.31 L1215.44,458.66 L1215.24,459.01 L1215.03,459.37 L1214.82,459.72 L1214.60,460.07 L1214.39,460.42 L1214.17,460.77 L1213.96,461.12 L1213.74,461.47 L1213.51,461.82 L1213.29,462.17 L1213.07,462.52 L1212.84,462.86 L1212.61,463.21 L1212.38,463.55 L1212.14,463.90 L1211.91,464.24 L1211.67,464.58 L1211.43,464.93 L1211.19,465.27 L1210.95,465.61 L1210.71,465.95 L1210.46,466.29 L1210.21,466.62 L1209.96,466.96 L1209.71,467.30 L1209.46,467.63 L1209.20,467.97 L1208.94,468.30 L1208.68,468.63 L1208.42,468.96 L1208.16,469.29 L1207.90,469.62 L1207.63,469.95 L1207.36,470.28 L1207.09,470.61 L1206.82,470.93 L1206.55,471.25 L1206.28,471.58 L1206.00,471.90 L1205.72,472.22 L1205.44,472.54 L1205.16,472.85 L1204.88,473.17 L1204.59,473.49 L1204.31,473.80 L1204.02,474.11 L1203.73,474.42 L1203.44,474.73 L1203.14,475.04 L1202.85,475.35 L1202.55,475.66 L1202.25,475.96 L1201.95,476.26 L1201.65,476.57 L1201.35,476.87 L1201.04,477.16 L1200.74,477.46 L1200.43,477.76 L1200.12,478.05 L1199.81,478.34 L1199.50,478.64 L1199.18,478.93 L1198.87,479.21 L1198.55,479.50 L1198.23,479.78 L1197.91,480.07 L1197.59,480.35 L1197.27,480.63 L1196.94,480.91 L1196.61,481.18 L1196.29,481.46 L1195.96,481.73 L1195.62,482.00 L1195.29,482.27 L1194.96,482.54 L1194.62,482.80 L1194.29,483.07 L1193.95,483.33 L1193.61,483.59 L1193.27,483.84 L1192.92,484.10 L1192.58,484.35 L1192.23,484.61 L1191.89,484.86 L1191.54,485.11 L1191.19,485.35 L1190.83,485.60 L1190.48,485.84 L1190.13,486.08 L1189.77,486.32 L1189.41,486.55 L1189.06,486.78 L1188.70,487.02 L1188.33,487.25 L1187.97,487.47 L1187.61,487.70 L1187.24,487.92 L1186.88,488.14 L1186.51,488.36 L1186.14,488.57 L1185.77,488.79 L1185.40,489.00 L1185.02,489.21 L1184.65,489.42 L1184.27,489.62 L1183.89,489.82 L1183.52,490.02 L1183.14,490.22 L1182.76,490.41 L1182.37,490.61 L1181.99,490.80 L1181.60,490.98 L1181.22,491.17 L1180.83,491.35 L1180.44,491.53 L1180.05,491.71 L1179.66,491.88 L1179.27,492.05 L1178.88,492.22 L1178.48,492.39 L1178.08,492.55 L1177.69,492.72 L1177.29,492.88 L1176.89,493.03 L1176.49,493.18 L1176.09,493.34 L1175.68,493.48 L1175.28,493.63 L1174.87,493.77 L1174.47,493.91 L1174.06,494.05 L1173.65,494.18 L1173.24,494.31 L1172.83,494.44 L1172.42,494.57 L1172.01,494.69 L1171.59,494.81 L1171.18,494.92 L1170.76,495.04 L1170.34,495.15 L1169.92,495.26 L1169.50,495.36 L1169.08,495.46 L1168.66,495.56 L1168.24,495.65 L1167.81,495.75 L1167.39,495.84 L1166.96,495.92 L1166.54,496.00 L1166.11,496.08 L1165.68,496.16 L1165.25,496.23 L1164.82,496.30 L1164.39,496.37 L1163.95,496.43 L1163.52,496.49 L1163.09,496.55 L1162.65,496.61 L1162.21,496.66 L1161.77,496.70 L1161.34,496.75 L1160.90,496.79 L1160.46,496.82 L1160.01,496.86 L1159.57,496.89 L1159.13,496.91 L1158.68,496.94 L1158.24,496.96 L1157.79,496.97 L1157.35,496.98 L1156.90,496.99 L1156.45,497.00 L1156.00,497.00" fill="none" stroke="#000" stroke-width="2.1" transform="translate(2.8,2.5)" opacity="0.95"/><path d="M1199.00,401.00 L1199.40,401.00 L1199.80,401.01 L1200.20,401.02 L1200.59,401.03 L1200.98,401.04 L1201.37,401.06 L1201.75,401.09 L1202.13,401.11 L1202.51,401.14 L1202.88,401.18 L1203.25,401.21 L1203.62,401.25 L1203.98,401.30 L1204.34,401.34 L1204.69,401.39 L1205.05,401.45 L1205.40,401.51 L1205.74,401.57 L1206.09,401.63 L1206.43,401.70 L1206.76,401.77 L1207.10,401.84 L1207.43,401.92 L1207.75,402.00 L1208.08,402.08 L1208.40,402.16 L1208.71,402.25 L1209.03,402.35 L1209.34,402.44 L1209.64,402.54 L1209.95,402.64 L1210.25,402.74 L1210.55,402.85 L1210.84,402.96 L1211.13,403.08 L1211.42,403.19 L1211.70,403.31 L1211.98,403.43 L1212.26,403.56 L1212.54,403.69 L1212.81,403.82 L1213.08,403.95 L1213.34,404.09 L1213.61,404.23 L1213.87,404.37 L1214.12,404.52 L1214.38,404.66 L1214.63,404.82 L1214.87,404.97 L1215.12,405.12 L1215.36,405.28 L1215.60,405.45 L1215.83,405.61 L1216.06,405.78 L1216.29,405.95 L1216.52,406.12 L1216.74,406.29 L1216.96,406.47 L1217.17,406.65 L1217.39,406.83 L1217.60,407.02 L1217.80,407.20 L1218.01,407.39 L1218.21,407.59 L1218.41,407.78 L1218.60,407.98 L1218.80,408.18 L1218.98,408.38 L1219.17,408.58 L1219.35,408.79 L1219.53,409.00 L1219.71,409.21 L1219.89,409.43 L1220.06,409.64 L1220.23,409.86 L1220.39,410.08 L1220.55,410.30 L1220.71,410.53 L1220.87,410.75 L1221.02,410.98 L1221.17,411.22 L1221.32,411.45 L1221.47,411.68 L1221.61,411.92 L1221.75,412.16 L1221.89,412.40 L1222.02,412.65 L1222.15,412.89 L1222.28,413.14 L1222.40,413.39 L1222.53,413.65 L1222.65,413.90 L1222.76,414.16 L1222.88,414.41 L1222.99,414.67 L1223.10,414.93 L1223.20,415.20 L1223.30,415.46 L1223.40,415.73 L1223.50,416.00 L1223.59,416.27 L1223.69,416.54 L1223.77,416.82 L1223.86,417.09 L1223.94,417.37 L1224.02,417.65 L1224.10,417.93 L1224.18,418.22 L1224.25,418.50 L1224.32,418.79 L1224.39,419.07 L1224.45,419.36 L1224.51,419.66 L1224.57,419.95 L1224.63,420.24 L1224.68,420.54 L1224.73,420.84 L1224.78,421.13 L1224.82,421.43 L1224.87,421.74 L1224.91,422.04 L1224.94,422.34 L1224.98,422.65 L1225.01,422.96 L1225.04,423.27 L1225.07,423.58 L1225.09,423.89 L1225.11,424.20 L1225.13,424.51 L1225.15,424.83 L1225.16,425.15 L1225.17,425.46 L1225.18,425.78 L1225.19,426.10 L1225.19,426.42 L1225.19,426.75 L1225.19,427.07 L1225.19,427.39 L1225.18,427.72 L1225.17,428.05 L1225.16,428.38 L1225.15,428.71 L1225.13,429.04 L1225.11,429.37 L1225.09,429.70 L1225.07,430.03 L1225.04,430.37 L1225.01,430.70 L1224.98,431.04 L1224.95,431.38 L1224.91,431.71 L1224.87,432.05 L1224.83,432.39 L1224.79,432.73 L1224.74,433.07 L1224.69,433.42 L1224.64,433.76 L1224.59,434.10 L1224.53,434.45 L1224.47,434.79 L1224.41,435.14 L1224.35,435.48 L1224.28,435.83 L1224.22,436.18 L1224.15,436.53 L1224.07,436.88 L1224.00,437.23 L1223.92,437.58 L1223.84,437.93 L1223.76,438.28 L1223.68,438.63 L1223.59,438.99 L1223.50,439.34 L1223.41,439.69 L1223.32,440.05 L1223.22,440.40 L1223.12,440.76 L1223.02,441.11 L1222.92,441.47 L1222.81,441.82 L1222.71,442.18 L1222.60,442.54 L1222.49,442.89 L1222.37,443.25 L1222.26,443.61 L1222.14,443.97 L1222.02,444.33 L1221.89,444.69 L1221.77,445.04 L1221.64,445.40 L1221.51,445.76 L1221.38,446.12 L1221.25,446.48 L1221.11,446.84 L1220.97,447.20 L1220.83,447.56 L1220.69,447.92 L1220.55,448.28 L1220.40,448.64 L1220.25,449.00 L1220.10,449.36 L1219.95,449.72 L1219.79,450.08 L1219.63,450.44 L1219.47,450.80 L1219.31,451.16 L1219.15,451.52 L1218.98,451.88 L1218.81,452.24 L1218.64,452.60 L1218.47,452.96 L1218.30,453.31 L1218.12,453.67 L1217.94,454.03 L1217.76,454.39 L1217.58,454.75 L1217.40,455.11 L1217.21,455.46 L1217.02,455.82 L1216.83,456.18 L1216.64,456.53 L1216.44,456.89 L1216.25,457.24 L1216.05,457.60 L1215.85,457.95 L1215.65,458.31 L1215.44,458.66 L1215.24,459.01 L1215.03,459.37 L1214.82,459.72 L1214.60,460.07 L1214.39,460.42 L1214.17,460.77 L1213.96,461.12 L1213.74,461.47 L1213.51,461.82 L1213.29,462.17 L1213.07,462.52 L1212.84,462.86 L1212.61,463.21 L1212.38,463.55 L1212.14,463.90 L1211.91,464.24 L1211.67,464.58 L1211.43,464.93 L1211.19,465.27 L1210.95,465.61 L1210.71,465.95 L1210.46,466.29 L1210.21,466.62 L1209.96,466.96 L1209.71,467.30 L1209.46,467.63 L1209.20,467.97 L1208.94,468.30 L1208.68,468.63 L1208.42,468.96 L1208.16,469.29 L1207.90,469.62 L1207.63,469.95 L1207.36,470.28 L1207.09,470.61 L1206.82,470.93 L1206.55,471.25 L1206.28,471.58 L1206.00,471.90 L1205.72,472.22 L1205.44,472.54 L1205.16,472.85 L1204.88,473.17 L1204.59,473.49 L1204.31,473.80 L1204.02,474.11 L1203.73,474.42 L1203.44,474.73 L1203.14,475.04 L1202.85,475.35 L1202.55,475.66 L1202.25,475.96 L1201.95,476.26 L1201.65,476.57 L1201.35,476.87 L1201.04,477.16 L1200.74,477.46 L1200.43,477.76 L1200.12,478.05 L1199.81,478.34 L1199.50,478.64 L1199.18,478.93 L1198.87,479.21 L1198.55,479.50 L1198.23,479.78 L1197.91,480.07 L1197.59,480.35 L1197.27,480.63 L1196.94,480.91 L1196.61,481.18 L1196.29,481.46 L1195.96,481.73 L1195.62,482.00 L1195.29,482.27 L1194.96,482.54 L1194.62,482.80 L1194.29,483.07 L1193.95,483.33 L1193.61,483.59 L1193.27,483.84 L1192.92,484.10 L1192.58,484.35 L1192.23,484.61 L1191.89,484.86 L1191.54,485.11 L1191.19,485.35 L1190.83,485.60 L1190.48,485.84 L1190.13,486.08 L1189.77,486.32 L1189.41,486.55 L1189.06,486.78 L1188.70,487.02 L1188.33,487.25 L1187.97,487.47 L1187.61,487.70 L1187.24,487.92 L1186.88,488.14 L1186.51,488.36 L1186.14,488.57 L1185.77,488.79 L1185.40,489.00 L1185.02,489.21 L1184.65,489.42 L1184.27,489.62 L1183.89,489.82 L1183.52,490.02 L1183.14,490.22 L1182.76,490.41 L1182.37,490.61 L1181.99,490.80 L1181.60,490.98 L1181.22,491.17 L1180.83,491.35 L1180.44,491.53 L1180.05,491.71 L1179.66,491.88 L1179.27,492.05 L1178.88,492.22 L1178.48,492.39 L1178.08,492.55 L1177.69,492.72 L1177.29,492.88 L1176.89,493.03 L1176.49,493.18 L1176.09,493.34 L1175.68,493.48 L1175.28,493.63 L1174.87,493.77 L1174.47,493.91 L1174.06,494.05 L1173.65,494.18 L1173.24,494.31 L1172.83,494.44 L1172.42,494.57 L1172.01,494.69 L1171.59,494.81 L1171.18,494.92 L1170.76,495.04 L1170.34,495.15 L1169.92,495.26 L1169.50,495.36 L1169.08,495.46 L1168.66,495.56 L1168.24,495.65 L1167.81,495.75 L1167.39,495.84 L1166.96,495.92 L1166.54,496.00 L1166.11,496.08 L1165.68,496.16 L1165.25,496.23 L1164.82,496.30 L1164.39,496.37 L1163.95,496.43 L1163.52,496.49 L1163.09,496.55 L1162.65,496.61 L1162.21,496.66 L1161.77,496.70 L1161.34,496.75 L1160.90,496.79 L1160.46,496.82 L1160.01,496.86 L1159.57,496.89 L1159.13,496.91 L1158.68,496.94 L1158.24,496.96 L1157.79,496.97 L1157.35,496.98 L1156.90,496.99 L1156.45,497.00 L1156.00,497.00" fill="none" stroke="#eeeeee" stroke-width="1.7"/><path d="M1157.00,497.00 L1156.98,497.00 L1156.92,497.00 L1156.82,497.00 L1156.68,497.00 L1156.50,497.00 L1156.29,497.00 L1156.03,497.00 L1155.74,497.00 L1155.40,497.00 L1155.03,497.00 L1154.62,497.00 L1154.17,497.00 L1153.69,497.00 L1153.17,497.00 L1152.61,497.00 L1152.01,497.00 L1151.38,497.00 L1150.71,497.00 L1150.00,497.00 L1149.26,497.00 L1148.48,497.00 L1147.66,497.00 L1146.81,497.00 L1145.93,497.00 L1145.01,497.00 L1144.05,497.00 L1143.06,497.00 L1142.03,497.00 L1140.97,497.00 L1139.88,497.00 L1138.75,497.00 L1137.59,497.00 L1136.39,497.00 L1135.16,497.00 L1133.90,497.00 L1132.60,497.00 L1131.28,497.00 L1129.92,497.00 L1128.52,497.00 L1127.10,497.00 L1125.64,497.00 L1124.15,497.00 L1122.63,497.00 L1121.07,497.00 L1119.49,497.00 L1117.88,497.00 L1116.23,497.00 L1114.55,497.00 L1112.85,497.00 L1111.11,497.00 L1109.34,497.00 L1107.55,497.00 L1105.72,497.00 L1103.86,497.00 L1101.98,497.00 L1100.06,497.00 L1098.12,497.00 L1096.15,497.00 L1094.15,497.00 L1092.12,497.00 L1090.06,497.00 L1087.98,497.00 L1085.87,497.00 L1083.73,497.00 L1081.56,497.00 L1079.37,497.00 L1077.15,497.00 L1074.90,497.00 L1072.62,497.00 L1070.33,497.00 L1068.00,497.00 L1065.65,497.00 L1063.27,497.00 L1060.87,497.00 L1058.44,497.00 L1055.99,497.00 L1053.51,497.00 L1051.01,497.00 L1048.48,497.00 L1045.93,497.00 L1043.35,497.00 L1040.75,497.00 L1038.13,497.00 L1035.49,497.00 L1032.82,497.00 L1030.12,497.00 L1027.41,497.00 L1024.67,497.00 L1021.91,497.00 L1019.13,497.00 L1016.32,497.00 L1013.50,497.00 L1010.65,497.00 L1007.78,497.00 L1004.89,497.00 L1001.98,497.00 L999.05,497.00 L996.09,497.00 L993.12,497.00 L990.12,497.00 L987.11,497.00 L984.08,497.00 L981.02,497.00 L977.95,497.00 L974.86,497.00 L971.75,497.00 L968.62,497.00 L965.47,497.00 L962.30,497.00 L959.12,497.00 L955.92,497.00 L952.70,497.00 L949.46,497.00 L946.20,497.00 L942.93,497.00 L939.64,497.00 L936.33,497.00 L933.01,497.00 L929.67,497.00 L926.31,497.00 L922.94,497.00 L919.55,497.00 L916.15,497.00 L912.73,497.00 L909.29,497.00 L905.85,497.00 L902.38,497.00 L898.90,497.00 L895.41,497.00 L891.90,497.00 L888.38,497.00 L884.85,497.00 L881.30,497.00 L877.73,497.00 L874.16,497.00 L870.57,497.00 L866.97,497.00 L863.36,497.00 L859.73,497.00 L856.09,497.00 L852.44,497.00 L848.78,497.00 L845.10,497.00 L841.42,497.00 L837.72,497.00 L834.01,497.00 L830.30,497.00 L826.57,497.00 L822.83,497.00 L819.08,497.00 L815.32,497.00 L811.55,497.00 L807.77,497.00 L803.98,497.00 L800.18,497.00 L796.38,497.00 L792.56,497.00 L788.74,497.00 L784.90,497.00 L781.06,497.00 L777.22,497.00 L773.36,497.00 L769.49,497.00 L765.62,497.00 L761.74,497.00 L757.86,497.00 L753.97,497.00 L750.07,497.00 L746.16,497.00 L742.25,497.00 L738.33,497.00 L734.41,497.00 L730.48,497.00 L726.54,497.00 L722.60,497.00 L718.66,497.00 L714.71,497.00 L710.75,497.00 L706.80,497.00 L702.83,497.00 L698.87,497.00 L694.90,497.00 L690.92,497.00 L686.94,497.00 L682.96,497.00 L678.98,497.00 L674.99,497.00 L671.00,497.00 L667.01,497.00 L663.02,497.00 L659.02,497.00 L655.02,497.00 L651.02,497.00 L647.02,497.00 L643.02,497.00 L639.02,497.00 L635.01,497.00 L631.01,497.00 L627.00,497.00 L623.00,497.00 L619.00,497.00 L614.99,497.00 L610.99,497.00 L606.98,497.00 L602.98,497.00 L598.98,497.00 L594.98,497.00 L590.98,497.00 L586.98,497.00 L582.98,497.00 L578.99,497.00 L575.00,497.00 L571.01,497.00 L567.02,497.00 L563.04,497.00 L559.06,497.00 L555.08,497.00 L551.10,497.00 L547.13,497.00 L543.17,497.00 L539.20,497.00 L535.25,497.00 L531.29,497.00 L527.34,497.00 L523.40,497.00 L519.46,497.00 L515.52,497.00 L511.59,497.00 L507.67,497.00 L503.75,497.00 L499.84,497.00 L495.93,497.00 L492.03,497.00 L488.14,497.00 L484.26,497.00 L480.38,497.00 L476.51,497.00 L472.64,497.00 L468.78,497.00 L464.94,497.00 L461.10,497.00 L457.26,497.00 L453.44,497.00 L449.62,497.00 L445.82,497.00 L442.02,497.00 L438.23,497.00 L434.45,497.00 L430.68,497.00 L426.92,497.00 L423.17,497.00 L419.43,497.00 L415.70,497.00 L411.99,497.00 L408.28,497.00 L404.58,497.00 L400.90,497.00 L397.22,497.00 L393.56,497.00 L389.91,497.00 L386.27,497.00 L382.64,497.00 L379.03,497.00 L375.43,497.00 L371.84,497.00 L368.27,497.00 L364.70,497.00 L361.15,497.00 L357.62,497.00 L354.10,497.00 L350.59,497.00 L347.10,497.00 L343.62,497.00 L340.15,497.00 L336.71,497.00 L333.27,497.00 L329.85,497.00 L326.45,497.00 L323.06,497.00 L319.69,497.00 L316.33,497.00 L312.99,497.00 L309.67,497.00 L306.36,497.00 L303.07,497.00 L299.80,497.00 L296.54,497.00 L293.30,497.00 L290.08,497.00 L286.88,497.00 L283.70,497.00 L280.53,497.00 L277.38,497.00 L274.25,497.00 L271.14,497.00 L268.05,497.00 L264.98,497.00 L261.92,497.00 L258.89,497.00 L255.88,497.00 L252.88,497.00 L249.91,497.00 L246.95,497.00 L244.02,497.00 L241.11,497.00 L238.22,497.00 L235.35,497.00 L232.50,497.00 L229.68,497.00 L226.87,497.00 L224.09,497.00 L221.33,497.00 L218.59,497.00 L215.88,497.00 L213.18,497.00 L210.51,497.00 L207.87,497.00 L205.25,497.00 L202.65,497.00 L200.07,497.00 L197.52,497.00 L194.99,497.00 L192.49,497.00 L190.01,497.00 L187.56,497.00 L185.13,497.00 L182.73,497.00 L180.35,497.00 L178.00,497.00 L175.67,497.00 L173.38,497.00 L171.10,497.00 L168.85,497.00 L166.63,497.00 L164.44,497.00 L162.27,497.00 L160.13,497.00 L158.02,497.00 L155.94,497.00 L153.88,497.00 L151.85,497.00 L149.85,497.00 L147.88,497.00 L145.94,497.00 L144.02,497.00 L142.14,497.00 L140.28,497.00 L138.45,497.00 L136.66,497.00 L134.89,497.00 L133.15,497.00 L131.45,497.00 L129.77,497.00 L128.12,497.00 L126.51,497.00 L124.93,497.00 L123.37,497.00 L121.85,497.00 L120.36,497.00 L118.90,497.00 L117.48,497.00 L116.08,497.00 L114.72,497.00 L113.40,497.00 L112.10,497.00 L110.84,497.00 L109.61,497.00 L108.41,497.00 L107.25,497.00 L106.12,497.00 L105.03,497.00 L103.97,497.00 L102.94,497.00 L101.95,497.00 L100.99,497.00 L100.07,497.00 L99.19,497.00 L98.34,497.00 L97.52,497.00 L96.74,497.00 L96.00,497.00 L95.29,497.00 L94.62,497.00 L93.99,497.00 L93.39,497.00 L92.83,497.00 L92.31,497.00 L91.83,497.00 L91.38,497.00 L90.97,497.00 L90.60,497.00 L90.26,497.00 L89.97,497.00 L89.71,497.00 L89.50,497.00 L89.32,497.00 L89.18,497.00 L89.08,497.00 L89.02,497.00 L89.00,497.00" fill="none" stroke="#000" stroke-width="2.1" transform="translate(2.8,2.5)" opacity="0.95"/><path d="M1157.00,497.00 L1156.98,497.00 L1156.92,497.00 L1156.82,497.00 L1156.68,497.00 L1156.50,497.00 L1156.29,497.00 L1156.03,497.00 L1155.74,497.00 L1155.40,497.00 L1155.03,497.00 L1154.62,497.00 L1154.17,497.00 L1153.69,497.00 L1153.17,497.00 L1152.61,497.00 L1152.01,497.00 L1151.38,497.00 L1150.71,497.00 L1150.00,497.00 L1149.26,497.00 L1148.48,497.00 L1147.66,497.00 L1146.81,497.00 L1145.93,497.00 L1145.01,497.00 L1144.05,497.00 L1143.06,497.00 L1142.03,497.00 L1140.97,497.00 L1139.88,497.00 L1138.75,497.00 L1137.59,497.00 L1136.39,497.00 L1135.16,497.00 L1133.90,497.00 L1132.60,497.00 L1131.28,497.00 L1129.92,497.00 L1128.52,497.00 L1127.10,497.00 L1125.64,497.00 L1124.15,497.00 L1122.63,497.00 L1121.07,497.00 L1119.49,497.00 L1117.88,497.00 L1116.23,497.00 L1114.55,497.00 L1112.85,497.00 L1111.11,497.00 L1109.34,497.00 L1107.55,497.00 L1105.72,497.00 L1103.86,497.00 L1101.98,497.00 L1100.06,497.00 L1098.12,497.00 L1096.15,497.00 L1094.15,497.00 L1092.12,497.00 L1090.06,497.00 L1087.98,497.00 L1085.87,497.00 L1083.73,497.00 L1081.56,497.00 L1079.37,497.00 L1077.15,497.00 L1074.90,497.00 L1072.62,497.00 L1070.33,497.00 L1068.00,497.00 L1065.65,497.00 L1063.27,497.00 L1060.87,497.00 L1058.44,497.00 L1055.99,497.00 L1053.51,497.00 L1051.01,497.00 L1048.48,497.00 L1045.93,497.00 L1043.35,497.00 L1040.75,497.00 L1038.13,497.00 L1035.49,497.00 L1032.82,497.00 L1030.12,497.00 L1027.41,497.00 L1024.67,497.00 L1021.91,497.00 L1019.13,497.00 L1016.32,497.00 L1013.50,497.00 L1010.65,497.00 L1007.78,497.00 L1004.89,497.00 L1001.98,497.00 L999.05,497.00 L996.09,497.00 L993.12,497.00 L990.12,497.00 L987.11,497.00 L984.08,497.00 L981.02,497.00 L977.95,497.00 L974.86,497.00 L971.75,497.00 L968.62,497.00 L965.47,497.00 L962.30,497.00 L959.12,497.00 L955.92,497.00 L952.70,497.00 L949.46,497.00 L946.20,497.00 L942.93,497.00 L939.64,497.00 L936.33,497.00 L933.01,497.00 L929.67,497.00 L926.31,497.00 L922.94,497.00 L919.55,497.00 L916.15,497.00 L912.73,497.00 L909.29,497.00 L905.85,497.00 L902.38,497.00 L898.90,497.00 L895.41,497.00 L891.90,497.00 L888.38,497.00 L884.85,497.00 L881.30,497.00 L877.73,497.00 L874.16,497.00 L870.57,497.00 L866.97,497.00 L863.36,497.00 L859.73,497.00 L856.09,497.00 L852.44,497.00 L848.78,497.00 L845.10,497.00 L841.42,497.00 L837.72,497.00 L834.01,497.00 L830.30,497.00 L826.57,497.00 L822.83,497.00 L819.08,497.00 L815.32,497.00 L811.55,497.00 L807.77,497.00 L803.98,497.00 L800.18,497.00 L796.38,497.00 L792.56,497.00 L788.74,497.00 L784.90,497.00 L781.06,497.00 L777.22,497.00 L773.36,497.00 L769.49,497.00 L765.62,497.00 L761.74,497.00 L757.86,497.00 L753.97,497.00 L750.07,497.00 L746.16,497.00 L742.25,497.00 L738.33,497.00 L734.41,497.00 L730.48,497.00 L726.54,497.00 L722.60,497.00 L718.66,497.00 L714.71,497.00 L710.75,497.00 L706.80,497.00 L702.83,497.00 L698.87,497.00 L694.90,497.00 L690.92,497.00 L686.94,497.00 L682.96,497.00 L678.98,497.00 L674.99,497.00 L671.00,497.00 L667.01,497.00 L663.02,497.00 L659.02,497.00 L655.02,497.00 L651.02,497.00 L647.02,497.00 L643.02,497.00 L639.02,497.00 L635.01,497.00 L631.01,497.00 L627.00,497.00 L623.00,497.00 L619.00,497.00 L614.99,497.00 L610.99,497.00 L606.98,497.00 L602.98,497.00 L598.98,497.00 L594.98,497.00 L590.98,497.00 L586.98,497.00 L582.98,497.00 L578.99,497.00 L575.00,497.00 L571.01,497.00 L567.02,497.00 L563.04,497.00 L559.06,497.00 L555.08,497.00 L551.10,497.00 L547.13,497.00 L543.17,497.00 L539.20,497.00 L535.25,497.00 L531.29,497.00 L527.34,497.00 L523.40,497.00 L519.46,497.00 L515.52,497.00 L511.59,497.00 L507.67,497.00 L503.75,497.00 L499.84,497.00 L495.93,497.00 L492.03,497.00 L488.14,497.00 L484.26,497.00 L480.38,497.00 L476.51,497.00 L472.64,497.00 L468.78,497.00 L464.94,497.00 L461.10,497.00 L457.26,497.00 L453.44,497.00 L449.62,497.00 L445.82,497.00 L442.02,497.00 L438.23,497.00 L434.45,497.00 L430.68,497.00 L426.92,497.00 L423.17,497.00 L419.43,497.00 L415.70,497.00 L411.99,497.00 L408.28,497.00 L404.58,497.00 L400.90,497.00 L397.22,497.00 L393.56,497.00 L389.91,497.00 L386.27,497.00 L382.64,497.00 L379.03,497.00 L375.43,497.00 L371.84,497.00 L368.27,497.00 L364.70,497.00 L361.15,497.00 L357.62,497.00 L354.10,497.00 L350.59,497.00 L347.10,497.00 L343.62,497.00 L340.15,497.00 L336.71,497.00 L333.27,497.00 L329.85,497.00 L326.45,497.00 L323.06,497.00 L319.69,497.00 L316.33,497.00 L312.99,497.00 L309.67,497.00 L306.36,497.00 L303.07,497.00 L299.80,497.00 L296.54,497.00 L293.30,497.00 L290.08,497.00 L286.88,497.00 L283.70,497.00 L280.53,497.00 L277.38,497.00 L274.25,497.00 L271.14,497.00 L268.05,497.00 L264.98,497.00 L261.92,497.00 L258.89,497.00 L255.88,497.00 L252.88,497.00 L249.91,497.00 L246.95,497.00 L244.02,497.00 L241.11,497.00 L238.22,497.00 L235.35,497.00 L232.50,497.00 L229.68,497.00 L226.87,497.00 L224.09,497.00 L221.33,497.00 L218.59,497.00 L215.88,497.00 L213.18,497.00 L210.51,497.00 L207.87,497.00 L205.25,497.00 L202.65,497.00 L200.07,497.00 L197.52,497.00 L194.99,497.00 L192.49,497.00 L190.01,497.00 L187.56,497.00 L185.13,497.00 L182.73,497.00 L180.35,497.00 L178.00,497.00 L175.67,497.00 L173.38,497.00 L171.10,497.00 L168.85,497.00 L166.63,497.00 L164.44,497.00 L162.27,497.00 L160.13,497.00 L158.02,497.00 L155.94,497.00 L153.88,497.00 L151.85,497.00 L149.85,497.00 L147.88,497.00 L145.94,497.00 L144.02,497.00 L142.14,497.00 L140.28,497.00 L138.45,497.00 L136.66,497.00 L134.89,497.00 L133.15,497.00 L131.45,497.00 L129.77,497.00 L128.12,497.00 L126.51,497.00 L124.93,497.00 L123.37,497.00 L121.85,497.00 L120.36,497.00 L118.90,497.00 L117.48,497.00 L116.08,497.00 L114.72,497.00 L113.40,497.00 L112.10,497.00 L110.84,497.00 L109.61,497.00 L108.41,497.00 L107.25,497.00 L106.12,497.00 L105.03,497.00 L103.97,497.00 L102.94,497.00 L101.95,497.00 L100.99,497.00 L100.07,497.00 L99.19,497.00 L98.34,497.00 L97.52,497.00 L96.74,497.00 L96.00,497.00 L95.29,497.00 L94.62,497.00 L93.99,497.00 L93.39,497.00 L92.83,497.00 L92.31,497.00 L91.83,497.00 L91.38,497.00 L90.97,497.00 L90.60,497.00 L90.26,497.00 L89.97,497.00 L89.71,497.00 L89.50,497.00 L89.32,497.00 L89.18,497.00 L89.08,497.00 L89.02,497.00 L89.00,497.00" fill="none" stroke="#eeeeee" stroke-width="1.7"/><path d="M90.00,497.00 L89.62,496.99 L89.24,496.98 L88.86,496.95 L88.49,496.91 L88.11,496.85 L87.74,496.79 L87.37,496.71 L87.00,496.63 L86.64,496.53 L86.28,496.42 L85.91,496.30 L85.56,496.16 L85.20,496.02 L84.84,495.87 L84.49,495.70 L84.14,495.52 L83.79,495.34 L83.44,495.14 L83.10,494.93 L82.75,494.71 L82.41,494.48 L82.07,494.24 L81.74,493.99 L81.40,493.72 L81.07,493.45 L80.74,493.17 L80.41,492.88 L80.08,492.57 L79.76,492.26 L79.43,491.93 L79.11,491.60 L78.79,491.26 L78.48,490.90 L78.16,490.54 L77.85,490.17 L77.54,489.78 L77.23,489.39 L76.92,488.99 L76.62,488.57 L76.31,488.15 L76.01,487.72 L75.71,487.28 L75.42,486.83 L75.12,486.37 L74.83,485.90 L74.54,485.42 L74.25,484.94 L73.96,484.44 L73.68,483.94 L73.39,483.42 L73.11,482.90 L72.83,482.37 L72.56,481.83 L72.28,481.28 L72.01,480.72 L71.74,480.15 L71.47,479.58 L71.20,479.00 L70.94,478.40 L70.67,477.80 L70.41,477.19 L70.15,476.58 L69.90,475.95 L69.64,475.32 L69.39,474.68 L69.14,474.03 L68.89,473.37 L68.64,472.71 L68.40,472.04 L68.15,471.35 L67.91,470.67 L67.67,469.97 L67.44,469.27 L67.20,468.56 L66.97,467.84 L66.74,467.11 L66.51,466.38 L66.28,465.64 L66.06,464.89 L65.83,464.14 L65.61,463.37 L65.39,462.61 L65.17,461.83 L64.96,461.05 L64.75,460.26 L64.53,459.46 L64.32,458.66 L64.12,457.85 L63.91,457.03 L63.71,456.21 L63.51,455.38 L63.31,454.54 L63.11,453.70 L62.91,452.85 L62.72,451.99 L62.53,451.13 L62.34,450.26 L62.15,449.39 L61.97,448.51 L61.78,447.62 L61.60,446.73 L61.42,445.84 L61.24,444.93 L61.07,444.02 L60.89,443.11 L60.72,442.19 L60.55,441.26 L60.38,440.33 L60.22,439.39 L60.05,438.45 L59.89,437.50 L59.73,436.55 L59.57,435.59 L59.41,434.63 L59.26,433.66 L59.11,432.69 L58.96,431.71 L58.81,430.73 L58.66,429.74 L58.52,428.74 L58.38,427.75 L58.23,426.74 L58.10,425.74 L57.96,424.73 L57.82,423.71 L57.69,422.69 L57.56,421.66 L57.43,420.63 L57.31,419.60 L57.18,418.56 L57.06,417.52 L56.94,416.47 L56.82,415.42 L56.70,414.37 L56.58,413.31 L56.47,412.25 L56.36,411.19 L56.25,410.12 L56.14,409.04 L56.04,407.97 L55.93,406.89 L55.83,405.80 L55.73,404.72 L55.64,403.63 L55.54,402.53 L55.45,401.44 L55.35,400.33 L55.26,399.23 L55.18,398.13 L55.09,397.02 L55.01,395.90 L54.92,394.79 L54.84,393.67 L54.77,392.55 L54.69,391.43 L54.61,390.30 L54.54,389.17 L54.47,388.04 L54.40,386.90 L54.34,385.77 L54.27,384.63 L54.21,383.49 L54.15,382.34 L54.09,381.20 L54.03,380.05 L53.98,378.90 L53.92,377.75 L53.87,376.60 L53.82,375.44 L53.78,374.28 L53.73,373.12 L53.69,371.96 L53.65,370.80 L53.61,369.64 L53.57,368.47 L53.53,367.30 L53.50,366.13 L53.47,364.96 L53.44,363.79 L53.41,362.62 L53.38,361.45 L53.36,360.27 L53.34,359.10 L53.32,357.92 L53.30,356.74 L53.28,355.56 L53.27,354.38 L53.25,353.20 L53.24,352.02 L53.23,350.84 L53.23,349.66 L53.22,348.47 L53.22,347.29 L53.22,346.11 L53.22,344.92 L53.22,343.74 L53.22,342.55 L53.23,341.37 L53.24,340.18 L53.25,339.00 L53.26,337.82 L53.28,336.63 L53.29,335.45 L53.31,334.26 L53.33,333.08 L53.35,331.89 L53.38,330.71 L53.40,329.53 L53.43,328.34 L53.46,327.16 L53.49,325.98 L53.52,324.80 L53.56,323.62 L53.59,322.44 L53.63,321.26 L53.67,320.08 L53.72,318.90 L53.76,317.73 L53.81,316.55 L53.86,315.38 L53.91,314.21 L53.96,313.04 L54.01,311.87 L54.07,310.70 L54.13,309.53 L54.19,308.36 L54.25,307.20 L54.31,306.04 L54.38,304.88 L54.45,303.72 L54.51,302.56 L54.59,301.40 L54.66,300.25 L54.73,299.10 L54.81,297.95 L54.89,296.80 L54.97,295.66 L55.05,294.51 L55.14,293.37 L55.22,292.23 L55.31,291.10 L55.40,289.96 L55.49,288.83 L55.59,287.70 L55.68,286.57 L55.78,285.45 L55.88,284.33 L55.98,283.21 L56.09,282.10 L56.19,280.98 L56.30,279.87 L56.41,278.77 L56.52,277.67 L56.63,276.56 L56.75,275.47 L56.86,274.37 L56.98,273.28 L57.10,272.20 L57.22,271.11 L57.35,270.03 L57.47,268.96 L57.60,267.88 L57.73,266.81 L57.86,265.75 L58.00,264.69 L58.13,263.63 L58.27,262.58 L58.41,261.53 L58.55,260.48 L58.69,259.44 L58.84,258.40 L58.98,257.37 L59.13,256.34 L59.28,255.31 L59.43,254.29 L59.59,253.27 L59.74,252.26 L59.90,251.26 L60.06,250.25 L60.22,249.26 L60.39,248.26 L60.55,247.27 L60.72,246.29 L60.89,245.31 L61.06,244.34 L61.23,243.37 L61.40,242.41 L61.58,241.45 L61.76,240.50 L61.94,239.55 L62.12,238.61 L62.31,237.67 L62.49,236.74 L62.68,235.81 L62.87,234.89 L63.06,233.98 L63.25,233.07 L63.45,232.16 L63.64,231.27 L63.84,230.38 L64.04,229.49 L64.25,228.61 L64.45,227.74 L64.66,226.87 L64.87,226.01 L65.08,225.15 L65.29,224.30 L65.50,223.46 L65.72,222.62 L65.93,221.79 L66.15,220.97 L66.37,220.15 L66.60,219.34 L66.82,218.54 L67.05,217.74 L67.28,216.95 L67.51,216.17 L67.74,215.39 L67.97,214.63 L68.21,213.86 L68.45,213.11 L68.69,212.36 L68.93,211.62 L69.17,210.89 L69.41,210.16 L69.66,209.44 L69.91,208.73 L70.16,208.03 L70.41,207.33 L70.67,206.65 L70.92,205.96 L71.18,205.29 L71.44,204.63 L71.70,203.97 L71.97,203.32 L72.23,202.68 L72.50,202.05 L72.77,201.42 L73.04,200.81 L73.31,200.20 L73.58,199.60 L73.86,199.00 L74.14,198.42 L74.42,197.85 L74.70,197.28 L74.98,196.72 L75.27,196.17 L75.56,195.63 L75.85,195.10 L76.14,194.58 L76.43,194.06 L76.72,193.56 L77.02,193.06 L77.32,192.58 L77.62,192.10 L77.92,191.63 L78.22,191.17 L78.53,190.72 L78.84,190.28 L79.15,189.85 L79.46,189.43 L79.77,189.01 L80.08,188.61 L80.40,188.22 L80.72,187.83 L81.04,187.46 L81.36,187.10 L81.68,186.74 L82.01,186.40 L82.34,186.07 L82.67,185.74 L83.00,185.43 L83.33,185.12 L83.67,184.83 L84.00,184.55 L84.34,184.28 L84.68,184.01 L85.02,183.76 L85.37,183.52 L85.71,183.29 L86.06,183.07 L86.41,182.86 L86.76,182.66 L87.11,182.48 L87.47,182.30 L87.82,182.13 L88.18,181.98 L88.54,181.84 L88.90,181.70 L89.27,181.58 L89.63,181.47 L90.00,181.37 L90.37,181.29 L90.74,181.21 L91.11,181.15 L91.48,181.09 L91.86,181.05 L92.24,181.02 L92.62,181.01 L93.00,181.00" fill="none" stroke="#000" stroke-width="2.1" transform="translate(2.8,2.5)" opacity="0.95"/><path d="M90.00,497.00 L89.62,496.99 L89.24,496.98 L88.86,496.95 L88.49,496.91 L88.11,496.85 L87.74,496.79 L87.37,496.71 L87.00,496.63 L86.64,496.53 L86.28,496.42 L85.91,496.30 L85.56,496.16 L85.20,496.02 L84.84,495.87 L84.49,495.70 L84.14,495.52 L83.79,495.34 L83.44,495.14 L83.10,494.93 L82.75,494.71 L82.41,494.48 L82.07,494.24 L81.74,493.99 L81.40,493.72 L81.07,493.45 L80.74,493.17 L80.41,492.88 L80.08,492.57 L79.76,492.26 L79.43,491.93 L79.11,491.60 L78.79,491.26 L78.48,490.90 L78.16,490.54 L77.85,490.17 L77.54,489.78 L77.23,489.39 L76.92,488.99 L76.62,488.57 L76.31,488.15 L76.01,487.72 L75.71,487.28 L75.42,486.83 L75.12,486.37 L74.83,485.90 L74.54,485.42 L74.25,484.94 L73.96,484.44 L73.68,483.94 L73.39,483.42 L73.11,482.90 L72.83,482.37 L72.56,481.83 L72.28,481.28 L72.01,480.72 L71.74,480.15 L71.47,479.58 L71.20,479.00 L70.94,478.40 L70.67,477.80 L70.41,477.19 L70.15,476.58 L69.90,475.95 L69.64,475.32 L69.39,474.68 L69.14,474.03 L68.89,473.37 L68.64,472.71 L68.40,472.04 L68.15,471.35 L67.91,470.67 L67.67,469.97 L67.44,469.27 L67.20,468.56 L66.97,467.84 L66.74,467.11 L66.51,466.38 L66.28,465.64 L66.06,464.89 L65.83,464.14 L65.61,463.37 L65.39,462.61 L65.17,461.83 L64.96,461.05 L64.75,460.26 L64.53,459.46 L64.32,458.66 L64.12,457.85 L63.91,457.03 L63.71,456.21 L63.51,455.38 L63.31,454.54 L63.11,453.70 L62.91,452.85 L62.72,451.99 L62.53,451.13 L62.34,450.26 L62.15,449.39 L61.97,448.51 L61.78,447.62 L61.60,446.73 L61.42,445.84 L61.24,444.93 L61.07,444.02 L60.89,443.11 L60.72,442.19 L60.55,441.26 L60.38,440.33 L60.22,439.39 L60.05,438.45 L59.89,437.50 L59.73,436.55 L59.57,435.59 L59.41,434.63 L59.26,433.66 L59.11,432.69 L58.96,431.71 L58.81,430.73 L58.66,429.74 L58.52,428.74 L58.38,427.75 L58.23,426.74 L58.10,425.74 L57.96,424.73 L57.82,423.71 L57.69,422.69 L57.56,421.66 L57.43,420.63 L57.31,419.60 L57.18,418.56 L57.06,417.52 L56.94,416.47 L56.82,415.42 L56.70,414.37 L56.58,413.31 L56.47,412.25 L56.36,411.19 L56.25,410.12 L56.14,409.04 L56.04,407.97 L55.93,406.89 L55.83,405.80 L55.73,404.72 L55.64,403.63 L55.54,402.53 L55.45,401.44 L55.35,400.33 L55.26,399.23 L55.18,398.13 L55.09,397.02 L55.01,395.90 L54.92,394.79 L54.84,393.67 L54.77,392.55 L54.69,391.43 L54.61,390.30 L54.54,389.17 L54.47,388.04 L54.40,386.90 L54.34,385.77 L54.27,384.63 L54.21,383.49 L54.15,382.34 L54.09,381.20 L54.03,380.05 L53.98,378.90 L53.92,377.75 L53.87,376.60 L53.82,375.44 L53.78,374.28 L53.73,373.12 L53.69,371.96 L53.65,370.80 L53.61,369.64 L53.57,368.47 L53.53,367.30 L53.50,366.13 L53.47,364.96 L53.44,363.79 L53.41,362.62 L53.38,361.45 L53.36,360.27 L53.34,359.10 L53.32,357.92 L53.30,356.74 L53.28,355.56 L53.27,354.38 L53.25,353.20 L53.24,352.02 L53.23,350.84 L53.23,349.66 L53.22,348.47 L53.22,347.29 L53.22,346.11 L53.22,344.92 L53.22,343.74 L53.22,342.55 L53.23,341.37 L53.24,340.18 L53.25,339.00 L53.26,337.82 L53.28,336.63 L53.29,335.45 L53.31,334.26 L53.33,333.08 L53.35,331.89 L53.38,330.71 L53.40,329.53 L53.43,328.34 L53.46,327.16 L53.49,325.98 L53.52,324.80 L53.56,323.62 L53.59,322.44 L53.63,321.26 L53.67,320.08 L53.72,318.90 L53.76,317.73 L53.81,316.55 L53.86,315.38 L53.91,314.21 L53.96,313.04 L54.01,311.87 L54.07,310.70 L54.13,309.53 L54.19,308.36 L54.25,307.20 L54.31,306.04 L54.38,304.88 L54.45,303.72 L54.51,302.56 L54.59,301.40 L54.66,300.25 L54.73,299.10 L54.81,297.95 L54.89,296.80 L54.97,295.66 L55.05,294.51 L55.14,293.37 L55.22,292.23 L55.31,291.10 L55.40,289.96 L55.49,288.83 L55.59,287.70 L55.68,286.57 L55.78,285.45 L55.88,284.33 L55.98,283.21 L56.09,282.10 L56.19,280.98 L56.30,279.87 L56.41,278.77 L56.52,277.67 L56.63,276.56 L56.75,275.47 L56.86,274.37 L56.98,273.28 L57.10,272.20 L57.22,271.11 L57.35,270.03 L57.47,268.96 L57.60,267.88 L57.73,266.81 L57.86,265.75 L58.00,264.69 L58.13,263.63 L58.27,262.58 L58.41,261.53 L58.55,260.48 L58.69,259.44 L58.84,258.40 L58.98,257.37 L59.13,256.34 L59.28,255.31 L59.43,254.29 L59.59,253.27 L59.74,252.26 L59.90,251.26 L60.06,250.25 L60.22,249.26 L60.39,248.26 L60.55,247.27 L60.72,246.29 L60.89,245.31 L61.06,244.34 L61.23,243.37 L61.40,242.41 L61.58,241.45 L61.76,240.50 L61.94,239.55 L62.12,238.61 L62.31,237.67 L62.49,236.74 L62.68,235.81 L62.87,234.89 L63.06,233.98 L63.25,233.07 L63.45,232.16 L63.64,231.27 L63.84,230.38 L64.04,229.49 L64.25,228.61 L64.45,227.74 L64.66,226.87 L64.87,226.01 L65.08,225.15 L65.29,224.30 L65.50,223.46 L65.72,222.62 L65.93,221.79 L66.15,220.97 L66.37,220.15 L66.60,219.34 L66.82,218.54 L67.05,217.74 L67.28,216.95 L67.51,216.17 L67.74,215.39 L67.97,214.63 L68.21,213.86 L68.45,213.11 L68.69,212.36 L68.93,211.62 L69.17,210.89 L69.41,210.16 L69.66,209.44 L69.91,208.73 L70.16,208.03 L70.41,207.33 L70.67,206.65 L70.92,205.96 L71.18,205.29 L71.44,204.63 L71.70,203.97 L71.97,203.32 L72.23,202.68 L72.50,202.05 L72.77,201.42 L73.04,200.81 L73.31,200.20 L73.58,199.60 L73.86,199.00 L74.14,198.42 L74.42,197.85 L74.70,197.28 L74.98,196.72 L75.27,196.17 L75.56,195.63 L75.85,195.10 L76.14,194.58 L76.43,194.06 L76.72,193.56 L77.02,193.06 L77.32,192.58 L77.62,192.10 L77.92,191.63 L78.22,191.17 L78.53,190.72 L78.84,190.28 L79.15,189.85 L79.46,189.43 L79.77,189.01 L80.08,188.61 L80.40,188.22 L80.72,187.83 L81.04,187.46 L81.36,187.10 L81.68,186.74 L82.01,186.40 L82.34,186.07 L82.67,185.74 L83.00,185.43 L83.33,185.12 L83.67,184.83 L84.00,184.55 L84.34,184.28 L84.68,184.01 L85.02,183.76 L85.37,183.52 L85.71,183.29 L86.06,183.07 L86.41,182.86 L86.76,182.66 L87.11,182.48 L87.47,182.30 L87.82,182.13 L88.18,181.98 L88.54,181.84 L88.90,181.70 L89.27,181.58 L89.63,181.47 L90.00,181.37 L90.37,181.29 L90.74,181.21 L91.11,181.15 L91.48,181.09 L91.86,181.05 L92.24,181.02 L92.62,181.01 L93.00,181.00" fill="none" stroke="#eeeeee" stroke-width="1.7"/><path d="M3.7,0 L-3.0,-3.2 L-2.0,0 L-3.0,3.2Z" transform="translate(338.18,115.83) rotate(6.1) scale(1.1)" fill="#000" opacity="0.9"/><path d="M3.7,0 L-3.0,-3.2 L-2.0,0 L-3.0,3.2Z" transform="translate(348.02,117.56) rotate(14.6) scale(1.1)" fill="#000" opacity="0.9"/><path d="M3.7,0 L-3.0,-3.2 L-2.0,0 L-3.0,3.2Z" transform="translate(357.31,121.18) rotate(29.6) scale(1.1)" fill="#000" opacity="0.9"/><path d="M3.7,0 L-3.0,-3.2 L-2.0,0 L-3.0,3.2Z" transform="translate(364.23,128.17) rotate(66.4) scale(1.1)" fill="#000" opacity="0.9"/><path d="M3.7,0 L-3.0,-3.2 L-2.0,0 L-3.0,3.2Z" transform="translate(363.16,137.70) rotate(122.6) scale(1.1)" fill="#000" opacity="0.9"/><path d="M3.7,0 L-3.0,-3.2 L-2.0,0 L-3.0,3.2Z" transform="translate(355.86,144.40) rotate(148.6) scale(1.1)" fill="#000" opacity="0.9"/><path d="M3.7,0 L-3.0,-3.2 L-2.0,0 L-3.0,3.2Z" transform="translate(346.76,148.50) rotate(161.7) scale(1.1)" fill="#000" opacity="0.9"/><path d="M3.7,0 L-3.0,-3.2 L-2.0,0 L-3.0,3.2Z" transform="translate(337.06,150.90) rotate(170.2) scale(1.1)" fill="#000" opacity="0.9"/><path d="M3.7,0 L-3.0,-3.2 L-2.0,0 L-3.0,3.2Z" transform="translate(327.13,152.06) rotate(176.3) scale(1.1)" fill="#000" opacity="0.9"/><path d="M3.7,0 L-3.0,-3.2 L-2.0,0 L-3.0,3.2Z" transform="translate(311.60,152.30) rotate(180.0) scale(1.1)" fill="#000" opacity="0.9"/><path d="M3.7,0 L-3.0,-3.2 L-2.0,0 L-3.0,3.2Z" transform="translate(301.60,152.30) rotate(180.0) scale(1.1)" fill="#000" opacity="0.9"/><path d="M3.7,0 L-3.0,-3.2 L-2.0,0 L-3.0,3.2Z" transform="translate(291.60,152.30) rotate(180.0) scale(1.1)" fill="#000" opacity="0.9"/><path d="M3.7,0 L-3.0,-3.2 L-2.0,0 L-3.0,3.2Z" transform="translate(281.60,152.30) rotate(-180.0) scale(1.1)" fill="#000" opacity="0.9"/><path d="M3.7,0 L-3.0,-3.2 L-2.0,0 L-3.0,3.2Z" transform="translate(271.60,152.30) rotate(-180.0) scale(1.1)" fill="#000" opacity="0.9"/><path d="M3.7,0 L-3.0,-3.2 L-2.0,0 L-3.0,3.2Z" transform="translate(261.60,152.30) rotate(-180.0) scale(1.1)" fill="#000" opacity="0.9"/><path d="M3.7,0 L-3.0,-3.2 L-2.0,0 L-3.0,3.2Z" transform="translate(251.60,152.30) rotate(180.0) scale(1.1)" fill="#000" opacity="0.9"/><path d="M3.7,0 L-3.0,-3.2 L-2.0,0 L-3.0,3.2Z" transform="translate(241.60,152.30) rotate(180.0) scale(1.1)" fill="#000" opacity="0.9"/><path d="M3.7,0 L-3.0,-3.2 L-2.0,0 L-3.0,3.2Z" transform="translate(231.60,152.30) rotate(-180.0) scale(1.1)" fill="#000" opacity="0.9"/><path d="M3.7,0 L-3.0,-3.2 L-2.0,0 L-3.0,3.2Z" transform="translate(221.60,152.30) rotate(-180.0) scale(1.1)" fill="#000" opacity="0.9"/><path d="M3.7,0 L-3.0,-3.2 L-2.0,0 L-3.0,3.2Z" transform="translate(211.60,152.30) rotate(180.0) scale(1.1)" fill="#000" opacity="0.9"/><path d="M3.7,0 L-3.0,-3.2 L-2.0,0 L-3.0,3.2Z" transform="translate(201.60,152.30) rotate(180.0) scale(1.1)" fill="#000" opacity="0.9"/><path d="M3.7,0 L-3.0,-3.2 L-2.0,0 L-3.0,3.2Z" transform="translate(191.60,152.30) rotate(180.0) scale(1.1)" fill="#000" opacity="0.9"/><path d="M3.7,0 L-3.0,-3.2 L-2.0,0 L-3.0,3.2Z" transform="translate(181.60,152.30) rotate(-180.0) scale(1.1)" fill="#000" opacity="0.9"/><path d="M3.7,0 L-3.0,-3.2 L-2.0,0 L-3.0,3.2Z" transform="translate(171.60,152.30) rotate(180.0) scale(1.1)" fill="#000" opacity="0.9"/><path d="M3.7,0 L-3.0,-3.2 L-2.0,0 L-3.0,3.2Z" transform="translate(161.60,152.30) rotate(180.0) scale(1.1)" fill="#000" opacity="0.9"/><path d="M3.7,0 L-3.0,-3.2 L-2.0,0 L-3.0,3.2Z" transform="translate(151.60,152.30) rotate(180.0) scale(1.1)" fill="#000" opacity="0.9"/><path d="M3.7,0 L-3.0,-3.2 L-2.0,0 L-3.0,3.2Z" transform="translate(141.60,152.30) rotate(180.0) scale(1.1)" fill="#000" opacity="0.9"/><path d="M3.7,0 L-3.0,-3.2 L-2.0,0 L-3.0,3.2Z" transform="translate(131.60,152.30) rotate(180.0) scale(1.1)" fill="#000" opacity="0.9"/><path d="M3.7,0 L-3.0,-3.2 L-2.0,0 L-3.0,3.2Z" transform="translate(121.60,152.30) rotate(180.0) scale(1.1)" fill="#000" opacity="0.9"/><path d="M3.7,0 L-3.0,-3.2 L-2.0,0 L-3.0,3.2Z" transform="translate(111.60,152.30) rotate(180.0) scale(1.1)" fill="#000" opacity="0.9"/><path d="M3.7,0 L-3.0,-3.2 L-2.0,0 L-3.0,3.2Z" transform="translate(101.60,152.30) rotate(180.0) scale(1.1)" fill="#000" opacity="0.9"/><path d="M3.7,0 L-3.0,-3.2 L-2.0,0 L-3.0,3.2Z" transform="translate(91.60,152.30) rotate(180.0) scale(1.1)" fill="#000" opacity="0.9"/><path d="M3.7,0 L-3.0,-3.2 L-2.0,0 L-3.0,3.2Z" transform="translate(78.22,153.80) rotate(165.6) scale(1.1)" fill="#000" opacity="0.9"/><path d="M3.7,0 L-3.0,-3.2 L-2.0,0 L-3.0,3.2Z" transform="translate(68.95,157.46) rotate(151.0) scale(1.1)" fill="#000" opacity="0.9"/><path d="M3.7,0 L-3.0,-3.2 L-2.0,0 L-3.0,3.2Z" transform="translate(60.96,163.43) rotate(135.2) scale(1.1)" fill="#000" opacity="0.9"/><path d="M3.7,0 L-3.0,-3.2 L-2.0,0 L-3.0,3.2Z" transform="translate(54.91,171.35) rotate(119.7) scale(1.1)" fill="#000" opacity="0.9"/><path d="M3.7,0 L-3.0,-3.2 L-2.0,0 L-3.0,3.2Z" transform="translate(51.15,180.59) rotate(105.0) scale(1.1)" fill="#000" opacity="0.9"/><path d="M3.7,0 L-3.0,-3.2 L-2.0,0 L-3.0,3.2Z" transform="translate(49.76,190.46) rotate(91.2) scale(1.1)" fill="#000" opacity="0.9"/><path d="M3.7,0 L-3.0,-3.2 L-2.0,0 L-3.0,3.2Z" transform="translate(50.72,200.39) rotate(77.6) scale(1.1)" fill="#000" opacity="0.9"/><path d="M3.7,0 L-3.0,-3.2 L-2.0,0 L-3.0,3.2Z" transform="translate(54.01,209.81) rotate(63.8) scale(1.1)" fill="#000" opacity="0.9"/><path d="M3.7,0 L-3.0,-3.2 L-2.0,0 L-3.0,3.2Z" transform="translate(59.56,218.10) rotate(48.5) scale(1.1)" fill="#000" opacity="0.9"/><path d="M3.7,0 L-3.0,-3.2 L-2.0,0 L-3.0,3.2Z" transform="translate(67.10,224.62) rotate(33.1) scale(1.1)" fill="#000" opacity="0.9"/><path d="M3.7,0 L-3.0,-3.2 L-2.0,0 L-3.0,3.2Z" transform="translate(76.08,228.94) rotate(18.6) scale(1.1)" fill="#000" opacity="0.9"/><path d="M3.7,0 L-3.0,-3.2 L-2.0,0 L-3.0,3.2Z" transform="translate(85.84,231.02) rotate(5.7) scale(1.1)" fill="#000" opacity="0.9"/><path d="M3.7,0 L-3.0,-3.2 L-2.0,0 L-3.0,3.2Z" transform="translate(335.78,113.03) rotate(6.1)" fill="#ffe200"/><path d="M3.7,0 L-3.0,-3.2 L-2.0,0 L-3.0,3.2Z" transform="translate(345.62,114.76) rotate(14.6)" fill="#ffe200"/><path d="M3.7,0 L-3.0,-3.2 L-2.0,0 L-3.0,3.2Z" transform="translate(354.91,118.38) rotate(29.6)" fill="#ffe200"/><path d="M3.7,0 L-3.0,-3.2 L-2.0,0 L-3.0,3.2Z" transform="translate(361.83,125.37) rotate(66.4)" fill="#ffe200"/><path d="M3.7,0 L-3.0,-3.2 L-2.0,0 L-3.0,3.2Z" transform="translate(360.76,134.90) rotate(122.6)" fill="#ffe200"/><path d="M3.7,0 L-3.0,-3.2 L-2.0,0 L-3.0,3.2Z" transform="translate(353.46,141.60) rotate(148.6)" fill="#ffe200"/><path d="M3.7,0 L-3.0,-3.2 L-2.0,0 L-3.0,3.2Z" transform="translate(344.36,145.70) rotate(161.7)" fill="#ffe200"/><path d="M3.7,0 L-3.0,-3.2 L-2.0,0 L-3.0,3.2Z" transform="translate(334.66,148.10) rotate(170.2)" fill="#ffe200"/><path d="M3.7,0 L-3.0,-3.2 L-2.0,0 L-3.0,3.2Z" transform="translate(324.73,149.26) rotate(176.3)" fill="#ffe200"/><path d="M3.7,0 L-3.0,-3.2 L-2.0,0 L-3.0,3.2Z" transform="translate(309.20,149.50) rotate(180.0)" fill="#ffe200"/><path d="M3.7,0 L-3.0,-3.2 L-2.0,0 L-3.0,3.2Z" transform="translate(299.20,149.50) rotate(180.0)" fill="#ffe200"/><path d="M3.7,0 L-3.0,-3.2 L-2.0,0 L-3.0,3.2Z" transform="translate(289.20,149.50) rotate(180.0)" fill="#ffe200"/><path d="M3.7,0 L-3.0,-3.2 L-2.0,0 L-3.0,3.2Z" transform="translate(279.20,149.50) rotate(-180.0)" fill="#ffe200"/><path d="M3.7,0 L-3.0,-3.2 L-2.0,0 L-3.0,3.2Z" transform="translate(269.20,149.50) rotate(-180.0)" fill="#ffe200"/><path d="M3.7,0 L-3.0,-3.2 L-2.0,0 L-3.0,3.2Z" transform="translate(259.20,149.50) rotate(-180.0)" fill="#ffe200"/><path d="M3.7,0 L-3.0,-3.2 L-2.0,0 L-3.0,3.2Z" transform="translate(249.20,149.50) rotate(180.0)" fill="#ffe200"/><path d="M3.7,0 L-3.0,-3.2 L-2.0,0 L-3.0,3.2Z" transform="translate(239.20,149.50) rotate(180.0)" fill="#ffe200"/><path d="M3.7,0 L-3.0,-3.2 L-2.0,0 L-3.0,3.2Z" transform="translate(229.20,149.50) rotate(-180.0)" fill="#ffe200"/><path d="M3.7,0 L-3.0,-3.2 L-2.0,0 L-3.0,3.2Z" transform="translate(219.20,149.50) rotate(-180.0)" fill="#ffe200"/><path d="M3.7,0 L-3.0,-3.2 L-2.0,0 L-3.0,3.2Z" transform="translate(209.20,149.50) rotate(180.0)" fill="#ffe200"/><path d="M3.7,0 L-3.0,-3.2 L-2.0,0 L-3.0,3.2Z" transform="translate(199.20,149.50) rotate(180.0)" fill="#ffe200"/><path d="M3.7,0 L-3.0,-3.2 L-2.0,0 L-3.0,3.2Z" transform="translate(189.20,149.50) rotate(180.0)" fill="#ffe200"/><path d="M3.7,0 L-3.0,-3.2 L-2.0,0 L-3.0,3.2Z" transform="translate(179.20,149.50) rotate(-180.0)" fill="#ffe200"/><path d="M3.7,0 L-3.0,-3.2 L-2.0,0 L-3.0,3.2Z" transform="translate(169.20,149.50) rotate(180.0)" fill="#ffe200"/><path d="M3.7,0 L-3.0,-3.2 L-2.0,0 L-3.0,3.2Z" transform="translate(159.20,149.50) rotate(180.0)" fill="#ffe200"/><path d="M3.7,0 L-3.0,-3.2 L-2.0,0 L-3.0,3.2Z" transform="translate(149.20,149.50) rotate(180.0)" fill="#ffe200"/><path d="M3.7,0 L-3.0,-3.2 L-2.0,0 L-3.0,3.2Z" transform="translate(139.20,149.50) rotate(180.0)" fill="#ffe200"/><path d="M3.7,0 L-3.0,-3.2 L-2.0,0 L-3.0,3.2Z" transform="translate(129.20,149.50) rotate(180.0)" fill="#ffe200"/><path d="M3.7,0 L-3.0,-3.2 L-2.0,0 L-3.0,3.2Z" transform="translate(119.20,149.50) rotate(180.0)" fill="#ffe200"/><path d="M3.7,0 L-3.0,-3.2 L-2.0,0 L-3.0,3.2Z" transform="translate(109.20,149.50) rotate(180.0)" fill="#ffe200"/><path d="M3.7,0 L-3.0,-3.2 L-2.0,0 L-3.0,3.2Z" transform="translate(99.20,149.50) rotate(180.0)" fill="#ffe200"/><path d="M3.7,0 L-3.0,-3.2 L-2.0,0 L-3.0,3.2Z" transform="translate(89.20,149.50) rotate(180.0)" fill="#ffe200"/><path d="M3.7,0 L-3.0,-3.2 L-2.0,0 L-3.0,3.2Z" transform="translate(75.82,151.00) rotate(165.6)" fill="#ffe200"/><path d="M3.7,0 L-3.0,-3.2 L-2.0,0 L-3.0,3.2Z" transform="translate(66.55,154.66) rotate(151.0)" fill="#ffe200"/><path d="M3.7,0 L-3.0,-3.2 L-2.0,0 L-3.0,3.2Z" transform="translate(58.56,160.63) rotate(135.2)" fill="#ffe200"/><path d="M3.7,0 L-3.0,-3.2 L-2.0,0 L-3.0,3.2Z" transform="translate(52.51,168.55) rotate(119.7)" fill="#ffe200"/><path d="M3.7,0 L-3.0,-3.2 L-2.0,0 L-3.0,3.2Z" transform="translate(48.75,177.79) rotate(105.0)" fill="#ffe200"/><path d="M3.7,0 L-3.0,-3.2 L-2.0,0 L-3.0,3.2Z" transform="translate(47.36,187.66) rotate(91.2)" fill="#ffe200"/><path d="M3.7,0 L-3.0,-3.2 L-2.0,0 L-3.0,3.2Z" transform="translate(48.32,197.59) rotate(77.6)" fill="#ffe200"/><path d="M3.7,0 L-3.0,-3.2 L-2.0,0 L-3.0,3.2Z" transform="translate(51.61,207.01) rotate(63.8)" fill="#ffe200"/><path d="M3.7,0 L-3.0,-3.2 L-2.0,0 L-3.0,3.2Z" transform="translate(57.16,215.30) rotate(48.5)" fill="#ffe200"/><path d="M3.7,0 L-3.0,-3.2 L-2.0,0 L-3.0,3.2Z" transform="translate(64.70,221.82) rotate(33.1)" fill="#ffe200"/><path d="M3.7,0 L-3.0,-3.2 L-2.0,0 L-3.0,3.2Z" transform="translate(73.68,226.14) rotate(18.6)" fill="#ffe200"/><path d="M3.7,0 L-3.0,-3.2 L-2.0,0 L-3.0,3.2Z" transform="translate(83.44,228.22) rotate(5.7)" fill="#ffe200"/><path d="M885,100.5 L899.5,108 L885,116.5Z" fill="#f8f8f8"/><path d="M92.5,173 L107,181 L92.5,189Z" fill="#f8f8f8"/><polygon points="322.66,151.22 319.52,154.36 315.08,154.36 311.94,151.22 311.94,146.78 315.08,143.64 319.52,143.64 322.66,146.78" fill="#1a1a1a" stroke="#ffe200" stroke-width="1.3"/><polygon points="321.18,150.61 318.91,152.88 315.69,152.88 313.42,150.61 313.42,147.39 315.69,145.12 318.91,145.12 321.18,147.39" fill="#ffe200"/><polygon points="93.56,151.22 90.42,154.36 85.98,154.36 82.84,151.22 82.84,146.78 85.98,143.64 90.42,143.64 93.56,146.78" fill="#1a1a1a" stroke="#ffe200" stroke-width="1.3"/><polygon points="92.08,150.61 89.81,152.88 86.59,152.88 84.32,150.61 84.32,147.39 86.59,145.12 89.81,145.12 92.08,147.39" fill="#ffe200"/><polygon points="766.36,295.02 763.22,298.16 758.78,298.16 755.64,295.02 755.64,290.58 758.78,287.44 763.22,287.44 766.36,290.58" fill="#1a1a1a" stroke="#ffe200" stroke-width="1.3"/><polygon points="764.88,294.41 762.61,296.68 759.39,296.68 757.12,294.41 757.12,291.19 759.39,288.92 762.61,288.92 764.88,291.19" fill="#ffe200"/><polygon points="538.16,294.92 535.02,298.06 530.58,298.06 527.44,294.92 527.44,290.48 530.58,287.34 535.02,287.34 538.16,290.48" fill="#1a1a1a" stroke="#ffe200" stroke-width="1.3"/><polygon points="536.68,294.31 534.41,296.58 531.19,296.58 528.92,294.31 528.92,291.09 531.19,288.82 534.41,288.82 536.68,291.09" fill="#ffe200"/><polygon points="490.36,115.22 487.22,118.36 482.78,118.36 479.64,115.22 479.64,110.78 482.78,107.64 487.22,107.64 490.36,110.78" fill="#1a1a1a" stroke="#f8f8f8" stroke-width="1.3"/><polygon points="488.88,114.61 486.61,116.88 483.39,116.88 481.12,114.61 481.12,111.39 483.39,109.12 486.61,109.12 488.88,111.39" fill="#f8f8f8"/><polygon points="1162.36,499.22 1159.22,502.36 1154.78,502.36 1151.64,499.22 1151.64,494.78 1154.78,491.64 1159.22,491.64 1162.36,494.78" fill="#1a1a1a" stroke="#f8f8f8" stroke-width="1.3"/><polygon points="1160.88,498.61 1158.61,500.88 1155.39,500.88 1153.12,498.61 1153.12,495.39 1155.39,493.12 1158.61,493.12 1160.88,495.39" fill="#f8f8f8"/><polygon points="94.36,499.22 91.22,502.36 86.78,502.36 83.64,499.22 83.64,494.78 86.78,491.64 91.22,491.64 94.36,494.78" fill="#1a1a1a" stroke="#f8f8f8" stroke-width="1.3"/><polygon points="92.88,498.61 90.61,500.88 87.39,500.88 85.12,498.61 85.12,495.39 87.39,493.12 90.61,493.12 92.88,495.39" fill="#f8f8f8"/></svg>
</body></html>
